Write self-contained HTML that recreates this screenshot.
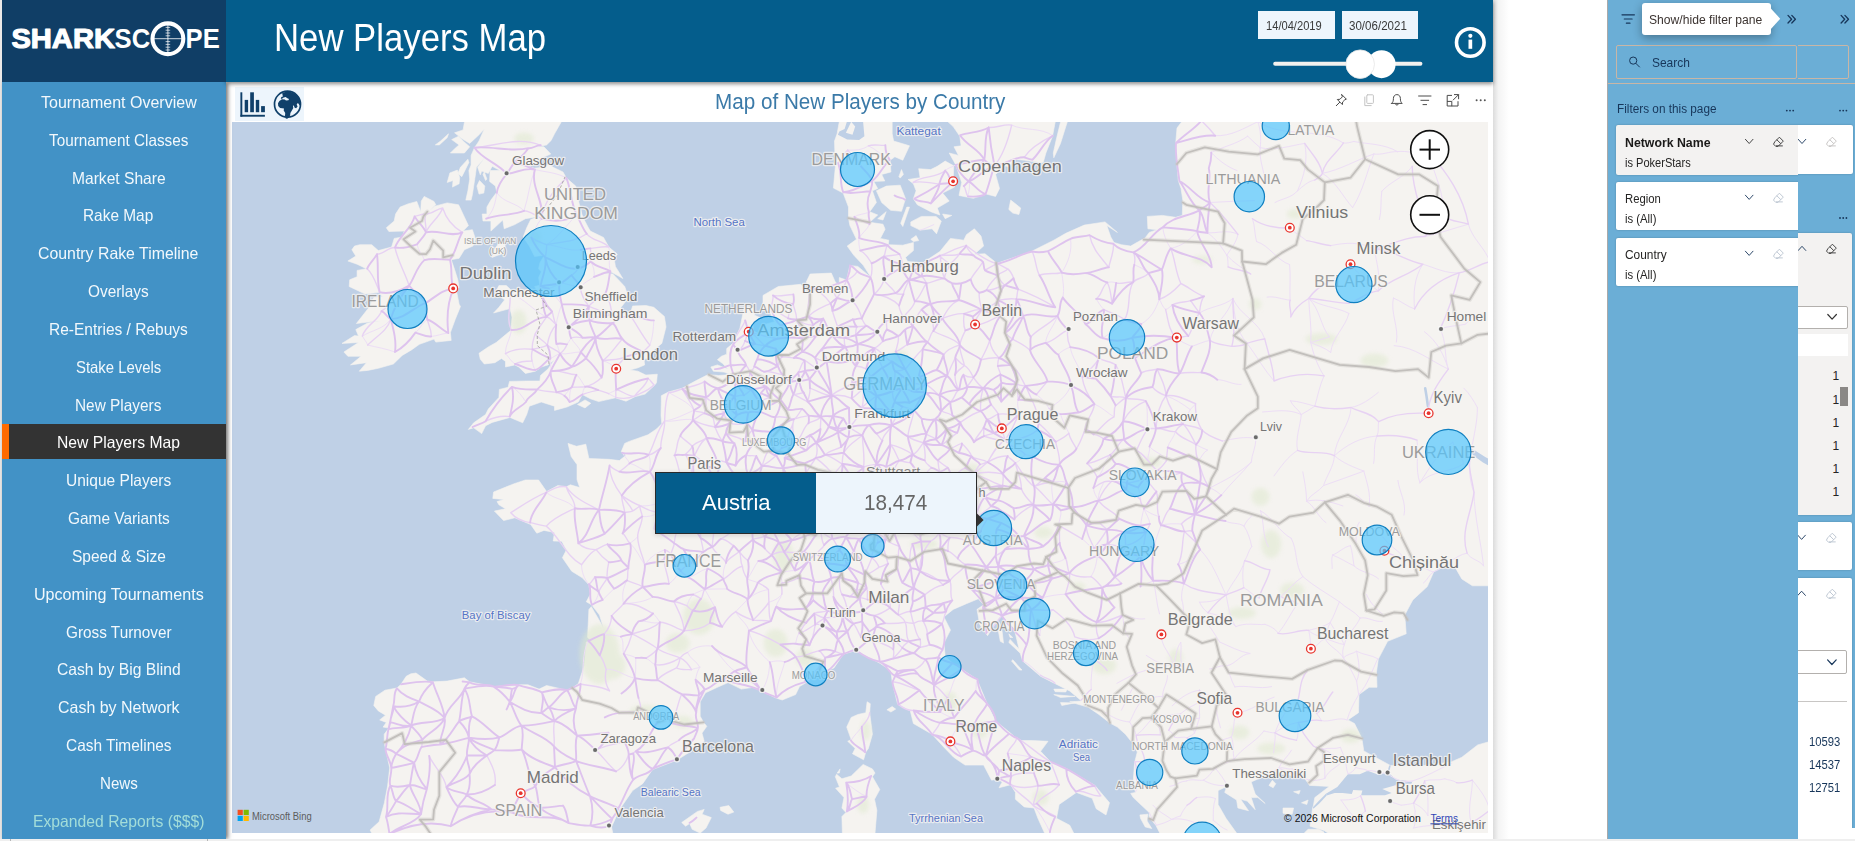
<!DOCTYPE html><html lang="en"><head><meta charset="utf-8"><title>New Players Map</title><style>
*{box-sizing:border-box;margin:0;padding:0}
html,body{width:1855px;height:841px;overflow:hidden;background:#fff}
body{font-family:"Liberation Sans",sans-serif;position:relative}
.abs,.t{position:absolute}
.t{white-space:nowrap;line-height:1;transform-origin:0 50%;display:block}
#leftstrip{left:0;top:0;width:2px;height:841px;background:#ebe9e8}
#logo{left:2px;top:0;width:224px;height:82px;background:#103e66}
#header{left:226px;top:0;width:1267px;height:82px;background:#045d8c;box-shadow:0 2px 4px rgba(0,0,0,.45)}
#sidebar{left:2px;top:82px;width:224px;height:756.5px;background:#4292c6;box-shadow:2px 0 4px rgba(0,0,0,.55)}
#sidebar a{position:absolute;left:0;width:224px;height:34.7px;display:block;text-decoration:none}
#sidebar a.sel{background:#333;border-left:7px solid #ff6a00}
#bottomstrip{left:0;top:838.5px;width:1855px;height:3px;background:#efefef}
#pageshadow{left:1493px;top:0;width:16px;height:838.5px;background:linear-gradient(90deg,#dcdcdc,#f4f4f4 35%,#fff)}
#iconbg{left:235px;top:87px;width:69px;height:34px;background:#edf5fc}
.datebox{top:11px;height:28px;background:#edf5fc}
#fp{left:1607px;top:0;width:191px;height:838.5px;background:#6baed6;border-left:1px solid #a9a9a9;overflow:hidden}
#fpb{left:1798px;top:0;width:57px;height:838.5px;background:#6baed6;overflow:hidden}
.card{background:#fff;border-radius:2px;box-shadow:0 0 2px rgba(0,0,0,.25)}
.tan{border:1px solid #c9b6a6}
</style></head><body>
<div id="leftstrip" class="abs"></div>
<div id="pageshadow" class="abs"></div>
<div id="report" class="abs" style="left:226px;top:82px;width:1267px;height:756px;background:#fff">
</div>
<div id="iconbg" class="abs"></div>
<svg class="abs" style="left:235px;top:87px" width="70" height="34" viewBox="235 87 70 34">
<g fill="#10406a">
<rect x="240.4" y="92.3" width="1.9" height="24.4"/><rect x="240.4" y="114.8" width="24.5" height="1.9"/>
<rect x="244.7" y="99.9" width="3.4" height="12.3"/>
<rect x="250.2" y="92.3" width="3.7" height="19.9"/>
<rect x="255.8" y="99.9" width="3.4" height="12.3"/>
<rect x="261.1" y="106.1" width="3.8" height="6.1"/>
</g>
<circle cx="287.5" cy="104.2" r="13" fill="#edf5fc" stroke="#10406a" stroke-width="1.7"/>
<path fill="#10406a" d="M282.2 93.2c2.4-1.2 5.6-1.7 8.6-1.2 3 .6 5.8 2.3 7.6 4.8 1.5 2 2.3 4.4 2.3 6.9l-1 1.7-1.3-1.9-1-.2-.7 1.1.9 2.2-1.5 1.6-1.4-.4-.9-2.3-.9.3.4 2.3-1.4 2.3-1.5 2.7-.3 2.4-2.3 2.9-1.9.4-.9-2.9.2-2.8-1.5-2.7.3-1.9-1.9-.3-2-.3-1.9-2-.2-2.6 1.4-2.3 2.5-1.7 2.8.2 1.3 1 2.4-.2.6-1.3-2.1-.9-1.1-1.2-2.2.5-1.2 1.2-1.6.3.5-1.8 1.6-.6-.3-1.3z"/>
</svg>
<svg class="abs" style="left:1330px;top:90px" width="160" height="22" viewBox="1330 90 160 22" fill="none" stroke="#4a4a4a" stroke-width="1" stroke-linecap="round" stroke-linejoin="round">
<path d="M1341.8 94.6l4.6 4.6-1.6.6-2.2 2.2-.2 2.6-2.5-2.5-3.8 3.8 3.8-3.8-2.6-2.6 2.6-.2 2.2-2.2z"/>
<g stroke="#c4c4c4"><rect x="1366.8" y="94.8" width="6.6" height="8.6" rx="0.8"/><path d="M1364.8 97v8.6h6.4"/></g>
<path d="M1391.6 103.4h10.6c-1.4-1.2-1.8-2.4-1.8-4.8 0-2.4-1.4-4-3.5-4s-3.5 1.6-3.5 4c0 2.4-.4 3.6-1.8 4.8zM1395.6 104.4c.2 1 2.4 1 2.6 0"/>
<path d="M1418.6 96h12.4M1420.9 100.3h7.8M1423 104.6h3.6"/>
<path d="M1451.6 95.4h-4.4v10.6h10.8v-4.4M1454.4 94.6h4.2v4.2M1458.4 94.8l-5.2 5.2M1447.4 101.4h4.4v4.4"/>
<g fill="#555" stroke="none"><circle cx="1476.6" cy="100.2" r="1"/><circle cx="1480.7" cy="100.2" r="1"/><circle cx="1484.8" cy="100.2" r="1"/></g>
</svg>
<span class="t" style="left:714.60px;top:91.33px;font-size:21.70px;color:#3b7aa8;transform:scaleX(0.9524);">Map of New Players by Country</span>
<svg id="map" width="1256" height="711" viewBox="232 122 1256 711" style="position:absolute;left:232px;top:122px;display:block" font-family="Liberation Sans, sans-serif">
<rect x="232" y="122" width="1256" height="711" fill="#bfd0e6"/>
<g id="land" fill="#f5f3f0" stroke="#f5f3f0" stroke-width="0.6" stroke-linejoin="round">
<path d="M424.2 196.4 L434.0 201.5 L435.8 204.8 L428.7 211.3 L434.8 206.2 L447.2 202.9 L458.6 204.8 L465.8 220.0 L468.4 225.6 L463.1 231.1 L472.4 229.7 L475.6 239.3 L472.9 246.1 L464.4 249.7 L459.1 258.3 L451.2 259.7 L454.6 269.6 L457.8 279.8 L459.1 287.4 L456.5 290.9 L459.1 304.2 L460.5 306.4 L455.2 319.5 L450.4 332.6 L451.2 340.4 L435.8 342.1 L434.0 339.1 L419.4 344.3 L411.5 349.9 L402.2 355.4 L393.4 364.0 L378.3 368.3 L367.7 370.4 L359.3 371.2 L366.4 362.7 L350.5 364.9 L361.1 356.3 L347.9 356.3 L343.9 352.0 L358.5 342.5 L342.0 343.4 L354.5 335.6 L358.5 336.1 L355.8 329.6 L367.7 323.0 L381.0 320.9 L370.4 321.7 L356.4 323.5 L369.1 307.3 L373.8 297.6 L382.3 296.7 L379.7 292.3 L365.1 294.0 L349.2 286.5 L349.7 279.8 L357.1 276.7 L357.1 270.4 L366.4 268.7 L357.1 264.2 L347.9 261.0 L355.8 256.1 L351.9 249.7 L354.5 246.1 L359.8 244.7 L371.7 244.7 L378.3 250.6 L391.6 247.0 L394.2 238.4 L402.2 237.0 L404.3 231.1 L388.9 231.5 L386.3 227.8 L394.2 221.0 L395.6 214.0 L400.1 207.1 L408.0 203.9 L416.8 201.5 L420.7 211.7 L421.3 201.1Z"/>
<path d="M563.8 104.6 L561.1 122.2 L554.5 133.8 L551.1 140.5 L546.6 144.9 L537.3 146.8 L543.9 146.8 L550.8 154.0 L539.9 158.7 L530.7 166.3 L520.1 164.9 L534.6 168.2 L542.6 167.3 L549.2 164.4 L553.2 167.3 L563.0 172.0 L566.4 178.1 L575.7 186.1 L578.3 200.1 L581.8 214.0 L583.6 218.7 L588.4 227.8 L590.3 231.1 L603.5 237.4 L608.8 247.0 L617.3 254.2 L614.1 258.3 L615.4 266.4 L622.8 278.5 L618.1 275.8 L610.7 271.8 L600.9 273.1 L612.8 274.0 L618.1 279.4 L624.7 286.5 L628.7 297.6 L620.7 307.7 L624.7 313.0 L630.5 313.0 L632.6 306.0 L645.9 305.5 L653.8 307.3 L664.4 316.5 L666.0 327.0 L661.8 343.4 L653.8 349.9 L649.9 357.2 L644.0 359.3 L644.6 364.9 L637.9 367.8 L630.0 370.0 L637.9 371.2 L645.9 375.1 L657.3 374.2 L656.5 382.7 L654.6 385.2 L645.1 394.1 L635.3 396.6 L626.0 401.2 L615.4 397.8 L598.7 401.6 L590.3 398.7 L582.3 394.5 L578.3 402.0 L566.9 407.0 L554.5 410.4 L554.5 406.2 L541.3 402.0 L529.3 406.2 L526.7 414.5 L522.7 422.8 L510.0 417.4 L492.2 422.4 L485.6 425.7 L481.7 433.6 L473.7 427.8 L468.4 429.4 L473.7 422.8 L485.6 414.5 L488.3 409.1 L498.9 397.4 L499.4 389.4 L508.1 387.3 L509.5 381.4 L526.7 381.0 L539.9 381.0 L540.5 375.5 L547.9 369.1 L554.5 359.7 L547.9 364.9 L541.3 367.0 L535.4 371.2 L525.4 373.4 L518.7 367.0 L514.8 364.9 L505.5 367.0 L505.5 361.4 L501.5 358.4 L494.9 362.7 L484.3 364.0 L480.3 359.3 L479.0 353.3 L488.3 346.9 L496.2 342.5 L510.8 330.4 L512.1 317.4 L510.0 308.6 L493.6 313.0 L498.9 307.3 L504.7 299.8 L501.5 297.6 L496.2 290.9 L498.9 285.6 L506.3 285.6 L512.1 290.9 L509.5 294.5 L517.9 289.6 L526.7 290.1 L532.0 288.7 L538.6 293.2 L534.6 286.5 L539.9 285.2 L538.6 277.6 L541.3 271.8 L538.6 268.7 L539.9 262.8 L544.4 255.2 L534.6 256.5 L529.3 246.1 L523.2 237.0 L526.7 227.8 L530.7 219.6 L538.6 216.4 L525.4 218.7 L514.8 224.6 L504.2 228.8 L502.8 220.0 L490.9 231.1 L490.9 221.0 L483.0 221.0 L482.2 214.0 L486.9 214.0 L486.9 207.1 L490.9 200.1 L496.8 192.2 L495.4 186.1 L489.6 181.4 L490.1 170.6 L500.2 170.6 L492.2 166.3 L488.3 173.4 L481.7 171.1 L480.3 174.8 L477.7 167.3 L485.6 156.8 L476.4 167.3 L475.6 173.4 L473.7 186.1 L472.4 194.5 L471.1 200.1 L465.8 200.1 L467.9 190.8 L469.7 179.1 L468.9 170.6 L471.1 164.9 L471.1 155.4 L474.5 147.7 L479.0 141.0 L484.3 129.0 L479.0 134.8 L469.7 143.4 L461.8 138.6 L454.6 132.8 L463.1 129.9 L464.4 122.2 L465.8 104.6Z"/>
<path d="M479.5 180.5 L484.8 186.1 L483.8 193.1 L479.0 194.1 L476.9 186.1Z"/>
<path d="M447.2 182.4 L449.9 172.9 L457.3 170.1 L459.7 177.7 L459.1 183.8 L452.5 187.1 L453.0 180.5Z"/>
<path d="M457.8 173.4 L461.8 176.7 L468.9 162.5 L467.9 159.2 L460.5 167.3Z"/>
<path d="M450.4 153.0 L464.4 153.0 L469.7 146.8 L463.1 141.0 L458.6 136.2 L451.7 139.6 L459.1 144.9 L455.2 148.2Z"/>
<path d="M435.3 144.9 L440.6 141.0 L448.5 133.8 L447.2 137.7 L439.3 144.9Z"/>
<path d="M484.3 172.0 L486.9 179.1 L485.6 180.5 L483.0 174.4Z"/>
<path d="M503.6 240.6 L505.2 246.1 L501.5 253.8 L492.2 257.4 L494.4 249.7 L498.9 242.9Z"/>
<path d="M577.5 404.5 L585.0 399.9 L590.8 403.3 L585.0 407.9Z"/>
<path d="M371.7 842.3 L371.7 833.1 L370.1 830.0 L379.1 821.8 L384.4 802.8 L387.6 786.1 L389.7 767.9 L385.5 748.8 L384.2 742.4 L384.2 734.2 L388.9 728.1 L383.1 727.1 L386.3 722.4 L379.7 719.9 L385.5 715.2 L378.3 710.9 L373.8 705.5 L375.7 696.4 L385.0 690.2 L396.9 688.0 L400.9 684.4 L406.2 676.3 L410.9 673.8 L416.0 673.0 L427.3 681.1 L433.2 681.8 L447.2 681.1 L464.4 677.8 L469.5 681.8 L493.6 686.6 L518.7 684.8 L528.0 684.8 L539.1 689.1 L546.6 685.5 L566.9 690.2 L572.2 688.0 L578.3 683.7 L584.4 665.3 L586.3 642.0 L591.6 640.9 L587.6 637.5 L588.9 609.4 L591.3 606.7 L599.5 620.7 L603.5 628.2 L599.5 615.0 L591.6 604.8 L586.3 601.8 L590.3 594.2 L588.9 584.7 L582.3 577.8 L571.7 571.2 L562.4 557.7 L566.4 550.0 L561.9 541.4 L569.1 541.4 L553.2 541.0 L554.5 532.4 L543.9 530.4 L536.8 533.2 L530.7 524.5 L514.8 517.8 L503.6 520.6 L494.4 511.1 L505.5 508.7 L498.9 504.8 L497.0 501.6 L504.2 499.6 L492.8 498.4 L493.6 492.0 L513.4 484.0 L525.4 480.0 L538.6 480.0 L546.6 491.6 L557.9 485.6 L566.4 486.8 L570.4 484.8 L579.7 487.6 L577.0 479.6 L577.0 464.6 L571.2 456.5 L568.0 443.4 L576.5 446.3 L585.8 444.2 L588.9 458.5 L608.8 459.3 L619.4 460.6 L626.0 455.3 L621.3 451.6 L624.7 443.4 L629.2 441.4 L648.0 434.8 L656.5 429.0 L661.8 423.7 L661.0 415.4 L661.3 401.6 L661.3 395.7 L668.4 392.0 L682.2 388.2 L696.2 380.6 L708.1 374.6 L718.7 375.5 L730.7 374.6 L724.0 372.1 L713.4 371.2 L710.8 367.0 L717.4 364.9 L728.0 369.1 L722.7 363.6 L717.4 359.7 L721.4 356.3 L726.7 354.2 L726.7 348.6 L732.8 343.4 L739.9 328.3 L744.4 306.4 L753.2 307.3 L754.5 315.2 L759.8 317.4 L753.2 321.7 L753.2 330.4 L759.8 334.8 L766.4 323.9 L774.4 321.7 L769.1 310.8 L762.4 309.9 L763.0 301.1 L763.0 295.4 L778.3 286.5 L800.9 284.3 L806.2 290.9 L811.5 293.2 L806.2 282.1 L810.1 274.0 L831.3 273.1 L835.3 282.1 L839.3 285.6 L839.3 277.6 L845.9 279.8 L844.6 288.7 L847.2 277.6 L849.9 265.5 L857.8 266.4 L871.1 277.6 L863.1 265.1 L853.8 255.2 L847.2 246.1 L856.5 239.3 L849.9 225.6 L848.5 218.2 L848.5 207.1 L843.2 193.1 L833.4 188.0 L835.3 167.3 L834.5 141.0 L837.1 133.8 L839.3 121.7 L839.3 109.5 L897.5 109.5 L897.5 109.5 L892.2 119.3 L892.2 133.8 L893.6 141.0 L909.5 145.8 L902.8 160.2 L894.9 156.8 L890.1 160.2 L890.9 172.0 L881.7 174.4 L884.8 181.0 L873.7 181.4 L877.7 188.5 L872.4 190.8 L876.4 202.5 L869.7 211.7 L877.7 215.0 L869.7 222.3 L883.0 224.2 L885.1 229.2 L880.3 238.4 L888.8 240.2 L888.3 244.7 L902.8 245.2 L913.4 242.5 L913.4 250.6 L905.5 257.4 L907.6 261.5 L922.7 262.8 L939.9 251.5 L950.5 238.4 L963.8 240.2 L966.4 234.7 L974.4 228.8 L981.0 236.1 L983.6 246.1 L974.4 254.2 L985.0 253.8 L996.9 263.3 L1011.5 258.3 L1031.3 251.5 L1053.8 240.2 L1065.8 233.3 L1084.3 225.1 L1105.0 221.9 L1117.4 232.4 L1106.8 225.6 L1110.8 237.0 L1114.0 242.5 L1121.4 244.7 L1130.7 246.1 L1138.6 241.5 L1145.2 237.9 L1149.2 232.4 L1157.1 229.7 L1147.9 228.8 L1147.3 216.4 L1162.4 215.4 L1175.7 217.3 L1182.3 215.4 L1182.8 200.1 L1181.0 188.5 L1178.3 180.5 L1177.0 164.9 L1175.7 143.4 L1177.0 128.0 L1183.6 119.3 L1186.3 109.5 L1498.9 109.5 L1498.9 585.8 L1488.0 585.8 L1472.4 585.8 L1461.8 578.9 L1455.2 567.4 L1440.6 567.4 L1434.0 571.2 L1427.3 586.6 L1412.8 599.9 L1404.8 615.0 L1406.2 633.8 L1387.6 641.3 L1378.3 659.1 L1376.5 671.9 L1377.0 687.3 L1369.1 687.3 L1359.0 694.6 L1358.5 712.7 L1347.9 719.9 L1354.5 723.5 L1361.9 738.5 L1363.8 750.9 L1390.3 765.4 L1419.4 766.1 L1451.2 761.9 L1461.8 757.3 L1477.7 744.9 L1488.0 742.0 L1498.9 741.3 L1498.9 842.3 L1328.0 842.3 L1328.0 833.1 L1324.0 830.4 L1310.0 826.2 L1312.6 808.0 L1313.4 805.6 L1314.8 797.6 L1329.3 786.4 L1309.5 785.4 L1304.7 778.4 L1285.6 774.2 L1265.8 775.6 L1251.2 781.9 L1255.2 794.1 L1265.2 803.5 L1257.8 797.6 L1251.2 797.6 L1255.2 809.7 L1247.2 801.1 L1240.6 799.3 L1248.5 810.7 L1237.9 808.0 L1236.6 800.0 L1224.7 792.4 L1226.8 786.4 L1218.1 790.6 L1218.1 804.5 L1226.0 818.3 L1236.6 833.1 L1236.6 842.3 L1159.8 842.3 L1159.8 833.1 L1155.8 825.2 L1149.2 817.6 L1149.2 812.5 L1133.3 797.6 L1130.7 793.4 L1135.4 792.4 L1133.3 780.2 L1134.6 762.6 L1137.3 752.0 L1132.5 743.1 L1125.4 734.2 L1117.4 727.1 L1109.5 722.8 L1098.9 714.5 L1088.3 707.3 L1069.7 701.8 L1081.7 701.1 L1069.7 691.0 L1055.2 683.7 L1040.6 676.3 L1022.6 660.9 L1019.4 650.5 L1014.1 628.2 L1002.2 615.8 L995.6 622.6 L987.6 635.7 L979.7 624.4 L977.0 609.4 L983.6 604.8 L978.3 598.8 L966.4 603.7 L953.2 609.4 L943.9 616.9 L950.5 630.1 L943.9 643.1 L945.2 656.1 L952.4 663.1 L977.0 679.3 L986.3 701.8 L995.6 721.0 L1008.8 731.7 L1019.4 740.6 L1032.6 740.6 L1048.0 741.3 L1040.6 751.3 L1051.2 762.6 L1066.3 768.6 L1094.9 785.4 L1109.5 802.8 L1106.0 814.9 L1096.2 808.7 L1092.2 798.3 L1076.4 792.4 L1059.1 804.5 L1056.5 818.3 L1069.7 825.2 L1073.7 833.1 L1073.7 842.3 L1044.6 842.3 L1044.6 833.1 L1037.9 818.3 L1034.0 808.0 L1024.2 806.9 L1015.4 799.3 L1015.4 792.4 L1010.7 784.7 L999.0 787.8 L1002.2 781.9 L996.9 779.1 L991.6 780.2 L983.6 765.1 L965.1 765.1 L953.7 757.3 L943.4 746.7 L932.0 734.2 L913.4 723.5 L910.3 710.9 L897.5 703.7 L892.2 681.8 L890.9 670.8 L880.3 663.5 L863.1 654.2 L856.0 650.5 L843.2 654.2 L834.0 667.9 L818.1 673.8 L812.0 676.3 L807.5 681.8 L799.5 686.6 L795.6 694.6 L782.3 700.0 L776.5 698.2 L761.1 691.0 L753.2 687.3 L741.3 689.1 L728.0 682.6 L717.4 687.3 L705.5 692.8 L700.2 701.8 L700.2 716.3 L703.6 722.4 L706.8 726.3 L702.0 733.1 L704.2 741.3 L693.6 749.5 L677.1 760.1 L652.5 769.6 L642.7 783.7 L632.6 790.6 L619.4 809.7 L611.5 826.9 L612.8 833.1 L612.8 842.3Z"/>
<path d="M937.3 109.5 L945.2 119.3 L953.2 126.6 L959.8 136.2 L961.1 145.8 L954.0 146.8 L958.5 155.4 L949.2 153.0 L955.8 164.9 L961.7 182.4 L959.0 195.5 L973.3 198.3 L986.3 194.1 L995.6 196.4 L999.5 188.5 L995.6 174.4 L1004.8 165.8 L1010.1 167.3 L1012.8 159.2 L1024.7 160.2 L1032.6 161.6 L1043.2 162.5 L1045.9 153.0 L1052.5 136.2 L1055.2 122.2 L1056.5 109.5Z"/>
<path d="M1053.8 157.8 L1060.5 143.4 L1065.8 126.6 L1069.7 114.4 L1069.7 109.5 L1063.1 109.5 L1060.5 122.2 L1056.5 138.6 L1053.3 153.0Z"/>
<path d="M876.4 190.8 L886.4 186.1 L900.2 185.2 L905.5 198.7 L901.5 211.3 L890.7 210.3 L881.7 202.5Z"/>
<path d="M902.8 226.5 L909.5 207.1 L906.8 207.1 L900.7 223.3Z"/>
<path d="M877.7 218.7 L886.2 211.7 L883.0 220.0Z"/>
<path d="M913.4 183.8 L908.1 179.5 L920.1 177.7 L918.7 168.7 L930.7 169.6 L937.3 166.3 L945.2 161.1 L953.7 165.8 L953.2 181.4 L954.5 187.1 L942.6 193.1 L949.2 201.1 L937.3 208.0 L939.9 215.0 L930.7 211.7 L917.4 204.8 L913.4 198.7 L916.1 190.8Z"/>
<path d="M910.8 221.9 L921.4 216.4 L936.0 216.4 L941.3 221.0 L936.5 233.8 L932.0 228.8 L920.1 230.1 L910.8 225.6Z"/>
<path d="M942.6 214.0 L951.8 215.4 L945.2 218.7Z"/>
<path d="M1008.8 209.4 L1010.7 200.1 L1020.7 208.0 L1018.9 214.5 L1012.8 213.1Z"/>
<path d="M910.8 239.3 L916.1 235.6 L918.7 240.6 L913.4 241.5Z"/>
<path d="M898.9 176.7 L901.5 169.6 L903.4 174.4 L900.2 178.1Z"/>
<path d="M924.0 133.8 L928.0 132.4 L925.4 134.8Z"/>
<path d="M867.1 701.8 L870.3 703.7 L869.7 712.7 L872.4 734.2 L868.4 748.4 L865.8 752.0 L863.6 759.8 L852.5 753.8 L855.2 748.4 L847.7 741.3 L851.2 739.6 L846.7 727.1 L851.2 717.4 L857.8 714.5 L865.8 712.7Z"/>
<path d="M863.1 764.4 L872.4 768.9 L875.0 773.1 L872.4 776.7 L879.8 789.6 L874.5 799.3 L876.9 810.4 L875.0 833.1 L875.0 842.3 L843.2 842.3 L842.4 833.1 L841.9 816.6 L845.9 812.5 L841.9 808.0 L844.0 797.6 L835.6 788.2 L839.5 787.1 L835.3 776.7 L836.6 774.2 L841.9 778.8 L851.2 776.0Z"/>
<path d="M837.1 773.1 L840.1 768.9 L839.3 773.1Z"/>
<path d="M886.9 709.8 L892.2 706.5 L895.7 709.1 L890.9 712.0Z"/>
<path d="M681.7 822.5 L697.5 811.4 L704.2 809.4 L702.0 814.2 L711.3 817.6 L706.0 828.0 L700.2 833.1 L692.2 829.3 L689.6 823.5 L685.6 826.2Z"/>
<path d="M720.1 807.3 L728.8 805.6 L733.8 812.1 L728.0 814.2 L720.6 810.4Z"/>
<path d="M1140.5 818.3 L1139.9 814.9 L1147.9 814.2 L1147.1 821.1 L1151.8 828.6 L1145.2 826.9Z"/>
<path d="M1283.0 813.2 L1283.0 808.0 L1293.6 808.0 L1292.2 814.2 L1286.9 814.2Z"/>
<path d="M1268.9 785.4 L1272.4 780.2 L1275.8 783.7 L1273.2 787.8Z"/>
<path d="M1293.6 791.7 L1300.2 790.6 L1298.9 794.1Z"/>
<path d="M1301.5 802.8 L1308.1 800.0 L1306.8 804.5Z"/>
<path d="M1304.2 833.1 L1308.1 829.3 L1318.7 829.3 L1324.0 832.1 L1324.0 842.3 L1304.2 842.3Z"/>
<path d="M1003.5 622.6 L1008.8 622.6 L1011.5 628.2 L1006.2 629.3Z"/>
<path d="M999.5 622.6 L1002.2 631.9 L1003.5 643.1 L1000.3 641.3 L998.2 630.1Z"/>
<path d="M1010.1 639.4 L1022.0 652.4 L1019.4 652.4 L1008.8 642.4Z"/>
<path d="M1012.8 659.8 L1022.0 670.1 L1019.4 670.1 L1011.5 660.9Z"/>
<path d="M1053.8 689.1 L1067.1 689.1 L1065.8 692.0 L1055.2 691.7Z"/>
<path d="M1053.8 694.6 L1075.0 696.4 L1060.5 697.5Z"/>
<path d="M1060.5 702.6 L1075.0 702.9 L1061.8 705.5Z"/>
<path d="M1008.8 633.8 L1012.8 637.5 L1010.1 637.5Z"/>
</g>
<g id="water" fill="#bfd0e6">
<path d="M837.9 134.8 L847.2 139.6 L859.1 140.1 L864.4 136.2 L863.1 121.7 L865.8 118.3 L859.1 116.8 L855.2 121.7 L847.2 120.7 L844.6 129.0 L839.3 131.4Z"/>
<path d="M1325.9 793.8 L1337.3 787.1 L1347.9 774.2 L1359.8 774.2 L1367.7 770.7 L1377.0 774.2 L1387.1 773.1 L1388.9 773.1 L1395.6 779.5 L1412.2 781.6 L1411.5 783.7 L1400.9 783.7 L1382.3 788.9 L1391.6 793.1 L1385.0 795.2 L1361.1 795.2 L1362.4 790.6 L1353.2 789.9 L1351.8 794.1 L1342.6 793.1 L1334.6 793.1 L1326.7 795.5Z"/>
<path d="M1312.9 807.3 L1318.7 801.1 L1325.9 793.8 L1326.7 795.5 L1319.3 803.5 L1313.4 808.7Z"/>
<path d="M1387.1 773.1 L1388.9 773.1 L1390.8 765.4 L1389.2 765.4Z"/>
</g>
<g fill="#f5f3f0">
<path d="M845.9 132.8 L851.2 121.7 L855.2 126.6 L852.5 134.8Z"/>
</g>
<g id="green" fill="#dfe9cf" opacity="0.55" style="filter:blur(2.2px)">
<ellipse cx="599.5" cy="654.2" rx="20" ry="30"/>
<ellipse cx="611.5" cy="665.3" rx="14" ry="14"/>
<ellipse cx="802.2" cy="504.8" rx="9" ry="22"/>
<ellipse cx="783.6" cy="555.8" rx="10" ry="16"/>
<ellipse cx="698.9" cy="616.9" rx="16" ry="18"/>
<ellipse cx="677.7" cy="643.1" rx="12" ry="10"/>
<ellipse cx="775.7" cy="643.1" rx="12" ry="14"/>
<ellipse cx="804.8" cy="657.9" rx="9" ry="9"/>
<ellipse cx="900.2" cy="356.3" rx="8" ry="6"/>
<ellipse cx="836.6" cy="492.8" rx="7" ry="16"/>
<ellipse cx="971.7" cy="472.7" rx="10" ry="9"/>
<ellipse cx="645.9" cy="710.9" rx="16" ry="6"/>
<ellipse cx="683.0" cy="721.7" rx="10" ry="6"/>
<ellipse cx="1271.1" cy="544.1" rx="10" ry="14"/>
<ellipse cx="1292.2" cy="590.4" rx="12" ry="8"/>
<ellipse cx="1241.9" cy="613.1" rx="14" ry="6"/>
<ellipse cx="1149.2" cy="462.6" rx="12" ry="5"/>
<ellipse cx="1260.5" cy="496.8" rx="9" ry="9"/>
<ellipse cx="1043.2" cy="532.4" rx="9" ry="6"/>
<ellipse cx="1006.2" cy="540.2" rx="12" ry="6"/>
<ellipse cx="924.0" cy="544.1" rx="14" ry="5"/>
<ellipse cx="1239.3" cy="732.4" rx="10" ry="7"/>
<ellipse cx="1271.1" cy="748.4" rx="14" ry="6"/>
<ellipse cx="1350.5" cy="736.0" rx="10" ry="7"/>
<ellipse cx="1175.7" cy="657.9" rx="7" ry="9"/>
<ellipse cx="1104.2" cy="665.3" rx="12" ry="9"/>
<ellipse cx="1077.7" cy="586.6" rx="8" ry="4"/>
<ellipse cx="524.0" cy="138.6" rx="10" ry="6"/>
<ellipse cx="534.6" cy="237.0" rx="6" ry="6"/>
<ellipse cx="518.7" cy="321.7" rx="8" ry="12"/>
<ellipse cx="950.5" cy="701.8" rx="7" ry="10"/>
<ellipse cx="979.7" cy="730.6" rx="8" ry="8"/>
<ellipse cx="1040.6" cy="797.6" rx="8" ry="8"/>
<ellipse cx="865.8" cy="730.6" rx="5" ry="10"/>
<ellipse cx="863.1" cy="804.5" rx="6" ry="9"/>
<ellipse cx="1321.4" cy="339.1" rx="16" ry="6"/>
<ellipse cx="1374.4" cy="360.6" rx="14" ry="7"/>
<ellipse cx="1255.2" cy="304.2" rx="6" ry="6"/>
<ellipse cx="1294.9" cy="214.0" rx="8" ry="5"/>
<ellipse cx="1202.2" cy="259.7" rx="10" ry="4"/>
</g>
<path d="M1425.2 388.2 L1426.6 396.6 L1427.9 406.2" fill="none" stroke="#bfd0e6" stroke-width="2.6" stroke-linecap="round"/>
<path d="M1467.1 447.5 L1475.0 450.4 L1485.6 457.3 L1498.9 464.6 L1498.9 470.7 L1483.0 462.6 L1473.7 455.7" fill="#bfd0e6"/>
<g id="roads" fill="none" stroke-linecap="round">
<path stroke="#eddef6" stroke-width="1" d="M1257.8 121.7C1283.5 138.9 1317.6 126.2 1343.4 143.0M1474.0 492.4C1462.3 463.8 1477.8 435.5 1477.4 407.5M1483.5 565.8C1481.0 541.5 1474.3 517.0 1474.0 492.4M1427.9 151.1C1433.2 172.6 1445.3 193.1 1443.2 216.4M1448.3 369.1C1430.6 361.0 1414.9 346.9 1394.2 345.6M1352.6 207.6C1362.9 191.2 1367.1 171.8 1373.8 154.0M1257.8 121.7C1239.3 115.4 1220.0 122.4 1201.4 120.7M1322.4 173.4C1340.5 169.9 1356.6 159.8 1373.8 154.0M1200.1 549.6C1212.7 562.2 1218.5 579.4 1226.0 595.0M1419.9 482.8C1429.3 468.2 1438.1 452.5 1452.8 442.2M1232.9 298.5C1239.3 315.0 1259.3 321.4 1264.7 338.7M1334.4 455.7C1335.3 438.2 1350.3 425.0 1351.1 407.5M1209.9 488.0C1224.1 480.4 1239.3 473.5 1251.2 462.2M1297.5 190.8C1304.3 175.8 1308.2 159.9 1304.7 143.4M1232.9 298.5C1229.5 314.6 1212.6 323.9 1209.9 340.4M1419.9 482.8C1431.5 469.9 1450.5 473.1 1463.6 463.8M1247.2 343.4C1235.6 330.8 1234.4 314.3 1232.9 298.5M1334.4 455.7C1346.4 444.9 1360.5 437.1 1377.0 436.0M1247.2 343.4C1256.4 355.6 1263.9 369.5 1274.0 381.0M1422.8 264.2C1413.9 277.8 1413.2 293.5 1414.6 309.0M1322.4 173.4C1336.1 181.4 1342.6 196.4 1352.6 207.6M1425.2 236.5C1439.7 233.3 1454.1 228.2 1468.4 224.2M1257.8 121.7C1244.3 128.0 1231.1 136.6 1215.2 135.7M1353.7 141.5C1368.2 144.3 1384.1 143.6 1397.4 151.6M1304.7 143.4C1290.1 145.7 1275.3 151.1 1260.2 147.7M1221.3 495.2C1230.4 483.6 1241.8 473.5 1251.2 462.2M1209.9 202.5C1224.5 201.7 1239.7 201.0 1254.4 200.6M1339.4 601.8C1327.4 593.5 1313.9 586.4 1302.8 576.6M1448.3 369.1C1444.0 354.5 1437.0 341.1 1424.4 331.7M1393.4 298.0C1390.1 312.9 1399.1 327.3 1396.4 342.1M1308.7 298.5C1309.2 313.0 1311.9 327.9 1310.8 342.5M580.5 684.0C585.1 670.2 580.9 654.2 588.4 640.9M1374.4 249.3C1360.5 241.3 1345.4 242.6 1330.7 245.6M1308.7 298.5C1320.1 308.7 1320.2 325.5 1329.3 336.9M1412.0 781.2C1425.9 777.1 1438.6 769.1 1451.7 763.3M1468.4 224.2C1471.9 238.7 1485.4 247.9 1489.9 261.9M546.6 316.9C533.2 311.4 524.6 297.5 510.0 294.0M1348.9 313.4C1345.5 327.5 1332.1 337.4 1330.7 352.4M1308.7 298.5C1320.6 306.9 1336.3 306.7 1348.9 313.4M1323.5 485.6C1337.0 481.3 1350.4 475.6 1363.8 471.1M1419.9 482.8C1414.9 469.0 1418.9 454.2 1417.0 440.1M534.9 169.6C529.5 182.7 528.5 197.5 524.0 210.8M1052.8 135.7C1040.6 126.9 1024.6 131.3 1011.7 125.1M576.8 215.0C566.5 224.5 558.9 237.3 546.6 244.7M1471.1 822.5C1466.8 808.4 1472.5 794.1 1472.4 780.2M1374.4 249.3C1376.5 262.9 1381.1 276.8 1378.1 290.9M1413.6 828.0C1427.1 825.0 1441.2 824.3 1454.9 826.9M1291.2 538.3C1278.9 531.6 1272.7 517.5 1260.5 510.7M1263.9 731.0C1255.9 742.1 1242.0 747.7 1234.2 759.1M1448.3 369.1C1444.0 356.2 1446.9 341.5 1440.1 329.1M1358.7 694.6C1368.1 684.4 1371.9 670.7 1377.8 658.7M1289.6 264.6C1276.4 260.2 1269.9 245.6 1256.5 241.5M1237.1 712.7C1251.1 711.6 1261.6 701.2 1274.2 697.1M1302.8 576.6C1294.5 565.3 1297.8 550.1 1291.2 538.3M1247.7 136.2C1236.9 144.2 1223.0 146.5 1211.2 152.5M1381.8 191.3C1390.3 181.2 1404.6 177.5 1412.2 166.3M1349.5 264.2C1359.0 272.9 1367.3 283.6 1378.1 290.9M1244.6 560.8C1241.5 573.7 1231.1 583.1 1226.0 595.0M1301.3 414.5C1288.8 408.6 1275.5 411.1 1262.6 412.0M1433.4 572.0C1445.7 567.9 1453.8 555.5 1467.1 553.1M748.9 630.8C751.6 643.9 760.2 653.7 769.8 662.2M1422.8 264.2C1434.7 267.7 1446.4 274.1 1459.4 272.7M1268.4 546.8C1262.1 535.7 1264.4 522.4 1260.5 510.7M1271.6 686.6C1259.5 689.6 1246.9 684.8 1234.8 686.9M1342.8 505.9C1331.2 502.0 1319.1 498.2 1306.6 501.2M776.5 697.5C775.6 684.9 782.0 673.7 784.7 662.0M1232.9 298.5C1223.3 306.6 1209.7 306.2 1199.5 313.0M1297.5 450.4C1295.0 438.2 1300.4 426.4 1301.3 414.5M1324.0 375.9C1317.4 365.8 1313.4 354.3 1310.8 342.5M1369.1 506.3C1371.1 494.1 1366.9 482.5 1363.8 471.1M1289.6 264.6C1290.9 276.4 1289.4 288.5 1290.1 300.2M1297.5 603.7C1290.6 613.2 1285.8 624.4 1278.2 633.4M1404.0 515.1C1406.9 502.8 1399.2 491.9 1397.9 480.4M1070.5 238.8C1072.4 251.2 1068.2 262.4 1061.8 272.7M1427.9 815.6C1428.0 804.0 1428.7 792.0 1424.7 780.9M1489.6 810.4C1487.4 798.4 1479.5 789.3 1472.4 780.2M1297.5 450.4C1287.5 456.7 1280.9 466.7 1274.0 475.9M546.6 244.7C558.0 245.3 568.9 251.9 580.8 249.8M734.9 671.2C725.4 664.7 720.0 654.1 712.1 646.1M1153.2 580.8C1156.3 591.6 1156.2 603.2 1159.5 613.9M1222.6 441.0C1233.5 438.9 1244.7 436.0 1256.0 438.5M1226.0 595.0C1228.5 605.7 1229.3 617.2 1235.8 626.7M1334.4 455.7C1342.8 463.2 1353.5 467.1 1363.8 471.1M390.8 319.1C384.1 329.2 371.6 330.1 362.4 336.1M496.8 192.7C503.0 202.8 516.5 202.5 524.0 210.8M574.9 508.3C567.7 499.1 554.5 499.8 546.3 492.4M534.9 169.6C545.4 172.2 556.8 172.3 566.4 178.1M1264.7 180.0C1263.9 169.3 1258.7 158.8 1260.2 147.7M1219.7 642.0C1213.7 633.1 1209.0 622.8 1199.3 616.9M1161.4 634.9C1160.6 646.7 1171.7 654.1 1173.3 665.0M1249.9 653.5C1239.2 651.6 1229.5 646.3 1219.7 642.0M947.6 697.9C952.2 688.3 953.4 676.7 961.4 668.6M1404.3 558.1C1415.0 560.3 1423.0 569.2 1433.4 572.0M1419.4 205.2C1421.6 215.5 1424.3 226.0 1425.2 236.5M1334.4 455.7C1334.0 466.7 1326.6 475.5 1323.5 485.6M1070.3 347.1C1071.5 357.8 1079.8 366.2 1082.0 376.6M1314.8 406.2C1317.6 396.1 1319.7 385.5 1324.0 375.9M1091.2 689.5C1090.4 678.9 1092.2 668.3 1093.8 657.9M1170.7 248.4C1181.8 246.3 1190.2 239.6 1197.1 231.1M1237.1 170.6C1227.0 166.9 1218.6 160.2 1211.2 152.5M1070.8 385.6C1067.0 396.4 1057.8 402.5 1049.1 408.5M1217.8 696.4C1214.0 707.2 1217.8 717.6 1220.5 727.8M1199.5 690.2C1188.4 691.7 1179.9 698.3 1172.2 705.8M694.0 410.3C684.4 414.2 675.1 419.7 664.6 421.0M1049.9 832.1C1045.4 822.7 1040.5 813.3 1033.4 805.6M1378.3 392.4C1370.1 398.8 1361.7 405.5 1351.1 407.5M1145.2 670.5C1135.2 673.2 1125.9 678.3 1116.9 683.3M1235.8 626.7C1228.7 618.0 1218.3 615.1 1208.0 612.8M668.7 392.4C677.3 398.0 687.9 401.2 694.0 410.3M1360.1 618.0C1356.3 627.6 1346.3 633.9 1344.4 644.6M1237.9 234.3C1228.1 229.2 1217.5 233.3 1207.5 232.9M1427.9 151.1C1417.9 155.4 1407.4 150.1 1397.4 151.6M1141.3 323.9C1151.1 318.6 1155.8 309.3 1159.3 299.4M1226.8 255.2C1233.4 263.0 1242.7 268.0 1250.7 274.0M1275.0 732.8C1278.3 723.1 1283.3 714.2 1290.1 706.5M606.2 669.4C617.0 668.1 625.0 676.8 635.0 678.2M1404.3 558.1C1398.5 549.8 1388.4 545.6 1382.8 537.1M652.8 596.9C644.0 602.5 633.6 602.9 623.6 603.7M761.7 691.0C767.4 682.3 769.4 672.3 769.8 662.2M1356.6 681.1C1361.1 671.3 1358.6 661.1 1356.6 651.3M1280.9 596.5C1288.7 590.6 1294.3 581.8 1302.8 576.6M1136.2 735.3C1144.7 729.9 1148.9 719.9 1156.9 714.1M1057.5 315.8C1054.9 325.3 1046.4 332.5 1045.6 342.9M1306.6 501.2C1306.5 491.4 1304.7 481.5 1302.8 471.9M1226.8 255.2C1221.4 246.9 1216.0 238.4 1207.5 232.9M1323.0 749.2C1322.5 758.9 1325.8 768.7 1324.8 778.4M1265.0 624.4C1255.3 625.2 1245.1 622.2 1235.8 626.7M1349.5 264.2C1343.5 271.9 1336.4 278.7 1327.5 283.0M1325.9 522.6C1317.9 517.0 1315.0 506.4 1306.6 501.2M1039.8 635.3C1040.2 624.8 1045.7 616.6 1053.0 609.7M1173.3 665.0C1162.9 665.9 1154.4 660.9 1146.3 655.4M1102.8 338.2C1110.6 332.7 1119.4 328.0 1124.6 319.5M693.0 419.9C683.6 417.7 674.1 422.5 664.6 421.0M1381.8 191.3C1380.4 200.6 1381.8 210.4 1379.4 219.6M1147.6 429.4C1146.6 420.1 1148.4 410.3 1145.8 401.1M395.0 352.0C386.3 348.8 376.8 347.2 367.7 345.1M486.2 218.7C493.7 211.7 495.5 202.2 496.8 192.7M1165.9 395.7C1174.7 398.9 1182.9 403.8 1190.2 409.6M1354.0 565.8C1360.7 572.8 1371.6 572.5 1378.6 578.9M1304.7 778.4C1295.7 776.1 1287.3 771.6 1278.7 768.2M1358.7 694.6C1354.2 702.6 1349.5 710.9 1347.1 719.9M1373.6 463.4C1375.5 454.5 1372.8 444.7 1377.0 436.0M1226.0 595.0C1218.3 601.2 1208.9 602.0 1199.5 602.2M1324.8 778.4C1328.3 769.1 1339.4 767.1 1344.2 759.1M1244.6 560.8C1242.2 569.6 1242.4 578.8 1243.8 587.7M1366.4 594.2C1369.7 602.9 1376.7 609.0 1383.4 615.0M1356.6 681.1C1352.7 673.2 1349.1 664.8 1343.4 657.9M1343.4 657.9C1339.1 649.9 1328.9 647.1 1325.1 638.6M1178.1 564.3C1187.6 562.9 1193.9 556.1 1200.1 549.6M1419.4 205.2C1427.6 208.1 1435.8 211.8 1443.2 216.4M1339.4 601.8C1345.6 608.0 1354.5 611.1 1360.1 618.0M1330.1 622.6C1334.3 630.2 1340.8 636.6 1344.4 644.6M1357.9 820.1C1350.6 815.0 1346.1 807.0 1341.0 800.0M1129.6 722.0C1120.6 721.3 1112.5 717.6 1105.2 712.3M1257.8 121.7C1260.8 130.1 1261.2 139.0 1260.2 147.7M644.8 565.0C640.0 557.9 636.7 549.4 630.2 543.4M1231.3 737.1C1223.1 739.5 1214.8 742.5 1207.2 746.7M1249.9 653.5C1240.4 653.9 1236.0 664.2 1227.1 665.7M1097.3 477.1C1104.6 471.5 1103.6 460.8 1110.2 454.8M1347.1 719.9C1338.5 716.4 1329.9 722.7 1321.4 720.6M1440.1 329.1C1448.0 325.7 1456.9 326.1 1465.2 324.3M1275.0 732.8C1281.8 727.2 1289.8 724.0 1298.3 722.4M687.5 652.4C694.6 646.5 703.2 645.1 712.1 646.1M1297.5 190.8C1291.8 197.9 1282.3 198.4 1275.0 202.5M889.6 159.7C881.7 156.5 876.4 148.9 868.4 145.8M1129.6 722.0C1133.7 714.8 1135.8 706.1 1142.6 700.4M1237.1 712.7C1232.2 720.0 1235.2 729.5 1231.3 737.1M664.8 549.9C656.5 552.6 649.5 557.5 644.8 565.0M653.8 320.4C653.5 328.7 652.8 337.2 649.9 345.1M1314.8 406.2C1306.8 404.0 1298.7 401.2 1290.4 400.8M1062.8 297.6C1064.7 289.3 1062.7 280.9 1061.8 272.7M846.2 782.6C852.2 788.2 859.3 792.9 866.6 796.9M1171.7 819.4C1180.2 817.8 1188.3 820.0 1196.1 823.1M511.3 330.0C510.8 338.2 504.9 345.3 505.5 353.7M610.4 271.3C607.8 263.4 610.9 254.9 608.8 247.0M1217.3 379.7C1225.5 379.5 1232.8 385.1 1241.1 384.4M1227.1 785.7C1218.8 786.0 1210.7 784.6 1203.5 780.2M1463.6 463.8C1462.4 455.5 1454.6 450.2 1452.8 442.2M1256.0 438.5C1256.1 446.7 1251.8 454.2 1251.2 462.2M1200.9 701.8C1193.6 705.1 1186.1 708.6 1180.2 714.1M1354.0 565.8C1346.8 562.5 1340.0 557.8 1332.5 555.0M1121.4 710.2C1124.6 702.9 1129.1 696.0 1132.2 688.8M1393.4 298.0C1400.8 300.9 1407.1 306.5 1414.6 309.0M1183.6 623.7C1183.0 615.8 1184.6 607.6 1181.8 599.9M1173.3 665.0C1176.7 657.8 1175.6 648.9 1180.7 642.4M1180.7 642.4C1182.2 650.1 1178.9 658.5 1182.6 666.1M1373.8 154.0C1381.8 155.4 1389.5 151.2 1397.4 151.6M1226.8 255.2C1230.9 248.5 1236.7 242.4 1237.9 234.3M623.6 603.7C621.5 595.5 623.0 587.6 627.0 580.4M1031.1 756.9C1023.4 755.4 1015.4 754.5 1007.7 753.4M1477.4 407.5C1473.6 400.7 1469.6 393.7 1463.9 388.2M1152.9 805.2C1157.9 811.5 1165.5 814.7 1171.7 819.4M1094.4 404.1C1101.8 406.8 1107.3 413.0 1114.0 416.9M1323.0 749.2C1330.3 751.8 1336.0 758.4 1344.2 759.1M1180.2 714.1C1172.5 713.9 1164.6 717.1 1156.9 714.1M735.7 611.6C738.7 618.9 747.0 622.8 748.9 630.8M1225.2 665.7C1230.0 672.0 1230.8 680.3 1234.8 686.9M1267.1 297.1C1275.0 295.8 1282.5 299.5 1290.1 300.2M1252.5 218.7C1255.0 226.0 1254.5 234.1 1256.5 241.5M747.6 599.5C753.4 594.0 760.6 590.9 768.4 589.5M1042.7 597.6C1050.1 595.8 1057.8 594.3 1065.5 594.2M1306.6 501.2C1310.5 494.2 1318.9 491.8 1323.5 485.6M1308.7 630.4C1315.9 628.2 1323.7 627.1 1330.1 622.6M1357.9 820.1C1350.3 819.0 1342.6 820.8 1335.2 821.8M1022.8 660.9C1029.9 664.1 1034.9 670.3 1040.6 675.2M1122.7 615.0C1123.6 622.6 1123.8 630.5 1128.3 637.2M1330.1 622.6C1334.1 616.1 1336.3 608.7 1339.4 601.8M1360.1 618.0C1367.8 616.4 1374.6 622.5 1382.3 621.4M1377.8 658.7C1371.3 654.8 1363.2 655.0 1356.6 651.3M727.2 588.9C719.8 589.3 712.2 588.7 704.8 589.2M1170.7 248.4C1166.5 242.0 1163.5 235.0 1162.7 227.4M1053.0 504.4C1053.7 496.9 1050.2 489.4 1052.4 482.0M1144.7 618.8C1137.0 619.9 1129.9 616.8 1122.7 615.0M1359.3 522.2C1354.8 528.9 1356.7 536.8 1355.8 544.1M1310.8 342.5C1317.4 345.7 1324.9 347.5 1330.7 352.4M1231.3 737.1C1234.5 744.0 1232.2 751.9 1234.2 759.1M1166.5 460.7C1163.1 453.4 1154.0 452.5 1149.5 446.5M1278.7 768.2C1281.4 761.2 1288.0 756.7 1291.5 750.2M649.9 471.9C642.3 471.1 636.9 464.7 629.6 463.4M1213.3 820.4C1213.2 813.1 1212.9 805.6 1215.4 798.6M1097.5 555.8C1096.3 563.0 1095.3 570.4 1090.9 576.6M1244.0 526.1C1248.1 532.2 1250.2 539.4 1251.7 546.5M1167.5 675.6C1167.8 683.0 1161.9 689.3 1162.7 696.8M541.5 218.7C536.4 224.0 534.7 231.4 531.4 237.6M659.9 622.2C652.7 625.0 645.6 619.5 638.5 621.4M1289.1 228.3C1294.9 232.2 1301.0 236.3 1306.6 240.6M639.9 505.6C647.2 506.7 654.2 504.6 661.0 502.4M688.3 577.4C695.4 576.1 700.5 569.8 707.6 568.5M561.7 304.2C559.4 310.9 557.1 317.7 556.2 324.8M1154.5 545.3C1156.1 538.5 1158.7 531.8 1161.0 525.2M868.4 145.8C862.2 150.4 854.9 150.2 847.7 150.1M1156.9 714.1C1156.9 721.2 1160.2 727.9 1160.3 734.9M1227.1 785.7C1224.4 779.2 1219.7 773.7 1215.4 768.2M747.3 578.9C751.7 573.5 754.0 566.5 758.3 561.0M588.9 584.3C583.9 578.8 581.7 572.0 581.5 564.7M560.1 283.0C567.0 283.4 573.6 286.5 580.5 287.4M1060.5 414.1C1062.4 420.8 1065.9 427.0 1068.9 433.2M560.1 353.7C567.1 354.8 573.9 352.0 580.8 351.9M1467.1 553.1C1470.5 559.9 1479.6 559.7 1483.5 565.8M704.8 589.2C708.3 595.0 711.3 601.4 715.0 607.2M525.9 402.0C522.1 396.3 518.2 390.3 511.9 386.9M1162.7 696.8C1155.5 694.9 1149.5 700.6 1142.6 700.4M1350.5 545.7C1352.4 552.2 1353.0 559.2 1354.0 565.8M1161.0 525.2C1167.7 523.5 1174.6 523.6 1181.4 524.0M561.7 304.2C557.5 298.9 553.2 293.5 548.7 288.5M1297.5 190.8C1302.8 186.5 1307.7 181.3 1314.8 180.0M1350.5 545.7C1343.5 546.7 1339.0 552.9 1332.5 555.0M950.5 741.3C952.3 734.7 956.2 729.0 960.1 723.5M635.8 657.9C635.6 664.6 636.1 671.5 635.0 678.2M1424.7 780.9C1431.2 778.6 1438.4 781.2 1444.8 778.8M1344.4 644.6C1337.7 643.9 1331.6 640.1 1325.1 638.6M1304.7 778.4C1311.3 781.6 1318.2 780.6 1324.8 778.4M1360.6 795.8C1354.7 800.1 1347.7 799.8 1341.0 800.0M1275.0 732.8C1276.0 739.4 1273.7 746.1 1273.7 752.7M1387.1 772.8C1380.4 774.5 1374.3 769.6 1367.7 770.7M1098.6 500.4C1097.6 493.4 1101.4 487.6 1104.1 481.8M1310.8 342.5C1316.9 340.6 1323.3 339.0 1329.3 336.9M1199.5 690.2C1204.9 694.2 1211.1 696.5 1217.8 696.4M687.5 652.4C689.6 658.9 697.2 661.1 699.8 667.2M1244.0 526.1C1238.5 522.2 1231.1 524.4 1225.5 521.0M1310.8 649.4C1310.4 643.1 1310.5 636.6 1308.7 630.4M1065.5 558.1C1060.6 563.0 1053.2 561.7 1047.7 565.1M1209.9 340.4C1203.6 341.4 1197.8 344.5 1191.8 346.4M1427.9 815.6C1424.8 809.6 1419.5 805.8 1413.6 803.1M1036.4 394.5C1041.3 398.5 1046.2 402.7 1049.1 408.5M1196.6 797.6C1202.9 797.0 1209.4 795.9 1215.4 798.6M1259.1 598.0C1253.1 596.1 1249.4 590.3 1243.8 587.7M1308.7 630.4C1313.0 635.3 1319.8 635.6 1325.1 638.6M1176.0 337.8C1180.6 341.7 1186.4 344.0 1191.8 346.4M1298.3 722.4C1296.9 728.2 1299.3 734.6 1296.5 740.3M1310.8 649.4C1316.9 647.7 1319.2 640.6 1325.1 638.6M659.6 512.5C654.2 515.3 648.4 517.2 642.2 516.5M1167.7 447.5C1168.9 441.6 1174.3 437.5 1175.4 431.5M630.0 315.2C624.2 317.6 618.1 316.8 612.3 315.4M427.3 319.5C421.9 322.4 420.4 329.3 415.4 332.6M850.9 740.6C853.7 735.4 858.8 731.7 861.8 726.7M1169.9 786.4C1175.8 785.8 1180.4 780.8 1186.6 780.9M1323.0 749.2C1328.6 747.1 1334.9 749.7 1340.5 747.4M1369.1 506.3C1364.3 503.0 1361.0 497.7 1355.8 494.8M431.1 336.5C436.9 336.0 442.4 333.5 448.3 333.0M1290.4 400.8C1292.5 406.5 1298.7 409.2 1301.3 414.5M417.0 244.3C417.8 250.3 422.8 254.5 424.4 260.1M1412.0 781.2C1406.2 781.7 1400.2 782.3 1395.0 785.4M668.9 583.9C674.0 580.8 676.7 575.2 680.6 571.0M620.9 636.7C624.6 641.9 621.8 648.3 623.7 653.8M1143.9 508.7C1142.5 514.3 1141.0 520.0 1140.7 525.7M580.5 287.4C583.5 282.1 589.7 280.5 594.1 276.9M869.5 224.2C867.5 229.8 861.9 232.9 859.1 237.9M648.5 454.9C651.6 460.3 649.5 466.3 649.9 471.9M604.0 634.2C609.5 635.5 615.5 634.9 620.9 636.7M1159.0 516.6C1153.7 514.7 1148.1 512.9 1143.9 508.7M747.6 599.5C743.9 603.8 739.3 607.3 735.7 611.6M1186.6 780.9C1192.1 778.3 1197.9 781.1 1203.5 780.2M1247.7 136.2C1251.5 140.4 1256.2 143.9 1260.2 147.7M1413.6 828.0C1416.4 822.6 1414.3 816.6 1415.2 811.1M580.8 351.9C579.0 346.4 573.6 343.1 571.1 338.1M1215.4 768.2C1211.1 771.8 1208.7 777.5 1203.5 780.2M1330.1 622.6C1327.5 627.6 1326.7 633.3 1325.1 638.6M1213.3 820.4C1218.0 823.4 1221.5 828.3 1227.1 830.0M1454.9 826.9C1460.9 828.0 1465.2 822.1 1471.1 822.5M1181.8 599.9C1180.9 594.3 1182.5 588.8 1183.9 583.5M1171.7 819.4C1166.9 822.1 1161.7 824.0 1156.4 825.2M1148.4 273.1C1144.5 269.1 1139.4 266.9 1134.3 264.8M1143.9 508.7C1145.6 513.8 1149.4 518.3 1149.9 523.9M1200.9 701.8C1198.2 707.0 1200.1 712.7 1199.5 718.1M726.0 562.9C723.6 568.0 722.7 573.4 723.4 579.0M1183.0 424.1C1185.4 419.3 1187.6 414.2 1190.2 409.6M1244.6 560.8C1247.9 556.6 1248.1 550.6 1251.7 546.5M1278.2 633.4C1275.2 628.4 1270.2 626.1 1265.0 624.4M1209.6 669.0C1215.0 668.9 1219.7 664.9 1225.2 665.7M602.7 599.9C606.5 596.2 610.2 592.3 614.0 588.7M675.5 495.8C671.4 499.4 665.4 499.4 661.0 502.4M1314.8 406.2C1310.4 409.2 1305.9 412.0 1301.3 414.5M1199.5 718.1C1197.5 722.9 1196.8 728.4 1194.5 733.1M590.8 261.5C593.5 266.2 594.8 271.4 594.1 276.9M1018.3 399.9C1015.8 405.1 1020.2 410.5 1018.1 415.6M1304.7 778.4C1300.5 775.4 1297.2 770.9 1292.2 768.9M616.0 368.7C612.1 365.2 608.1 361.7 602.7 360.8M590.8 261.5C585.8 259.1 582.9 254.7 580.8 249.8M1348.1 773.8C1345.5 769.3 1347.3 763.5 1344.2 759.1M868.9 212.2C864.4 214.5 858.7 213.8 854.4 216.8M781.8 594.2C778.7 598.8 773.9 600.7 768.9 602.1M954.2 717.7C949.0 717.4 944.7 714.3 940.2 712.0M1058.9 525.3C1058.5 520.2 1062.1 515.5 1060.8 510.3M1433.4 572.0C1428.8 574.5 1427.6 580.3 1423.4 583.1M968.8 181.4C970.8 186.5 968.4 191.5 968.0 196.4M1093.8 548.4C1089.1 546.4 1086.3 541.8 1082.2 539.0M784.7 662.0C779.7 660.1 774.7 660.9 769.8 662.2M585.2 386.8C581.9 383.1 580.7 377.7 576.4 374.7M571.7 387.3C569.1 391.9 569.8 397.1 569.6 402.0M920.1 230.1C924.9 228.9 929.3 226.5 933.8 224.6M1343.4 657.9C1346.8 653.9 1352.5 654.1 1356.6 651.3M1129.6 722.0C1132.3 726.2 1134.9 730.5 1136.2 735.3M1156.4 825.2C1154.2 820.9 1150.9 817.1 1149.2 812.5M1378.6 421.6C1377.7 426.3 1379.3 431.5 1377.0 436.0M1266.0 775.2C1269.7 772.0 1275.1 771.5 1278.7 768.2M592.1 604.8C595.9 601.4 597.9 596.9 598.7 592.0M1207.5 450.0C1202.7 452.1 1201.9 457.8 1198.1 460.7M1066.6 482.4C1061.9 480.6 1057.0 482.0 1052.4 482.0M1147.9 460.6C1147.0 455.8 1150.6 451.3 1149.5 446.5M1058.3 354.6C1061.5 350.8 1065.9 348.8 1070.3 347.1M515.0 364.0C510.7 361.7 509.0 356.7 505.5 353.7M1387.1 772.8C1389.9 776.9 1395.0 777.9 1399.0 780.2M1153.2 580.8C1149.1 582.9 1144.6 584.6 1140.5 586.6M776.2 606.7C776.6 601.9 781.0 598.8 781.8 594.2M1358.7 694.6C1357.8 690.2 1357.4 685.5 1356.6 681.1M1199.5 602.2C1201.5 606.3 1204.1 610.2 1208.0 612.8M1332.2 568.5C1332.5 564.1 1330.8 559.4 1332.5 555.0M1278.7 768.2C1283.3 766.4 1287.7 770.2 1292.2 768.9M1209.9 488.0C1214.3 489.3 1217.8 492.3 1221.3 495.2M1244.0 526.1C1245.8 521.9 1248.8 518.4 1252.2 515.5M1188.1 721.3C1191.6 724.5 1193.5 728.6 1194.5 733.1M1098.6 500.4C1096.1 496.6 1093.8 492.7 1093.4 488.0M1343.4 657.9C1342.1 653.4 1342.5 648.9 1344.4 644.6M1158.5 669.4C1154.0 669.1 1149.6 669.7 1145.2 670.5M1096.2 298.9C1098.4 302.7 1100.9 306.5 1103.9 309.7M695.6 679.7C696.3 675.4 697.3 671.0 699.8 667.2M1412.0 781.2C1407.7 780.8 1403.2 782.1 1399.0 780.2M1015.3 463.0C1019.6 461.5 1022.1 457.7 1025.0 454.5M622.3 452.8C624.2 456.7 628.1 459.3 629.6 463.4M693.2 594.5C689.9 597.6 688.2 601.6 687.0 605.8M635.8 657.9C632.2 655.4 627.7 655.3 623.7 653.8M859.1 237.9C858.4 242.2 859.1 246.5 860.2 250.6M693.2 594.5C696.7 592.1 701.0 591.1 704.8 589.2M560.1 283.0C556.9 286.0 552.7 287.1 548.7 288.5M1413.6 803.1C1409.5 804.3 1405.3 804.8 1401.1 805.2M1187.1 805.2C1184.6 808.6 1181.9 811.9 1180.5 815.9M1207.5 450.0C1203.6 448.5 1199.7 446.8 1196.1 444.7M795.0 570.5C790.9 570.5 786.7 571.6 782.6 572.1M1389.2 801.4C1393.2 802.4 1397.1 804.1 1401.1 805.2M550.8 371.2C552.0 367.1 549.2 362.9 550.3 358.7M1140.5 499.6C1141.5 495.2 1138.9 491.4 1138.1 487.4M1355.8 767.5C1359.5 769.4 1364.2 768.2 1367.7 770.7M1465.2 324.3C1468.9 322.2 1470.7 318.1 1473.4 315.2M1456.5 782.6C1453.1 780.0 1448.6 780.3 1444.8 778.8M1340.5 747.4C1341.3 751.3 1344.4 754.7 1344.2 759.1M1187.1 737.8C1183.1 735.9 1178.9 738.7 1174.9 737.4M955.8 164.9C952.6 167.3 948.0 167.4 945.2 170.6M1165.6 309.5C1162.1 307.1 1161.7 302.5 1159.3 299.4M1199.5 718.1C1195.4 717.7 1192.2 721.4 1188.1 721.3M977.5 679.3C975.1 682.8 977.0 687.2 975.7 691.0M1226.8 255.2C1228.3 258.9 1227.8 263.0 1228.1 266.9M1357.9 820.1C1359.3 816.2 1362.1 813.4 1365.4 811.1M799.3 633.0C796.7 636.0 796.5 640.1 795.6 643.7M1275.0 732.8C1271.2 733.2 1267.6 731.5 1263.9 731.0M747.3 578.9C750.6 580.8 754.6 581.0 757.9 582.7M655.2 664.6C651.4 663.6 649.7 659.3 646.0 658.2M571.7 387.3C568.9 389.8 566.7 392.9 564.5 395.8M659.9 622.2C657.9 619.1 655.7 616.0 653.0 613.5M560.1 353.7C556.3 354.4 553.6 357.3 550.3 358.7M782.0 582.7C781.2 579.2 781.3 575.5 782.6 572.1M362.4 336.1C363.8 339.3 366.7 341.7 367.7 345.1M1343.4 143.0C1346.9 143.6 1350.3 142.2 1353.7 141.5M560.1 353.7C558.4 350.7 558.7 346.8 556.4 344.0M1144.4 761.5C1147.0 763.8 1149.7 766.2 1151.3 769.3M659.6 512.5C660.4 509.2 659.7 505.6 661.0 502.4M637.7 536.7C635.8 539.6 632.4 540.8 630.2 543.4M1348.1 773.8C1351.7 773.0 1353.9 770.4 1355.8 767.5M535.2 370.0C533.2 367.3 533.1 364.0 532.1 361.0M1171.7 819.4C1174.5 817.9 1177.5 816.8 1180.5 815.9M1168.8 730.3C1171.5 732.0 1173.7 734.3 1174.9 737.4M1135.7 791.7C1137.5 789.0 1136.3 785.7 1137.5 783.0M1116.1 283.0C1113.2 281.5 1110.2 281.9 1107.3 282.5M1187.1 737.8C1189.3 735.8 1192.7 735.6 1194.5 733.1M1316.6 713.4C1317.9 715.9 1320.4 717.9 1321.4 720.6M699.8 667.2C697.3 668.6 694.1 668.1 691.6 669.7M616.2 389.6C614.1 391.7 610.9 391.9 608.7 393.7M582.3 394.5C583.2 391.9 583.2 389.0 585.2 386.8M1165.6 309.5C1168.5 308.9 1170.1 306.4 1172.4 304.9M1413.6 803.1C1414.3 805.7 1414.4 808.5 1415.2 811.1M1195.6 403.7C1194.5 406.3 1191.5 407.2 1190.2 409.6M615.7 397.4C613.2 396.5 611.2 394.7 608.7 393.7M1032.4 456.5C1030.0 455.7 1027.6 454.7 1025.0 454.5M571.1 338.1C570.0 340.4 568.0 342.2 566.9 344.4M1307.3 670.8C1307.3 670.2 1307.5 669.6 1307.3 669.0"/>
<path stroke="#e7d2f3" stroke-width="1.4" d="M1468.4 224.2C1463.3 195.5 1446.7 172.2 1427.9 151.1M540.7 145.3C518.5 136.1 496.3 145.9 474.5 147.7M1467.1 553.1C1460.0 532.0 1471.5 512.4 1474.0 492.4M1440.1 329.1C1448.5 311.2 1454.7 291.9 1459.4 272.7M1414.6 309.0C1423.9 290.2 1440.2 279.2 1459.4 272.7M1425.2 236.5C1407.3 236.0 1391.0 244.5 1374.4 249.3M546.3 526.1C559.7 537.2 565.8 555.7 581.5 564.7M1422.8 264.2C1409.5 275.3 1390.8 278.7 1378.1 290.9M1422.8 264.2C1406.1 261.7 1392.0 248.8 1374.4 249.3M1274.0 381.0C1290.0 374.4 1307.0 372.8 1324.0 375.9M1427.9 413.3C1411.0 412.5 1393.9 413.1 1378.6 421.6M1427.9 413.3C1428.7 396.0 1438.4 382.2 1448.3 369.1M1232.9 298.5C1232.5 314.3 1236.4 330.7 1231.8 346.4M541.5 218.7C543.9 201.7 554.7 189.3 566.4 178.1M994.5 165.8C1004.1 154.0 1008.3 139.5 1011.7 125.1M1183.9 583.5C1196.4 592.3 1211.9 591.9 1226.0 595.0M1274.0 381.0C1273.5 366.4 1267.9 352.6 1264.7 338.7M1237.9 234.3C1229.2 223.3 1220.3 211.9 1209.9 202.5M586.8 233.8C574.8 242.2 560.1 241.9 546.6 244.7M1016.8 737.8C1028.7 744.7 1038.5 755.2 1050.7 761.9M1018.1 289.2C1030.9 294.1 1043.4 300.3 1055.2 307.2M510.8 512.7C522.2 505.5 533.6 497.4 546.3 492.4M1308.7 298.5C1322.2 298.8 1335.6 303.5 1349.2 303.3M395.0 247.5C397.6 260.8 405.1 272.8 409.1 285.6M1417.0 440.1C1404.2 435.4 1390.5 434.8 1377.0 436.0M566.4 486.8C574.3 498.5 587.3 503.7 599.0 509.9M1419.4 205.2C1415.5 192.7 1412.3 179.6 1412.2 166.3M1124.6 319.5C1131.7 308.2 1126.1 293.5 1133.2 282.2M1468.7 454.9C1468.1 467.6 1472.2 480.0 1474.0 492.4M1289.1 228.3C1276.2 228.3 1263.4 226.4 1252.5 218.7M409.1 285.6C399.9 293.9 391.9 304.1 381.5 311.2M648.5 454.9C654.7 444.1 656.4 430.8 664.6 421.0M1089.6 235.2C1091.8 248.2 1101.0 257.6 1108.8 267.3M1297.5 450.4C1309.3 455.2 1322.8 449.7 1334.4 455.7M1322.4 173.4C1324.9 160.3 1337.0 153.3 1343.4 143.0M1170.7 248.4C1175.3 259.6 1175.5 272.5 1180.9 283.5M1314.8 406.2C1326.6 409.6 1339.0 409.1 1351.1 407.5M511.3 330.0C505.6 318.3 511.5 305.9 510.0 294.0M649.9 345.1C642.3 335.9 636.9 324.8 630.0 315.2M1052.8 135.7C1042.0 141.0 1031.2 147.0 1024.2 157.3M446.4 787.1C444.4 774.8 433.8 766.8 429.2 755.9M966.2 245.6C975.8 252.4 984.9 260.9 996.9 263.7M1125.9 398.3C1123.0 387.1 1122.1 374.9 1115.6 364.9M1322.4 173.4C1320.3 161.3 1311.0 153.1 1304.7 143.4M390.8 319.1C387.3 331.3 375.5 336.7 367.7 345.1M1074.8 636.8C1071.8 624.4 1062.3 617.0 1053.0 609.7M748.9 630.8C760.2 633.3 770.5 639.0 780.5 644.6M1165.9 395.7C1158.4 405.3 1156.7 416.9 1155.9 428.5M945.2 170.6C936.3 178.8 922.5 174.9 913.2 182.4M1030.8 336.9C1038.4 328.4 1049.9 324.3 1057.5 315.8M1037.4 430.3C1028.0 437.5 1016.8 440.3 1005.1 440.1M574.9 508.3C564.8 513.2 554.0 517.4 546.3 526.1M1178.1 564.3C1183.8 554.2 1181.4 542.1 1184.5 531.4M1165.9 395.7C1168.9 406.7 1175.0 416.2 1183.0 424.1M609.6 465.4C609.4 477.1 615.1 486.7 621.8 495.6M1489.9 261.9C1479.2 263.7 1470.3 271.5 1459.4 272.7M863.6 467.0C865.0 456.5 862.5 445.7 862.4 435.2M1002.8 485.6C992.3 483.8 983.9 475.2 973.0 474.5M1349.2 303.3C1359.0 299.9 1367.2 291.8 1378.1 290.9M920.1 571.2C919.0 560.0 923.4 550.2 930.1 541.5M1010.4 784.3C1016.7 792.8 1026.6 797.8 1033.4 805.6M362.4 336.1C365.3 325.2 377.8 321.4 381.5 311.2M462.3 232.4C452.8 226.8 446.0 218.6 442.7 208.0M684.0 630.8C684.1 620.0 678.1 610.9 673.9 601.5M1378.6 421.6C1371.7 412.6 1360.0 412.4 1351.1 407.5M623.6 603.7C634.9 602.3 643.7 608.9 653.0 613.5M1165.9 395.7C1176.8 394.2 1186.1 399.9 1195.6 403.7M1308.7 630.4C1298.4 629.1 1288.6 636.0 1278.2 633.4M494.9 785.0C496.9 774.1 491.7 764.7 486.9 755.5M965.2 488.9C966.8 498.9 974.7 507.1 975.1 517.5M1259.1 598.0C1261.2 588.1 1268.4 579.8 1270.0 569.7M681.7 694.2C677.2 703.2 677.4 714.4 670.5 722.4M1123.2 421.2C1128.1 411.7 1135.9 405.0 1145.8 401.1M1094.4 404.1C1088.0 396.1 1083.6 386.8 1082.0 376.6M1176.0 337.8C1168.5 329.9 1168.1 319.2 1165.6 309.5M659.9 622.2C652.3 629.7 641.7 631.0 632.1 633.8M1034.2 486.4C1025.0 481.1 1021.7 470.6 1015.3 463.0M959.8 344.8C952.7 337.0 941.6 336.3 933.3 331.0M580.5 684.0C590.1 686.1 600.7 685.7 609.6 691.0M596.1 750.2C604.8 745.1 615.4 744.9 624.4 741.0M1002.7 473.9C992.8 471.8 982.7 471.6 973.0 474.5M1209.9 488.0C1202.9 480.3 1201.7 469.8 1198.1 460.7M974.4 325.2C984.8 324.9 993.1 318.4 1002.1 314.5M426.0 232.4C429.6 223.1 439.5 217.7 442.7 208.0M1307.3 670.8C1300.1 678.7 1300.6 689.4 1298.3 698.9M657.5 648.7C649.7 642.9 640.7 638.4 632.1 633.8M622.6 339.1C615.7 345.9 610.8 355.0 602.7 360.8M637.7 536.7C637.5 546.7 642.9 555.5 644.8 565.0M749.2 331.7C758.3 335.2 768.1 336.7 777.5 338.7M1059.1 784.7C1053.8 793.3 1042.3 795.0 1036.9 803.5M596.1 750.2C603.0 756.9 608.6 765.1 616.0 771.4M668.7 392.4C664.7 401.5 665.2 411.5 664.6 421.0M810.1 287.8C809.8 297.4 806.7 307.0 808.4 316.6M1182.0 472.7C1173.1 475.6 1163.5 477.3 1154.5 480.0M892.5 681.8C902.1 682.4 910.4 688.1 919.5 690.2M987.6 462.2C992.4 454.2 996.5 445.2 1005.1 440.1M813.8 522.6C809.2 531.6 797.9 532.9 791.9 540.2M939.9 255.6C948.7 252.8 956.8 247.2 966.2 245.6M1298.3 722.4C1301.0 731.7 1307.1 739.1 1313.4 746.0M1098.6 500.4C1103.3 509.0 1114.1 511.0 1119.5 518.8M1165.9 395.7C1166.1 386.0 1160.5 377.9 1157.3 369.3M1005.1 440.1C1010.3 432.5 1014.8 424.2 1018.1 415.6M1010.4 784.3C1019.3 789.0 1028.7 788.0 1037.9 785.7M899.1 305.5C892.3 298.5 883.5 295.1 874.0 294.2M1144.4 761.5C1145.4 751.7 1136.1 744.8 1136.2 735.3M1202.2 430.3C1197.1 422.2 1194.9 413.2 1195.6 403.7M505.5 353.7C513.8 348.6 523.2 348.2 532.5 349.3M660.8 448.0C660.2 438.8 665.3 430.2 664.6 421.0M1096.5 622.2C1106.1 623.5 1114.1 617.7 1122.7 615.0M907.9 436.4C908.6 427.4 913.0 418.9 914.0 410.0M684.0 630.8C693.3 630.5 702.4 628.7 710.0 623.0M1425.2 236.5C1431.2 229.9 1438.3 223.9 1443.2 216.4M1082.2 539.0C1074.4 534.6 1066.6 529.8 1058.9 525.3M1094.4 404.1C1093.9 413.4 1085.2 420.1 1085.1 429.5M1244.6 560.8C1253.7 561.7 1260.6 569.8 1270.0 569.7M1031.3 609.7C1034.5 618.1 1034.2 627.8 1039.8 635.3M1093.6 434.4C1100.9 429.3 1105.5 420.6 1114.0 416.9M920.1 571.2C928.9 573.8 937.0 578.0 943.1 585.0M1332.8 692.0C1327.0 698.8 1324.3 708.1 1316.6 713.4M1159.3 299.4C1168.1 296.4 1174.8 290.2 1180.9 283.5M379.7 292.3C376.2 284.1 374.0 275.0 367.2 268.7M733.3 344.3C734.7 335.1 742.3 328.8 745.2 320.4M1021.3 488.8C1021.7 479.7 1017.4 471.5 1015.3 463.0M1204.0 296.3C1195.4 293.8 1188.9 287.0 1180.9 283.5M905.2 369.1C911.2 362.7 916.0 355.0 922.6 349.2M1468.4 224.2C1460.2 221.3 1450.7 221.6 1443.2 216.4M939.4 184.2C930.8 182.8 922.0 180.8 913.2 182.4M1053.0 504.4C1046.0 499.3 1041.6 491.1 1034.2 486.4M830.6 303.3C822.9 307.0 814.3 309.9 808.4 316.6M833.9 476.4C829.3 468.9 822.6 463.1 815.7 457.9M550.8 371.2C559.7 369.2 567.8 374.8 576.4 374.7M655.2 664.6C664.5 666.3 672.5 662.5 680.1 657.9M755.6 508.3C762.8 513.4 766.7 521.5 772.1 528.1M1308.7 298.5C1301.0 302.9 1294.3 308.6 1290.7 316.9M654.6 528.9C663.1 527.9 672.0 528.4 680.1 525.1M1199.5 313.0C1194.1 319.8 1192.9 328.9 1188.3 336.1M1067.9 330.0C1059.9 333.1 1054.5 341.2 1045.6 342.9M810.1 287.8C818.9 290.3 825.5 296.0 830.6 303.3M586.8 233.8C592.3 241.1 602.8 240.5 608.8 247.0M843.8 452.8C847.9 444.8 855.9 440.7 862.4 435.2M659.9 622.2C668.9 622.1 675.8 628.7 684.0 630.8M554.5 721.0C552.4 729.3 555.1 738.0 554.0 746.3M1226.0 595.0C1218.7 599.4 1213.2 606.1 1208.0 612.8M1075.8 791.7C1084.7 789.1 1092.0 797.5 1100.7 795.8M1159.0 516.6C1155.5 508.7 1159.3 499.7 1156.4 491.6M1038.7 423.2C1045.0 428.8 1051.0 434.8 1055.7 441.8M664.2 559.3C664.1 567.7 668.4 575.6 668.9 583.9M1011.4 365.3C1018.8 370.3 1021.4 378.9 1025.5 386.0M588.9 306.4C596.6 309.3 604.5 312.5 612.3 315.4M1032.1 251.5C1036.1 258.9 1035.4 268.0 1039.5 275.4M1098.6 358.0C1095.9 366.6 1087.3 370.3 1082.0 376.6M1424.7 780.9C1422.7 789.0 1417.9 796.1 1413.6 803.1M693.6 478.1C690.7 470.5 690.1 461.8 685.6 454.7M912.9 454.5C906.0 450.0 898.3 446.4 890.2 444.6M780.7 325.6C786.3 332.1 795.5 333.1 801.9 338.2M958.8 300.0C950.6 303.6 946.6 311.2 942.5 318.4M1330.7 245.6C1322.6 244.6 1314.6 241.8 1306.6 240.6M824.7 490.0C816.7 491.3 808.0 489.6 800.3 493.5M1005.1 440.1C1009.8 447.5 1019.9 447.8 1025.0 454.5M862.3 526.1C858.6 517.9 851.2 513.7 843.5 510.3M1087.2 463.4C1095.7 462.9 1102.7 457.8 1110.2 454.8M509.7 416.6C501.3 415.4 493.2 417.6 485.6 421.2M831.8 395.7C837.2 389.1 847.0 388.9 852.4 382.3M1175.4 431.5C1180.5 438.6 1189.5 440.0 1196.1 444.7M819.4 650.9C811.3 651.7 804.2 657.5 795.7 656.8M1196.1 444.7C1191.9 437.8 1189.1 429.7 1183.0 424.1M1308.7 298.5C1313.4 291.5 1319.8 286.3 1327.5 283.0M1125.6 545.8C1134.0 543.9 1140.9 539.3 1146.0 532.4M657.5 648.7C664.3 653.5 672.7 654.8 680.1 657.9M1055.2 816.6C1049.0 811.1 1039.8 810.9 1033.4 805.6M922.2 482.0C913.9 480.8 905.7 481.8 898.0 485.1M1050.7 761.9C1053.5 769.4 1056.9 777.0 1059.1 784.7M1086.4 525.3C1085.6 534.0 1091.7 540.7 1093.8 548.4M682.4 389.0C685.9 396.2 691.5 402.6 694.0 410.3M912.4 543.9C909.1 551.7 909.3 560.0 910.8 568.1M724.0 413.3C719.5 406.3 712.0 402.4 705.8 397.4M1033.4 504.8C1026.5 508.8 1019.0 512.5 1014.3 519.5M681.7 478.4C678.5 471.0 678.1 462.5 674.5 455.3M1136.2 735.3C1144.2 734.3 1152.4 734.6 1160.3 734.9M768.9 602.1C764.8 609.1 758.4 614.3 753.1 620.2M1113.4 243.8C1114.3 252.0 1110.2 259.5 1108.8 267.3M1141.0 555.8C1144.4 548.4 1144.0 540.0 1146.0 532.4M1074.8 636.8C1082.5 640.0 1090.6 640.5 1098.6 638.3M1200.1 549.6C1197.5 541.4 1189.6 537.4 1184.5 531.4M1147.6 429.4C1142.5 435.6 1140.0 443.5 1136.3 450.5M727.2 500.8C724.5 508.4 716.9 513.1 714.0 520.6M1098.6 500.4C1101.7 493.0 1106.1 486.2 1112.1 480.8M1228.1 266.9C1235.2 270.3 1243.9 269.5 1250.7 274.0M682.4 389.0C689.7 386.4 698.0 385.8 704.7 381.4M939.9 255.6C941.6 263.1 940.9 271.4 944.6 278.5M872.7 638.6C878.6 643.9 887.6 643.8 893.3 649.5M589.5 320.4C596.4 316.2 604.4 315.4 612.3 315.4M1001.9 615.8C996.4 621.2 993.2 628.9 986.3 633.0M960.3 422.4C966.7 418.1 973.0 413.1 980.7 411.2M983.4 388.2C980.7 395.6 980.2 403.4 980.7 411.2M1011.7 125.1C1003.9 123.8 996.4 128.0 988.7 127.5M574.9 508.3C575.5 499.9 567.8 494.4 566.4 486.8M1059.4 464.6C1060.5 456.7 1057.1 449.3 1055.7 441.8M811.7 676.3C816.0 670.0 822.0 664.6 825.2 657.6M1038.7 423.2C1038.4 415.4 1035.7 408.0 1032.5 401.0M1298.3 722.4C1305.9 721.7 1313.6 718.9 1321.4 720.6M831.8 395.7C823.8 395.5 817.2 390.8 810.0 388.1M693.0 419.9C699.8 423.8 707.4 425.8 715.0 427.0M795.3 442.2C792.8 434.7 791.7 426.9 793.9 419.2M1202.2 430.3C1207.7 436.1 1215.3 438.4 1222.6 441.0M1011.2 776.3C1018.2 772.0 1026.3 772.9 1034.0 773.1M795.3 442.2C802.3 437.8 802.4 428.4 808.4 423.3M602.7 360.8C610.0 358.9 618.3 360.8 625.2 356.6M1124.6 319.5C1118.5 314.8 1110.7 312.9 1103.9 309.7M742.5 566.3C734.4 567.7 730.3 575.7 723.4 579.0M1093.8 548.4C1098.3 542.3 1103.5 536.5 1106.8 529.6M1209.9 340.4C1216.4 345.1 1224.6 344.5 1231.8 346.4M849.3 427.4C854.6 421.9 859.4 415.7 861.5 408.2M1275.0 732.8C1281.4 737.4 1289.0 738.8 1296.5 740.3M880.9 583.9C884.8 577.2 892.6 574.2 897.3 568.3M654.1 384.8C648.9 390.7 641.2 392.8 634.5 396.2M605.1 294.0C610.7 300.0 610.7 308.1 612.3 315.4M899.4 460.6C894.4 466.1 893.2 474.6 886.7 479.2M793.9 419.2C793.3 426.7 787.1 432.8 787.3 440.7M1061.8 272.7C1054.5 274.6 1046.5 272.1 1039.5 275.4M949.9 580.7C953.8 574.1 962.2 571.7 965.5 564.6M657.5 680.0C662.2 673.7 669.9 671.6 676.4 667.9M648.0 378.5C646.1 386.3 638.7 390.1 634.5 396.2M547.3 345.1C548.5 337.6 550.8 330.4 556.2 324.8M755.6 508.3C762.7 504.6 770.3 504.9 777.7 507.4M964.1 313.7C956.5 313.0 949.3 315.7 942.5 318.4M1489.6 810.4C1483.7 814.7 1478.1 819.9 1471.1 822.5M814.4 509.5C817.7 502.6 823.6 497.9 830.0 494.0M899.4 546.5C896.9 553.5 899.8 561.3 897.3 568.3M609.6 691.0C605.2 684.4 604.5 676.9 606.2 669.4M1112.1 303.8C1110.9 296.6 1110.8 289.1 1107.3 282.5M1179.7 373.4C1186.8 371.8 1194.2 372.9 1201.4 372.5M1069.5 573.2C1076.1 577.1 1083.5 577.6 1090.9 576.6M891.9 361.4C884.8 358.8 881.4 351.0 874.6 348.2M1031.3 609.7C1038.5 609.4 1045.9 611.5 1053.0 609.7M510.8 512.7C515.8 518.7 522.7 521.4 530.1 522.6M632.1 633.8C630.2 640.8 627.4 647.6 623.7 653.8M902.6 406.6C898.2 412.4 895.1 419.1 891.6 425.3M856.5 590.4C850.5 586.4 845.8 580.6 839.6 576.8M815.2 624.6C814.2 631.7 813.1 639.0 809.4 645.4M922.2 482.0C925.1 488.5 928.4 495.1 931.7 501.4M970.4 544.0C964.4 539.1 957.3 537.2 949.8 537.6M926.5 283.3C922.1 289.0 920.7 296.7 914.8 301.4M1005.1 440.1C997.7 440.8 990.8 438.4 984.0 436.1M714.0 520.6C721.0 522.1 727.5 525.6 733.8 528.9M970.7 279.4C974.0 273.1 979.5 268.0 982.8 261.7M1383.9 551.5C1390.7 553.4 1396.8 558.2 1404.3 558.1M749.2 331.7C756.0 334.6 759.3 342.0 765.3 345.8M981.0 359.8C984.1 353.5 988.0 347.2 989.7 340.2M1069.5 573.2C1070.5 580.5 1067.0 587.3 1065.5 594.2M706.6 438.1C699.9 442.1 697.8 449.4 694.4 455.7M727.2 500.8C720.1 501.0 713.5 504.8 706.3 504.8M1134.6 761.9C1138.6 768.4 1134.4 776.3 1137.5 783.0M882.4 367.8C880.2 361.2 875.0 355.5 874.6 348.2M959.8 344.8C959.5 352.0 963.2 358.6 964.4 365.5M1076.4 448.7C1080.5 443.0 1082.5 436.0 1085.1 429.5M1007.7 456.1C1000.2 455.0 993.8 458.5 987.6 462.2M712.4 546.9C714.8 553.9 723.2 556.2 726.0 562.9M581.5 564.7C585.9 559.3 589.4 552.7 596.1 549.6M943.1 585.0C935.8 586.0 930.1 590.5 924.6 594.8M1215.4 768.2C1220.3 762.4 1228.3 762.7 1234.2 759.1M566.4 486.8C558.9 485.5 552.5 489.0 546.3 492.4M616.0 771.4C622.7 767.9 626.3 761.7 628.7 754.8M914.8 301.4C913.5 308.9 905.7 312.1 903.1 318.6M659.6 512.5C652.3 512.4 646.0 509.1 639.9 505.6M580.5 287.4C580.8 294.7 584.6 300.8 588.9 306.4M637.7 536.7C637.5 529.7 642.5 523.5 642.2 516.5M621.8 495.6C627.5 499.4 633.4 503.3 639.9 505.6M710.5 490.1C704.1 487.4 700.1 480.8 693.6 478.1M836.9 298.0C841.2 292.6 844.5 286.4 846.7 279.8M1030.0 350.3C1025.2 345.2 1018.7 342.3 1012.6 339.2M893.0 635.7C886.5 637.9 879.3 637.0 872.7 638.6M1123.8 439.3C1118.1 443.3 1115.9 450.8 1110.2 454.8M546.6 316.9C542.8 322.5 538.5 328.1 535.1 333.9M905.2 622.2C898.5 623.5 891.6 623.8 884.8 623.3M793.4 294.5C786.7 294.3 779.9 297.2 773.0 295.4M713.6 532.2C720.8 534.2 727.5 532.0 733.8 528.9M1215.2 135.7C1211.1 130.4 1206.3 125.3 1201.4 120.7M588.9 306.4C593.1 300.8 599.4 297.7 605.1 294.0M1037.9 785.7C1038.3 792.7 1033.5 798.7 1033.4 805.6M744.4 441.4C739.3 436.6 731.6 436.9 725.9 433.1M735.7 611.6C729.8 615.3 725.6 620.8 722.2 626.7M892.8 391.1C891.6 384.3 896.5 377.9 894.7 371.0M913.4 532.8C910.2 526.9 908.6 520.2 905.1 514.4M852.5 300.7C856.9 305.9 860.4 311.8 861.8 318.6M1202.2 430.3C1196.7 425.7 1189.1 427.0 1183.0 424.1M1099.7 522.2C1105.8 518.8 1113.1 520.7 1119.5 518.8M1125.9 398.3C1132.4 399.5 1139.5 398.3 1145.8 401.1M680.3 436.0C676.3 441.8 677.7 449.3 674.5 455.3M1033.4 504.8C1028.5 500.2 1023.7 495.2 1021.3 488.8M999.0 358.0C994.0 353.1 990.5 347.3 989.7 340.2M831.8 395.7C838.7 394.6 845.4 395.5 851.7 398.3M947.1 375.9C949.6 369.8 952.3 363.6 955.3 357.7M939.9 255.6C946.4 254.4 953.4 256.6 959.8 253.8M949.9 580.7C952.6 587.0 949.1 594.2 952.3 600.5M733.8 528.9C739.7 525.8 746.9 525.9 752.9 523.0M998.2 414.1C1004.9 413.4 1011.6 414.3 1018.1 415.6M941.5 445.1C947.2 441.6 951.6 436.3 957.2 432.8M861.5 408.2C864.7 402.0 862.1 394.8 864.1 388.5M1096.2 298.9C1102.3 295.1 1101.5 286.5 1107.3 282.5M1175.4 431.5C1168.6 432.7 1162.6 427.4 1155.9 428.5M1180.2 714.1C1175.3 718.7 1171.5 724.2 1168.8 730.3M604.0 634.2C608.6 629.0 611.4 622.9 611.6 615.9M771.3 308.0C776.8 311.6 782.6 315.0 788.1 318.3M749.7 486.1C756.7 486.1 762.5 489.5 768.0 493.3M938.9 532.8C932.5 531.7 926.0 530.1 919.8 528.1M876.6 395.7C871.7 399.9 865.8 403.2 861.5 408.2M801.9 338.2C802.7 331.3 798.8 325.5 796.5 319.5M857.3 160.6C850.5 158.5 844.1 160.2 837.9 163.0M991.1 506.3C986.2 510.7 980.9 514.6 975.1 517.5M634.5 396.2C627.6 396.5 622.5 390.9 616.2 389.6M908.9 641.3C904.8 635.5 908.0 628.2 905.2 622.2M735.7 611.6C740.8 615.7 747.0 618.1 753.1 620.2M537.3 389.4C543.4 391.9 550.1 391.1 556.4 392.4M825.2 454.9C831.5 456.6 836.8 460.7 842.3 464.0M395.0 247.5C388.2 247.2 383.7 254.0 377.0 254.2M674.2 543.3C674.9 536.9 675.9 530.4 680.1 525.1M1226.0 595.0C1231.8 592.4 1238.2 590.8 1243.8 587.7M987.6 462.2C982.5 465.9 978.1 470.9 973.0 474.5M541.5 218.7C536.1 215.4 530.7 211.4 524.0 210.8M795.3 442.2C792.7 448.0 787.2 452.1 784.6 458.0M803.0 552.3C796.7 552.2 790.2 553.2 783.9 551.8M770.9 621.1C768.4 615.0 769.3 608.4 768.9 602.1M986.6 290.1C993.2 290.6 998.7 286.4 1004.8 285.2M585.2 386.8C591.4 385.2 597.0 382.0 601.6 377.5M831.1 578.1C832.4 584.3 834.1 590.5 833.5 596.9M943.6 354.6C947.5 348.9 953.6 346.7 959.8 344.8M621.8 495.6C624.9 501.0 630.3 505.0 632.7 511.0M615.7 397.4C622.0 398.8 628.4 398.8 634.5 396.2M1190.8 300.7C1184.8 302.4 1178.1 301.9 1172.4 304.9M969.6 535.5C970.3 529.2 972.6 523.2 975.1 517.5M578.3 543.3C583.2 548.2 589.5 549.7 596.1 549.6M926.5 283.3C932.6 282.3 938.3 278.7 944.6 278.5M764.3 371.7C770.8 370.5 776.7 374.1 782.8 374.6M775.3 417.3C781.7 415.4 787.8 417.8 793.9 419.2M613.0 323.0C617.4 317.7 624.1 317.0 630.0 315.2M871.8 557.7C869.8 563.6 867.0 569.3 864.5 574.9M694.0 498.1C688.1 495.8 681.6 496.9 675.5 495.8M1169.9 508.7C1164.8 513.0 1164.4 520.0 1161.0 525.2M1034.2 486.4C1040.1 484.5 1046.1 482.2 1052.4 482.0M997.9 300.4C994.0 305.9 987.4 307.2 981.9 309.9M608.8 247.0C602.6 245.9 596.4 248.0 590.3 248.4M1107.1 544.5C1113.2 544.3 1119.3 547.7 1125.6 545.8M950.5 741.3C954.7 745.9 958.7 750.8 961.1 756.6M947.6 697.9C943.0 693.8 939.7 688.1 934.1 685.1M898.8 497.0C900.8 502.7 901.0 509.4 905.1 514.4M997.9 300.4C1003.9 299.2 1010.2 298.1 1016.4 299.1M921.6 309.7C916.8 314.1 916.0 320.8 912.8 326.0M425.5 214.0C423.9 220.2 426.6 226.3 426.0 232.4M899.4 460.6C895.9 455.6 895.1 448.8 890.2 444.6M1141.0 555.8C1137.1 550.7 1129.8 550.5 1125.6 545.8M842.4 616.2C836.5 617.0 830.3 617.6 824.2 617.9M1098.6 358.0C1103.6 361.7 1110.7 360.8 1115.6 364.9M425.5 214.0C432.1 214.6 436.6 208.7 442.7 208.0M1107.1 670.5C1103.9 665.1 1097.4 662.9 1093.8 657.9M1126.7 483.2C1132.7 482.3 1138.7 481.1 1144.3 478.6M1297.5 603.7C1292.7 599.7 1285.7 600.3 1280.9 596.5M981.9 309.9C975.4 308.4 969.9 312.1 964.1 313.7M1247.2 343.4C1252.8 341.2 1258.9 340.1 1264.7 338.7M999.0 358.0C992.9 357.1 986.9 358.4 981.0 359.8M1007.7 753.4C1008.9 747.2 1015.7 744.1 1016.8 737.8M986.6 290.1C988.8 284.3 993.5 280.2 997.5 275.8M815.2 624.6C809.7 627.0 805.5 632.1 799.3 633.0M806.4 473.3C808.4 467.5 812.9 463.1 815.7 457.9M761.9 466.2C767.1 463.3 771.9 459.5 776.3 455.5M596.1 549.6C599.7 554.3 603.9 558.7 608.8 562.1M842.1 594.5C838.5 589.0 839.5 582.8 839.6 576.8M770.9 621.1C765.1 620.6 759.0 620.1 753.1 620.2M890.1 607.9C885.3 611.3 880.0 614.4 874.1 615.6M1156.4 491.6C1152.0 487.7 1149.4 481.9 1144.3 478.6M882.4 440.6C883.0 434.1 889.9 431.2 891.6 425.3M813.3 325.2C807.2 325.1 801.6 322.8 796.5 319.5M1148.4 273.1C1144.8 278.5 1137.1 277.4 1133.2 282.2M892.8 391.1C898.1 387.5 900.3 381.8 901.6 375.8M764.5 536.3C760.2 532.3 757.4 526.8 752.9 523.0M847.7 611.3C846.4 605.6 845.4 599.5 842.1 594.5M773.6 445.1C767.9 443.8 762.1 442.3 756.4 441.0M1059.7 542.9C1059.0 537.1 1060.1 531.1 1058.9 525.3M923.6 442.8C924.5 448.6 926.1 454.5 924.7 460.4M884.0 279.8C882.2 285.6 878.8 290.6 874.0 294.2M939.4 395.3C934.5 392.2 931.2 386.9 925.8 384.3M825.2 454.9C829.3 450.0 835.9 450.0 840.9 447.1M1140.5 499.6C1137.1 494.4 1129.8 494.5 1126.2 489.6M739.2 551.5C735.0 555.5 728.9 557.5 726.0 562.9M920.1 639.4C915.8 634.9 915.5 628.7 913.6 623.3M884.0 279.8C886.5 285.3 893.0 287.5 895.2 293.2M431.1 336.5C431.9 330.4 428.6 325.1 427.3 319.5M624.7 512.7C624.4 506.9 621.3 501.5 621.8 495.6M981.9 309.9C980.8 304.3 978.2 298.7 979.4 292.8M515.0 364.0C520.3 361.1 526.3 361.0 532.1 361.0M1204.0 296.3C1200.3 301.2 1200.1 307.2 1199.5 313.0M892.8 523.4C892.3 529.4 888.4 534.1 885.8 539.1M1076.4 448.7C1074.1 443.5 1069.6 439.2 1068.9 433.2M1067.9 330.0C1066.8 335.9 1067.8 341.7 1070.3 347.1M973.8 442.2C976.4 437.0 980.4 432.7 983.5 427.9M623.6 603.7C620.3 608.3 615.1 611.5 611.6 615.9M642.8 587.0C638.2 583.5 631.9 583.2 627.0 580.4M1047.5 381.4C1043.7 385.6 1040.0 390.2 1036.4 394.5M783.1 485.2C777.0 485.7 772.9 490.4 768.0 493.3M1116.1 283.0C1121.8 284.6 1127.5 281.2 1133.2 282.2M1087.2 463.4C1091.7 467.1 1094.4 472.3 1097.3 477.1M974.4 325.2C974.5 319.0 979.5 315.0 981.9 309.9M880.9 583.9C882.6 589.4 887.4 593.2 889.8 598.4M860.2 250.6C865.9 253.0 868.5 258.5 871.6 263.3M694.4 455.7C699.4 458.4 703.1 463.0 707.4 466.6M691.7 512.7C689.6 518.4 682.3 519.5 680.1 525.1M907.9 436.4C912.4 440.2 918.1 441.5 923.6 442.8M868.4 145.8C873.9 143.8 879.8 145.7 885.4 145.3M938.9 532.8C944.2 530.7 949.9 530.1 955.5 529.5M922.2 482.0C923.9 476.5 926.7 471.4 931.3 467.7M832.4 310.8C833.8 316.2 835.8 321.6 837.6 326.8M971.7 456.5C976.4 460.0 982.9 458.8 987.6 462.2M761.9 466.2C764.1 461.2 764.6 455.1 768.5 450.8M869.5 224.2C864.5 221.6 859.0 220.0 854.4 216.8M886.4 320.9C891.7 318.9 897.8 321.1 903.1 318.6M965.4 330.4C962.6 325.1 963.6 319.3 964.1 313.7M750.1 372.9C748.4 378.6 748.9 384.2 751.3 389.6M546.6 244.7C541.5 242.6 536.0 241.0 531.4 237.6M1290.7 316.9C1291.9 311.4 1288.2 305.8 1290.1 300.2M730.3 423.2C735.8 425.3 741.4 424.4 746.9 423.1M547.3 345.1C544.0 340.7 538.3 338.5 535.1 333.9M1194.8 514.3C1190.4 517.6 1184.9 519.6 1181.4 524.0M913.7 710.5C907.7 710.8 902.8 708.0 898.3 704.4M530.1 522.6C535.5 523.6 540.8 525.6 546.3 526.1M782.0 582.7C787.9 583.3 792.8 580.2 798.0 578.3M680.1 657.9C685.5 660.2 688.8 664.8 691.6 669.7M1025.5 386.0C1028.1 390.9 1030.0 396.1 1032.5 401.0M582.3 394.5C587.5 392.7 592.8 391.0 598.2 390.1M1141.3 372.9C1146.1 369.9 1152.0 370.3 1157.3 369.3M1031.1 756.9C1030.7 762.5 1033.9 767.6 1034.0 773.1M883.9 547.9C884.6 553.3 886.7 558.6 888.1 563.8M1130.7 469.5C1136.4 470.6 1140.9 473.9 1144.3 478.6M1054.9 683.3C1051.3 678.7 1044.9 678.6 1040.6 675.2M971.7 456.5C969.9 451.1 965.5 447.4 961.9 443.4M706.6 438.1C702.1 441.3 696.0 441.8 692.3 446.2M931.7 501.4C932.9 496.0 931.2 490.3 932.5 485.0M885.8 539.1C884.2 533.9 882.5 528.5 883.4 523.0M965.2 488.9C968.7 484.6 971.8 480.0 973.0 474.5M864.5 574.9C870.2 574.2 874.3 570.1 878.9 567.3M607.2 578.1C604.6 582.9 600.5 586.8 598.7 592.0M1096.5 622.2C1095.8 627.7 1096.4 633.2 1098.6 638.3M720.9 538.8C725.8 536.4 730.7 533.7 733.8 528.9M1196.1 444.7C1195.2 450.1 1196.2 455.6 1198.1 460.7M837.9 163.0C842.2 159.5 843.7 153.8 847.7 150.1M869.7 712.7C869.3 718.5 865.4 722.6 861.8 726.7M952.4 477.6C956.9 474.8 959.9 469.5 965.3 468.0M1165.9 395.7C1160.7 393.9 1155.9 391.4 1152.4 387.0M1016.5 383.9C1018.1 389.1 1017.6 394.7 1018.3 399.9M889.1 513.5C894.5 511.3 899.7 515.5 905.1 514.4M1456.5 782.6C1462.0 783.7 1467.2 781.7 1472.4 780.2M607.2 578.1C606.6 572.8 607.6 567.4 608.8 562.1M871.8 557.7C871.5 552.0 875.1 547.5 877.5 542.8M1360.6 795.8C1362.6 800.8 1364.4 805.9 1365.4 811.1M883.8 256.5C888.9 255.1 894.4 255.8 899.5 254.2M705.8 397.4C706.5 402.7 705.7 408.1 704.6 413.3M1102.3 587.7C1098.9 583.7 1095.7 579.2 1090.9 576.6M843.7 489.6C845.8 494.4 846.3 500.0 849.8 504.2M715.0 427.0C717.0 431.9 718.8 437.1 722.5 441.1M807.5 401.6C802.7 399.6 798.2 396.5 793.4 394.3M912.9 454.5C918.2 452.2 919.8 446.4 923.6 442.8M1055.7 441.8C1060.4 439.5 1065.1 436.9 1068.9 433.2M851.7 398.3C856.5 395.9 859.3 390.8 864.1 388.5M913.4 669.7C918.9 668.1 922.7 664.3 925.4 659.4M898.1 336.1C899.6 341.5 896.6 346.5 895.7 351.6M931.7 501.4C935.9 497.5 941.8 498.3 946.6 496.4M1247.2 343.4C1242.5 346.3 1237.0 346.0 1231.8 346.4M680.3 436.0C684.0 439.7 688.6 442.5 692.3 446.2M793.2 304.2C794.1 309.3 797.1 314.1 796.5 319.5M975.2 490.0C973.9 485.0 973.1 479.7 973.0 474.5M532.5 349.3C531.4 343.9 533.8 338.9 535.1 333.9M1069.5 573.2C1066.7 568.6 1068.2 562.7 1065.5 558.1M820.5 530.0C821.9 535.0 821.1 540.6 824.2 545.1M908.8 279.7C907.4 284.7 904.0 289.0 903.4 294.3M606.2 669.4C604.5 664.5 603.3 659.3 599.7 655.3M899.4 546.5C894.7 544.4 889.4 543.2 885.8 539.1M958.6 389.9C956.4 385.2 954.9 380.2 955.0 374.9M965.4 330.4C963.2 335.1 960.7 339.7 959.8 344.8M547.3 345.1C542.7 347.4 537.5 348.4 532.5 349.3M1125.9 398.3C1121.2 395.3 1115.5 398.4 1110.6 396.1M793.9 419.2C798.7 417.4 803.8 416.3 808.9 415.6M676.4 667.9C681.1 670.5 686.6 669.2 691.6 669.7M560.1 353.7C556.8 349.5 551.0 348.8 547.3 345.1M809.7 435.3C809.1 440.3 808.3 445.5 806.4 450.3M1147.9 460.6C1144.5 456.7 1141.4 452.4 1136.3 450.5M893.0 635.7C894.6 640.8 898.5 644.3 902.3 647.8M860.9 637.2C858.5 632.7 856.6 627.9 853.7 623.7M817.3 368.7C812.7 366.4 809.0 362.7 804.5 360.4M616.0 368.7C617.2 363.3 623.4 361.5 625.2 356.6M681.7 478.4C682.5 483.8 687.8 486.5 689.9 491.2M706.3 504.8C709.6 500.5 710.2 495.3 710.5 490.1M849.3 427.4C853.6 430.0 857.9 433.0 862.4 435.2M739.2 551.5C741.8 556.1 739.6 561.8 742.5 566.3M873.5 498.1C877.8 495.4 881.8 492.2 884.8 488.1M1190.8 300.7C1193.3 305.0 1196.8 308.8 1199.5 313.0M939.9 471.9C939.3 477.2 935.5 481.0 932.5 485.0M793.2 304.2C790.2 308.4 788.8 313.3 788.1 318.3M638.5 697.9C640.0 702.6 641.7 707.5 640.6 712.7M833.9 476.4C834.8 471.0 839.7 468.2 842.3 464.0M657.5 648.7C654.8 653.2 650.2 655.5 646.0 658.2M944.6 278.5C943.9 273.1 949.4 269.6 949.2 264.3M949.2 264.3C953.4 261.6 956.7 257.7 959.8 253.8M964.4 365.5C969.1 368.0 971.1 372.9 973.4 377.4M816.1 443.0C817.5 448.0 817.6 453.0 815.7 457.9M1126.7 483.2C1122.2 480.6 1116.7 483.0 1112.1 480.8M712.4 546.9C712.1 541.9 713.6 537.0 713.6 532.2M983.4 388.2C979.0 385.6 976.2 381.3 973.4 377.4M820.5 530.0C823.5 534.0 827.8 536.6 832.3 538.6M1091.2 689.5C1086.8 692.0 1085.1 697.1 1081.1 700.0M714.0 520.6C709.7 523.2 705.0 524.8 700.0 524.8M720.9 538.8C726.1 539.4 729.7 543.0 733.6 545.8M950.5 402.0C954.6 399.0 954.7 393.1 958.6 389.9M747.4 511.7C747.1 506.9 749.1 502.1 747.9 497.2M830.0 494.0C834.2 491.5 838.6 489.3 843.7 489.6M871.6 263.3C872.2 268.1 872.5 273.0 870.5 277.6M932.0 734.6C934.8 730.8 938.3 727.3 939.9 722.8M911.7 383.3C916.4 383.2 921.1 384.9 925.8 384.3M668.7 392.4C673.6 392.8 677.9 390.0 682.4 389.0M857.3 160.6C854.7 156.7 850.1 154.3 847.7 150.1M648.5 454.9C653.7 454.5 656.7 450.1 660.8 448.0M739.0 520.4C743.7 520.7 748.1 523.3 752.9 523.0M827.9 610.5C823.7 613.1 818.4 611.0 814.2 613.6M703.1 552.3C703.6 547.6 701.2 543.1 701.0 538.5M899.2 600.9C900.1 605.6 898.0 610.2 898.3 614.8M905.1 514.4C909.4 516.2 913.9 517.9 918.7 517.3M941.3 491.2C939.3 495.7 936.0 499.1 931.7 501.4M552.0 311.5C553.8 315.8 553.3 320.9 556.2 324.8M744.4 441.4C746.0 436.9 749.4 433.5 752.4 430.0M849.9 477.1C846.1 480.4 845.0 485.1 843.7 489.6M790.3 505.9C787.0 509.2 784.3 513.3 779.7 514.9M820.7 417.0C817.4 420.7 812.4 421.1 808.4 423.3M902.3 647.8C900.3 652.1 896.0 654.6 893.5 658.5M847.7 611.3C848.2 616.1 850.7 620.1 853.7 623.7M807.5 401.6C808.9 397.3 810.4 392.8 810.0 388.1M673.9 601.5C678.4 602.1 682.7 604.0 687.0 605.8M701.0 538.5C699.6 534.1 701.3 529.3 700.0 524.8M846.7 279.8C851.4 278.5 854.7 275.1 857.4 271.3M927.2 634.2C927.8 629.3 925.1 625.2 923.2 621.0M496.8 290.5C501.1 291.8 505.7 292.8 510.0 294.0M899.1 305.5C898.8 310.3 902.8 314.0 903.1 318.6M949.8 537.6C947.6 541.9 947.7 546.6 948.1 551.2M939.9 471.9C943.8 474.2 949.0 474.1 952.4 477.6M981.1 531.0C981.6 526.1 985.6 523.0 987.3 518.8M1187.1 737.8C1191.6 739.7 1194.3 743.5 1196.4 747.7M859.3 510.1C863.2 507.3 868.0 507.4 872.3 506.0M1123.8 532.4C1126.3 536.6 1125.2 541.4 1125.6 545.8M734.9 474.3C732.3 478.0 728.0 480.4 726.4 484.8M747.3 578.9C744.8 575.1 742.7 571.0 742.5 566.3M996.9 263.7C992.9 265.8 988.9 267.9 985.1 270.4M895.7 351.6C900.2 350.5 903.3 346.7 907.3 344.7M755.6 508.3C754.2 503.9 750.7 500.7 747.9 497.2M839.5 550.0C836.3 546.7 836.2 541.4 832.3 538.6M571.7 387.3C576.1 387.0 580.7 387.3 585.2 386.8M1147.9 460.6C1150.9 463.8 1153.2 467.9 1157.1 470.3M773.6 445.1C771.6 441.0 771.5 436.3 770.9 431.9M1157.1 470.3C1161.5 468.3 1163.8 464.2 1166.5 460.7M780.7 325.6C780.7 330.2 778.4 334.3 777.5 338.7M863.6 467.0C867.8 465.5 872.3 464.9 876.7 464.2M830.0 494.0C828.9 489.7 828.2 485.1 825.4 481.4M693.0 419.9C697.3 418.5 700.1 414.3 704.6 413.3M814.4 509.5C818.8 509.8 822.7 513.1 827.3 512.7M964.4 365.5C961.3 368.6 957.1 370.8 955.0 374.9M1125.6 545.8C1120.9 545.8 1117.5 549.5 1113.1 550.4M836.9 298.0C833.9 294.6 833.5 289.8 831.1 286.1M1167.7 447.5C1167.4 451.9 1166.5 456.3 1166.5 460.7M667.9 747.4C670.5 743.5 675.5 742.8 679.0 740.3M798.5 372.1C800.8 368.4 801.2 363.5 804.5 360.4M846.9 565.8C842.8 568.3 840.8 572.4 839.6 576.8M964.8 520.2C963.2 524.7 958.0 525.8 955.5 529.5M793.9 419.2C798.1 417.0 799.1 412.1 802.2 409.0M590.8 261.5C590.0 257.2 591.4 252.6 590.3 248.4M1044.6 478.4C1040.7 480.4 1038.4 484.7 1034.2 486.4M619.4 471.7C623.1 469.4 626.3 466.3 629.6 463.4M945.9 504.9C948.7 501.6 951.8 498.4 955.3 495.9M961.9 443.4C957.6 444.2 954.3 447.8 950.0 448.6M710.5 490.1C712.3 486.2 712.6 481.6 714.9 477.9M783.9 551.8C779.6 552.0 775.3 552.8 771.6 555.3M773.0 295.4C773.7 299.7 771.3 303.8 771.3 308.0M545.2 257.4C546.2 253.3 546.8 249.0 546.6 244.7M939.9 255.6C941.7 259.9 947.1 260.4 949.2 264.3M946.0 611.6C944.1 615.4 944.3 620.0 942.0 623.7M908.1 498.0C912.3 499.2 915.5 502.2 919.1 504.5M596.1 549.6C599.9 547.9 603.4 545.2 607.6 544.3M910.5 611.6C906.0 610.7 902.5 614.5 898.3 614.8M1060.5 414.1C1056.5 412.7 1052.8 410.4 1049.1 408.5M622.6 533.4C626.4 535.7 626.6 541.0 630.2 543.4M768.9 602.1C768.7 598.0 768.7 593.7 768.4 589.5M966.2 245.6C967.5 249.9 970.9 252.7 973.8 255.6M862.3 526.1C866.0 524.2 870.5 523.8 874.0 521.4M747.4 511.7C747.9 516.1 750.7 519.4 752.9 523.0M927.5 342.1C930.2 338.9 930.1 334.0 933.3 331.0M987.0 419.5C991.4 419.2 994.2 415.2 998.2 414.1M734.9 474.3C736.2 478.4 740.5 480.8 741.4 485.0M1125.9 398.3C1121.5 399.1 1119.3 403.5 1115.6 405.4M757.9 582.7C761.7 584.6 765.6 586.4 768.4 589.5M1001.4 428.2C1003.0 432.0 1003.8 436.2 1005.1 440.1M747.9 560.4C744.1 558.4 741.8 554.7 739.2 551.5M546.6 316.9C551.0 318.0 552.9 322.3 556.2 324.8M1176.0 337.8C1180.1 338.1 1184.1 335.8 1188.3 336.1M969.6 535.5C973.3 533.7 977.8 533.5 981.1 531.0M1133.3 252.4C1135.5 256.4 1135.1 260.6 1134.3 264.8M997.5 275.8C999.8 271.9 1005.3 272.5 1007.8 268.9M1093.4 488.0C1096.7 485.6 1100.2 483.2 1104.1 481.8M738.1 351.2C741.4 348.5 743.8 345.0 745.0 340.9M938.9 532.8C937.0 536.7 934.0 539.7 930.1 541.5M980.0 464.4C976.9 467.2 976.0 471.7 973.0 474.5M690.4 563.6C686.3 564.8 683.4 568.1 680.6 571.0M748.1 474.7C745.0 477.5 742.5 480.9 741.4 485.0M628.4 568.2C627.0 572.1 628.5 576.4 627.0 580.4M1196.6 797.6C1192.8 799.3 1191.1 803.8 1187.1 805.2M806.2 622.9C802.9 625.6 801.7 629.8 799.3 633.0M938.0 460.5C941.1 463.1 944.5 465.4 947.8 467.7M826.6 361.4C822.2 361.8 818.7 359.2 815.0 357.7M957.7 558.5C954.7 555.8 952.0 552.6 948.1 551.2M996.9 263.7C1001.0 264.4 1003.9 267.9 1007.8 268.9M941.0 411.2C944.8 412.4 949.0 413.0 952.4 415.4M820.7 417.0C821.1 421.0 820.2 425.1 820.5 429.1M901.5 387.8C902.6 383.9 900.4 379.7 901.6 375.8M910.5 611.6C911.7 615.4 912.0 619.6 913.6 623.3M975.2 490.0C977.5 493.5 982.2 494.0 984.7 497.2M752.9 539.4C756.5 537.4 761.0 538.5 764.5 536.3M887.7 245.2C884.7 248.3 886.0 253.1 883.8 256.5M964.4 365.5C960.4 364.1 958.4 360.2 955.3 357.7M782.0 356.7C786.0 357.2 790.0 357.2 793.9 358.0M991.1 404.5C993.6 407.5 996.4 410.5 998.2 414.1M674.2 543.3C674.2 547.4 670.8 550.7 671.3 554.9M1004.8 285.2C1001.7 282.7 999.5 279.2 997.5 275.8M938.9 532.8C942.8 533.7 945.7 537.2 949.8 537.6M902.6 406.6C906.4 407.4 910.0 409.7 914.0 410.0M871.8 557.7C874.9 560.3 877.8 563.2 878.9 567.3M902.6 265.5C902.0 261.7 901.6 257.7 899.5 254.2M724.0 413.3C724.6 417.5 727.4 420.4 730.3 423.2M1002.7 473.9C1004.0 477.8 1002.5 481.8 1002.8 485.6M532.5 349.3C531.5 353.1 531.1 357.1 532.1 361.0M1199.5 690.2C1199.5 694.1 1201.4 697.9 1200.9 701.8M609.6 465.4C612.3 468.3 616.0 470.0 619.4 471.7M1115.6 405.4C1113.4 408.9 1114.9 413.1 1114.0 416.9M939.9 471.9C938.1 468.3 938.5 464.3 938.0 460.5M560.1 353.7C563.1 351.2 565.8 348.4 566.9 344.4M913.4 532.8C915.0 536.5 919.2 538.0 921.1 541.4M816.8 553.8C818.5 550.4 822.5 548.6 824.2 545.1M1094.6 786.1C1096.4 789.4 1098.3 792.9 1100.7 795.8M866.6 588.1C868.5 591.8 866.6 595.8 867.6 599.6M571.1 338.1C574.8 336.3 578.7 337.0 582.5 337.8M781.8 594.2C782.6 590.4 780.8 586.5 782.0 582.7M1005.0 549.3C1002.4 552.2 999.3 554.4 995.6 555.6M843.8 452.8C842.3 456.4 842.4 460.3 842.3 464.0M815.2 624.6C817.7 621.7 821.9 620.9 824.2 617.9M749.7 486.1C747.7 489.6 749.8 493.8 747.9 497.2M973.4 377.4C972.3 381.1 968.7 383.3 967.3 386.8M892.8 391.1C891.8 395.1 893.2 398.7 894.7 402.2M770.1 396.6C767.0 398.7 763.4 400.0 759.8 401.0M859.3 510.1C856.7 507.4 853.3 505.6 849.8 504.2M963.8 186.1C966.3 189.0 965.5 193.5 968.0 196.4M642.2 516.5C642.2 512.7 639.5 509.4 639.9 505.6M425.5 214.0C421.7 213.7 418.3 216.1 414.6 216.4M899.4 460.6C903.0 461.1 906.5 463.1 910.3 462.5M1007.8 268.9C1010.7 271.4 1012.4 274.8 1013.6 278.3M598.2 390.1C601.6 391.4 605.5 391.8 608.7 393.7M926.2 434.0C929.0 436.4 933.3 436.4 935.9 439.2M1103.6 438.9C1100.8 436.4 1097.2 435.2 1093.6 434.4M694.0 410.3C697.1 412.8 701.5 411.0 704.6 413.3M669.7 516.6C666.4 515.3 662.9 513.9 659.6 512.5M862.3 526.1C864.6 528.9 866.4 532.2 867.9 535.5M919.8 528.1C917.8 524.7 919.0 520.8 918.7 517.3M814.2 613.6C817.5 615.1 820.5 617.5 824.2 617.9M883.0 341.3C880.2 343.5 878.0 346.7 874.6 348.2M790.2 489.7C793.9 490.0 797.3 491.3 800.3 493.5M700.0 524.8C697.1 522.3 693.4 521.7 689.8 521.2M692.3 446.2C691.3 450.0 687.3 451.5 685.6 454.7M773.6 445.1C775.8 448.2 775.0 452.2 776.3 455.5M941.3 491.2C938.6 488.9 935.8 486.4 932.5 485.0M676.4 667.9C679.0 665.1 679.4 661.4 680.1 657.9M905.2 369.1C901.9 370.3 898.3 371.3 894.7 371.0M884.0 496.8C880.3 495.5 877.0 498.1 873.5 498.1M1175.4 431.5C1177.3 428.4 1179.8 425.8 1183.0 424.1M911.6 391.1C908.4 389.5 904.8 389.0 901.5 387.8M856.0 366.0C859.5 366.5 863.0 367.4 866.2 368.8M877.7 532.4C879.6 535.6 883.5 536.4 885.8 539.1M755.0 343.8C758.3 345.3 762.0 344.9 765.3 345.8M803.8 392.8C800.3 392.8 797.0 394.9 793.4 394.3M757.1 478.0C760.7 478.3 764.0 477.1 767.2 475.5M856.5 590.4C859.7 589.2 863.5 589.9 866.6 588.1M877.7 532.4C877.1 535.8 878.6 539.4 877.5 542.8M1099.7 522.2C1101.1 525.6 1104.9 526.7 1106.8 529.6M1144.3 478.6C1147.7 478.8 1151.2 479.2 1154.5 480.0M701.0 598.8C703.6 596.1 702.4 591.9 704.8 589.2M973.4 377.4C969.9 377.3 966.4 376.7 963.4 374.8M782.0 356.7C779.1 359.1 779.9 363.3 777.7 366.1M712.6 417.0C714.3 420.1 714.1 423.8 715.0 427.0M993.8 433.1C990.7 434.6 987.1 434.7 984.0 436.1M1007.7 456.1C1010.0 458.6 1013.0 460.4 1015.3 463.0M1004.8 332.6C1007.2 335.0 1009.6 337.5 1012.6 339.2M756.3 456.1C753.1 455.0 749.5 456.4 746.2 455.1M919.8 647.2C923.1 646.7 926.7 646.6 929.7 644.7M905.2 622.2C904.0 618.8 900.8 617.0 898.3 614.8M1322.4 173.4C1320.8 176.6 1317.7 178.3 1314.8 180.0M726.2 462.2C722.9 461.3 719.6 460.6 716.4 459.4M832.6 335.6C834.3 332.8 835.3 329.4 837.6 326.8M749.2 331.7C746.4 334.1 746.6 338.0 745.0 340.9M783.1 485.2C785.9 483.3 789.5 482.9 792.3 481.0M975.2 490.0C971.9 489.3 968.6 488.1 965.2 488.9M1157.1 470.3C1156.6 473.6 1155.3 476.8 1154.5 480.0M1323.0 749.2C1319.4 749.4 1316.3 747.9 1313.4 746.0M1018.1 289.2C1017.0 292.4 1017.3 295.9 1016.4 299.1M733.8 528.9C734.7 525.5 738.1 523.7 739.0 520.4M957.7 558.5C960.0 560.9 962.3 563.4 965.5 564.6M688.3 577.4C685.8 575.2 682.7 573.6 680.6 571.0M923.2 621.0C919.7 620.4 916.6 621.8 913.6 623.3M700.5 405.8C703.0 403.5 704.0 400.2 705.8 397.4M860.9 637.2C863.4 635.1 866.5 633.7 869.1 631.8M649.9 345.1C647.7 347.6 644.9 349.6 643.2 352.4M924.7 460.4C925.8 463.7 929.0 465.3 931.3 467.7M888.1 563.8C884.9 564.6 882.2 566.9 878.9 567.3M1144.4 761.5C1141.2 762.1 1137.8 761.2 1134.6 761.9M1140.5 499.6C1140.2 503.1 1142.7 505.7 1143.9 508.7M858.3 583.1C861.5 584.1 864.2 586.0 866.6 588.1M764.8 548.4C766.5 551.2 769.4 553.0 771.6 555.3M578.3 268.7C576.5 271.2 574.5 273.8 571.5 275.3M874.0 521.4C877.3 520.5 880.2 522.8 883.4 523.0M890.1 607.9C890.7 604.7 889.0 601.5 889.8 598.4M908.1 498.0C905.1 497.4 901.8 497.8 898.8 497.0M844.0 653.9C840.8 653.8 837.8 652.7 835.0 651.3M588.9 584.3C591.7 582.5 592.8 579.3 595.0 577.1M781.8 447.9C779.4 450.0 778.2 453.1 776.3 455.5M866.1 325.7C863.2 326.9 859.9 326.2 856.8 326.8M734.6 396.6C737.7 395.9 740.8 395.1 743.9 395.3M908.9 641.3C906.6 643.3 903.6 644.8 902.3 647.8M1146.0 532.4C1147.4 529.7 1149.0 526.9 1149.9 523.9M1173.3 665.0C1176.3 666.2 1179.6 665.3 1182.6 666.1M743.9 395.3C746.7 393.9 749.0 391.8 751.3 389.6M871.1 376.8C868.7 374.6 868.7 370.9 866.2 368.8M1016.5 383.9C1019.2 385.7 1022.5 385.7 1025.5 386.0M882.4 440.6C879.9 438.7 878.6 435.7 876.4 433.5M1114.8 577.0C1117.2 578.9 1119.4 581.2 1121.4 583.5M845.4 346.9C843.8 344.0 844.7 340.7 844.1 337.7M933.6 321.7C932.0 324.7 934.3 328.0 933.3 331.0M687.5 652.4C684.5 653.5 682.0 655.4 680.1 657.9M856.5 590.4C854.1 592.2 852.4 594.9 849.9 596.6M893.3 649.5C894.7 652.5 893.0 655.6 893.5 658.5M639.9 505.6C638.0 508.0 635.1 509.2 632.7 511.0M790.2 489.7C791.6 487.0 792.7 484.2 792.3 481.0M997.8 366.0C998.1 369.0 1000.3 371.5 1000.4 374.5M718.7 468.1C719.1 464.9 716.6 462.4 716.4 459.4M701.0 598.8C698.5 597.3 696.0 595.5 693.2 594.5M819.4 650.9C822.0 652.5 822.9 655.7 825.2 657.6M564.5 395.8C562.2 393.9 559.2 393.1 556.4 392.4M654.1 384.8C651.6 383.2 650.7 379.9 648.0 378.5M886.4 320.9C886.3 323.7 886.8 326.7 886.8 329.5M955.3 495.9C952.5 496.8 949.5 496.4 946.6 496.4M691.7 512.7C691.3 515.5 690.9 518.5 689.8 521.2M746.0 365.3C748.2 367.3 749.2 370.2 750.1 372.9M675.5 495.8C677.1 493.2 680.1 492.3 682.2 490.3M824.7 490.0C825.0 487.2 825.4 484.3 825.4 481.4M921.7 276.3C924.2 277.9 925.2 280.7 926.5 283.3M956.4 487.5C957.2 490.4 955.6 493.1 955.3 495.9M855.7 335.2C855.8 332.4 855.7 329.5 856.8 326.8M905.2 622.2C907.9 623.1 910.7 623.4 913.6 623.3M783.1 485.2C785.4 486.7 788.4 487.4 790.2 489.7M749.7 486.1C747.0 485.7 744.3 484.6 741.4 485.0M861.8 318.6C863.1 321.0 864.1 323.7 866.1 325.7M895.2 293.2C897.7 294.8 900.7 294.2 903.4 294.3M1120.9 553.5C1118.4 552.1 1115.4 552.2 1113.1 550.4M1147.6 429.4C1150.2 427.8 1153.1 428.9 1155.9 428.5M983.5 427.9C984.3 430.6 983.2 433.5 984.0 436.1M664.8 549.9C667.6 550.7 669.8 552.4 671.3 554.9M624.7 512.7C627.2 511.5 630.3 512.6 632.7 511.0M813.3 600.3C813.0 597.6 813.1 594.8 813.2 592.1M1184.5 531.4C1183.2 529.1 1183.3 526.0 1181.4 524.0M1112.1 480.8C1109.5 481.7 1106.7 480.8 1104.1 481.8M999.0 358.0C998.0 360.5 997.6 363.3 997.8 366.0M823.1 625.6C820.6 624.4 817.9 624.2 815.2 624.6M859.9 597.6C862.6 597.9 865.2 598.6 867.6 599.6M987.6 462.2C984.9 462.3 982.7 464.4 980.0 464.4M658.9 494.8C659.5 497.3 660.4 499.9 661.0 502.4M615.7 397.4C616.3 394.9 615.2 392.1 616.2 389.6M919.8 647.2C921.0 644.7 920.7 642.0 920.1 639.4M1192.4 531.2C1189.8 530.1 1187.1 531.3 1184.5 531.4M760.9 393.2C760.3 395.7 760.0 398.4 759.8 401.0M777.7 507.4C778.4 509.9 778.7 512.5 779.7 514.9M773.6 445.1C772.6 447.6 769.7 448.5 768.5 450.8M694.0 498.1C695.0 500.5 696.9 502.3 698.6 504.2M692.8 610.5C690.7 609.2 688.5 607.8 687.0 605.8M926.2 507.1C924.2 505.2 921.2 505.9 919.1 504.5M754.2 366.6C753.7 369.2 751.3 370.7 750.1 372.9M422.3 739.9C422.0 742.3 422.4 744.7 421.5 747.0M1036.9 803.5C1035.5 803.8 1034.3 804.4 1033.4 805.6M635.8 751.3C634.8 751.7 634.0 752.7 633.2 753.4"/>
<path stroke="#dec3ee" stroke-width="1.9" d="M512.9 812.8C490.5 808.5 469.5 814.1 450.7 826.2M450.7 826.2C429.3 820.0 408.8 824.8 389.5 834.1M512.9 812.8C530.3 821.7 551.7 812.5 568.8 823.1M528.5 148.2C510.7 152.6 492.4 145.7 474.5 147.7M534.9 169.6C530.2 186.7 544.8 201.7 541.5 218.7M1176.0 337.8C1159.9 339.4 1148.0 350.5 1134.9 358.0M609.6 465.4C607.3 480.4 602.0 495.1 599.0 509.9M590.0 796.2C576.5 789.0 564.1 779.7 555.0 767.2M1211.7 267.3C1200.9 255.2 1183.1 256.9 1170.7 248.4M453.6 288.7C447.2 302.8 446.6 318.0 448.3 333.0M450.7 826.2C463.1 818.1 476.9 812.2 491.5 809.4M1176.0 337.8C1161.5 335.1 1146.7 334.9 1132.2 337.8M511.9 386.9C501.6 397.0 492.6 408.6 485.6 421.2M1096.5 622.2C1082.4 617.2 1074.0 605.3 1065.5 594.2M506.8 173.9C497.9 163.1 482.6 159.5 474.5 147.7M616.0 771.4C603.1 766.8 588.6 766.2 576.0 760.8M761.7 691.0C749.4 684.6 735.1 683.9 722.2 679.6M746.8 667.2C736.8 657.9 720.9 657.4 712.1 646.1M1162.7 227.4C1172.4 216.6 1187.6 216.8 1199.3 210.3M1176.0 143.0C1188.7 139.6 1201.6 134.5 1215.2 135.7M635.8 751.3C648.3 744.3 650.6 729.1 659.7 719.5M1016.4 299.1C1029.7 299.3 1042.0 306.5 1055.2 307.2M578.3 543.3C589.8 535.2 590.0 519.6 599.0 509.9M535.4 786.1C527.5 775.3 528.1 760.9 521.7 749.5M1211.7 267.3C1211.3 253.6 1199.3 244.1 1197.1 231.1M390.8 319.1C404.8 319.0 413.7 306.8 426.0 302.9M994.5 165.8C991.8 153.3 989.9 140.3 988.7 127.5M486.2 218.7C498.3 214.3 512.0 215.4 524.0 210.8M1133.3 252.4C1146.0 247.7 1151.2 233.6 1162.7 227.4M521.4 725.6C531.6 733.3 545.4 736.1 554.0 746.3M576.8 215.0C570.7 203.6 571.4 189.8 566.4 178.1M1001.9 615.8C1008.2 627.0 1019.8 634.2 1026.6 645.0M1179.4 181.0C1177.9 168.5 1175.0 155.7 1176.0 143.0M390.8 319.1C394.1 306.6 401.2 295.7 409.1 285.6M379.7 292.3C376.5 279.9 378.8 266.7 377.0 254.2M590.0 796.2C585.0 784.7 580.7 772.5 576.0 760.8M467.1 755.5C462.4 767.4 455.8 778.4 446.4 787.1M521.7 749.5C530.8 758.9 543.2 762.9 555.0 767.2M444.6 718.1C443.5 705.3 436.3 694.2 432.9 682.2M1200.1 549.6C1190.8 558.9 1189.1 572.2 1183.9 583.5M511.3 330.0C525.0 331.2 533.3 316.8 546.6 316.9M1102.3 587.7C1090.0 588.9 1077.4 590.8 1065.5 594.2M421.0 814.2C413.3 825.1 398.5 825.4 389.5 834.1M1179.4 181.0C1190.6 186.4 1197.2 199.0 1209.9 202.5M1032.1 251.5C1020.0 254.0 1009.3 261.9 996.9 263.7M395.0 247.5C399.3 235.8 411.5 228.7 414.6 216.4M621.8 495.6C628.7 485.0 639.0 477.8 649.9 471.9M932.0 734.6C944.9 737.4 948.7 753.0 961.1 756.6M748.9 630.8C748.2 642.8 745.0 655.0 746.8 667.2M462.3 232.4C450.3 237.9 438.0 228.9 426.0 232.4M604.8 717.4C616.1 711.4 628.5 712.2 640.6 712.7M995.8 721.3C991.7 732.5 989.0 744.5 985.8 755.9M776.5 697.5C773.0 686.1 773.9 673.5 769.8 662.2M1176.0 337.8C1178.4 349.4 1175.2 362.0 1179.7 373.4M1030.0 350.3C1033.1 362.1 1044.8 369.4 1047.5 381.4M998.5 566.6C1010.6 562.5 1022.2 569.6 1034.0 569.3M1153.2 580.8C1151.1 569.0 1152.4 557.0 1154.5 545.3M1031.3 609.7C1028.5 621.2 1031.0 633.7 1026.6 645.0M1179.4 181.0C1186.4 190.3 1190.0 202.5 1199.3 210.3M1055.2 307.2C1048.7 297.4 1046.3 285.1 1039.5 275.4M576.8 215.0C565.7 221.8 553.6 222.0 541.5 218.7M464.4 688.8C460.0 699.9 447.4 705.9 444.6 718.1M574.9 508.3C573.3 520.1 577.5 531.8 578.3 543.3M1062.8 297.6C1069.4 307.3 1080.5 313.5 1085.6 324.3M386.0 817.0C397.2 810.8 409.4 814.3 421.0 814.2M578.3 268.7C565.7 269.9 556.0 261.5 545.2 257.4M1102.3 587.7C1101.8 599.3 1101.9 611.4 1096.5 622.2M1188.3 336.1C1180.3 327.2 1173.8 317.2 1172.4 304.9M471.9 716.3C482.5 721.2 489.8 731.2 499.4 737.4M831.8 395.7C830.2 384.4 828.4 372.7 826.6 361.4M1162.7 227.4C1174.1 228.4 1185.9 228.9 1197.1 231.1M1023.1 316.0C1034.4 310.6 1046.2 319.3 1057.5 315.8M960.1 135.3C966.1 145.2 979.0 148.9 984.2 159.7M954.2 717.7C960.9 708.5 969.3 700.4 975.7 691.0M1209.9 202.5C1205.6 191.3 1211.6 179.4 1208.8 168.2M530.1 522.6C531.1 510.3 541.8 502.8 546.3 492.4M411.2 725.6C421.7 721.0 434.4 724.2 444.6 718.1M776.2 606.7C784.0 615.9 795.0 619.9 806.2 622.9M1176.0 143.0C1183.8 135.0 1194.1 129.4 1201.4 120.7M1141.0 555.8C1133.3 563.9 1124.1 570.9 1114.8 577.0M648.0 378.5C636.8 380.1 626.4 385.1 616.2 389.6M1122.7 615.0C1116.1 624.1 1109.0 633.1 1098.6 638.3M458.1 806.9C469.4 803.9 480.4 809.8 491.5 809.4M541.3 713.0C529.4 713.5 519.4 707.6 509.7 701.8M1070.8 385.6C1070.4 373.9 1061.3 365.3 1058.3 354.6M554.5 721.0C543.7 723.3 532.6 726.0 521.4 725.6M426.8 789.2C429.1 778.3 431.0 767.1 429.2 755.9M1161.9 269.6C1152.2 264.3 1143.2 257.4 1133.3 252.4M761.7 691.0C755.1 681.3 744.1 677.2 734.9 671.2M1209.9 340.4C1211.3 352.1 1204.9 362.1 1201.4 372.5M395.0 352.0C396.6 340.8 393.6 329.8 390.8 319.1M1066.3 768.9C1076.1 773.8 1085.2 780.5 1094.6 786.1M1167.7 447.5C1178.0 451.3 1188.2 456.1 1198.1 460.7M1069.5 573.2C1076.3 563.6 1087.2 559.8 1097.5 555.8M464.4 688.8C460.9 699.2 461.6 710.7 459.1 721.3M776.5 697.5C784.2 689.0 794.6 684.7 805.4 681.8M940.1 549.3C948.3 558.1 942.7 571.6 949.9 580.7M539.9 807.6C547.8 815.9 559.8 817.1 568.8 823.1M974.4 725.3C980.8 734.4 978.8 747.0 985.8 755.9M1182.6 484.0C1188.0 493.4 1192.8 503.5 1194.8 514.3M1194.8 514.3C1204.4 509.2 1213.6 503.0 1221.3 495.2M1033.4 504.8C1034.8 516.4 1028.0 525.9 1023.9 535.9M988.7 127.5C983.7 137.6 986.6 149.2 984.2 159.7M876.7 464.2C871.5 454.8 866.0 445.3 862.4 435.2M635.8 751.3C647.0 754.5 657.4 749.5 667.9 747.4M618.3 808.3C623.8 799.2 626.7 788.4 633.2 779.8M985.8 755.9C992.3 747.4 1001.3 741.1 1009.1 733.8M684.0 630.8C677.6 640.1 665.0 640.8 657.5 648.7M1194.8 514.3C1197.1 504.0 1198.3 493.2 1200.1 482.8M396.1 753.8C403.7 745.9 408.7 736.2 411.2 725.6M590.0 796.2C597.1 804.0 604.4 811.9 612.2 819.0M934.1 685.1C943.2 679.9 953.7 676.3 961.4 668.6M432.9 682.2C422.2 680.4 411.5 682.7 401.1 684.4M1115.6 364.9C1114.5 375.3 1114.1 386.1 1110.6 396.1M608.5 732.8C598.2 734.0 587.5 735.2 577.0 735.6M959.8 344.8C958.2 333.4 946.9 328.0 942.5 318.4M390.3 785.7C384.9 795.5 389.3 806.9 386.0 817.0M1194.8 514.3C1204.8 516.7 1215.1 520.1 1225.5 521.0M1032.4 159.7C1040.2 152.7 1043.8 141.8 1052.8 135.7M540.5 286.1C545.2 295.7 540.8 307.5 546.6 316.9M920.1 571.2C928.7 578.1 938.9 581.4 949.9 580.7M409.9 785.0C411.9 795.3 421.0 803.2 421.0 814.2M444.6 718.1C440.3 728.5 428.6 731.7 422.3 739.9M843.2 192.2C854.0 191.6 863.0 185.6 872.1 181.0M453.6 288.7C442.3 289.1 434.8 297.5 426.0 302.9M994.5 165.8C1004.8 164.8 1013.5 157.0 1024.2 157.3M1153.2 580.8C1163.4 580.7 1174.0 579.6 1183.9 583.5M618.3 808.3C609.4 803.4 599.1 800.8 590.0 796.2M1141.0 555.8C1140.5 565.9 1142.8 576.4 1140.5 586.6M817.3 368.7C821.9 377.7 828.7 385.9 831.8 395.7M1209.9 202.5C1208.4 212.4 1207.3 222.8 1207.5 232.9M499.4 737.4C489.4 740.3 479.0 739.2 468.9 737.8M970.1 588.1C980.2 586.8 989.7 582.1 999.8 581.2M649.9 471.9C639.8 468.7 629.5 475.0 619.4 471.7M1098.6 358.0C1090.6 350.9 1080.5 348.3 1070.3 347.1M419.1 701.5C427.8 706.5 438.2 709.5 444.6 718.1M1023.9 535.9C1033.5 532.4 1039.4 522.3 1049.9 520.2M820.5 530.0C811.0 533.2 801.9 538.5 791.9 540.2M1194.8 514.3C1198.5 504.9 1206.7 497.7 1209.9 488.0M913.7 710.5C916.3 721.1 927.1 725.7 932.0 734.6M379.7 292.3C390.4 294.5 400.1 291.0 409.1 285.6M1112.1 303.8C1117.6 295.3 1123.7 286.8 1133.2 282.2M994.5 165.8C984.5 168.5 978.2 177.9 968.8 181.4M973.0 750.6C967.8 742.1 966.4 731.4 960.1 723.5M952.4 182.4C944.9 188.9 937.8 196.2 930.9 203.4M1001.9 615.8C1011.0 611.0 1021.6 611.6 1031.3 609.7M919.5 690.2C925.0 698.7 933.8 704.3 940.2 712.0M1032.4 456.5C1030.8 466.5 1030.2 476.7 1034.2 486.4M1070.8 385.6C1080.3 389.5 1089.0 395.0 1094.4 404.1M462.3 232.4C457.0 240.8 456.5 251.8 449.9 259.7M1161.9 269.6C1164.4 279.7 1160.2 289.5 1159.3 299.4M440.3 744.5C448.8 738.7 452.9 728.9 459.1 721.3M921.1 541.4C922.2 551.3 923.9 561.5 920.1 571.2M509.7 416.6C512.1 406.9 514.6 397.0 511.9 386.9M409.1 285.6C414.7 277.5 416.5 266.8 424.4 260.1M843.2 192.2C839.4 182.9 842.3 172.2 837.9 163.0M396.1 753.8C402.7 745.4 412.6 742.4 422.3 739.9M960.1 135.3C969.3 132.1 979.9 132.6 988.7 127.5M994.5 165.8C991.0 175.0 989.1 185.0 985.5 194.1M494.9 785.0C486.5 790.8 477.3 794.9 466.8 794.5M1125.9 398.3C1127.1 387.6 1138.2 382.5 1141.3 372.9M1098.6 500.4C1109.0 500.1 1116.1 490.7 1126.2 489.6M1179.7 373.4C1184.9 365.0 1186.5 354.7 1191.8 346.4M560.1 283.0C552.0 276.4 547.1 267.6 545.2 257.4M426.8 789.2C420.4 781.5 415.5 772.7 414.1 762.6M887.7 245.2C878.9 240.4 868.1 242.0 859.1 237.9M998.5 566.6C1007.5 570.4 1013.8 579.5 1023.9 581.6M1103.6 438.9C1101.9 449.5 1093.5 455.9 1087.2 463.4M1102.8 338.2C1112.6 341.7 1122.6 341.4 1132.2 337.8M440.3 744.5C449.9 743.0 459.5 740.1 468.9 737.8M590.0 796.2C593.0 805.9 593.4 815.8 590.3 825.6M453.6 288.7C449.7 279.5 452.9 269.0 449.9 259.7M1209.9 340.4C1207.2 331.1 1206.3 320.8 1199.5 313.0M975.1 517.5C970.4 508.7 960.7 504.2 955.3 495.9M852.5 300.7C860.2 294.4 865.9 286.2 870.5 277.6M464.4 688.8C474.0 687.0 483.7 684.2 493.6 686.6M1155.9 428.5C1154.1 418.9 1150.6 409.6 1145.8 401.1M540.5 286.1C542.2 276.6 547.4 267.5 545.2 257.4M913.7 710.5C922.2 715.0 930.1 721.2 939.9 722.8M776.2 606.7C785.4 611.8 795.5 608.5 805.0 608.8M846.2 782.6C847.9 792.1 848.5 801.9 846.9 811.4M813.8 522.6C807.0 515.7 797.0 512.9 790.3 505.9M955.8 164.9C965.1 162.6 974.7 160.7 984.2 159.7M604.8 533.6C611.9 527.2 618.3 519.7 624.7 512.7M914.5 198.7C922.9 194.3 931.4 189.4 939.4 184.2M491.5 809.4C484.5 802.5 473.4 802.0 466.8 794.5M1125.9 398.3C1132.9 390.6 1142.7 388.5 1152.4 387.0M894.9 675.6C903.6 679.4 911.5 685.3 919.5 690.2M952.4 663.1C946.4 670.4 938.4 676.4 934.1 685.1M569.1 327.0C576.2 320.7 583.7 314.5 588.9 306.4M1002.1 314.5C993.9 321.0 994.1 331.9 989.7 340.2M1102.8 338.2C1099.4 328.7 1104.6 319.2 1103.9 309.7M1052.2 578.5C1043.3 583.1 1033.6 584.0 1023.9 581.6M464.4 688.8C470.5 696.9 469.1 707.3 471.9 716.3M930.7 304.2C939.5 299.6 949.7 302.7 958.8 300.0M534.9 169.6C525.0 167.1 516.2 173.0 506.8 173.9M920.1 571.2C914.2 563.1 916.0 552.6 912.4 543.9M1159.3 299.4C1159.2 289.2 1153.3 281.3 1148.4 273.1M494.4 750.2C486.0 746.0 476.2 744.2 468.9 737.8M820.5 530.0C813.0 536.1 810.2 546.1 803.0 552.3M1199.5 313.0C1190.6 310.4 1180.9 309.3 1172.4 304.9M578.3 543.3C587.0 539.9 596.7 538.4 604.8 533.6M934.1 685.1C932.4 675.4 937.9 666.6 938.3 657.2M1059.4 464.6C1049.5 465.2 1040.7 461.1 1032.4 456.5M395.0 352.0C403.5 347.4 410.0 340.4 415.4 332.6M396.1 801.1C405.4 803.3 412.7 809.9 421.0 814.2M887.7 245.2C878.4 245.8 869.2 248.4 860.2 250.6M746.8 667.2C751.3 675.2 756.1 683.5 761.7 691.0M657.5 680.0C665.8 684.2 673.2 690.4 681.7 694.2M986.3 567.0C980.6 559.7 976.5 551.0 970.4 544.0M975.2 490.0C984.3 488.7 993.5 486.1 1002.8 485.6M540.5 286.1C541.0 296.0 545.0 304.5 552.0 311.5M1070.8 385.6C1075.1 394.0 1072.9 404.5 1078.5 412.5M697.8 728.1C689.1 724.8 679.0 726.8 670.5 722.4M1153.2 580.8C1147.2 573.5 1142.1 565.4 1141.0 555.8M970.1 588.1C978.0 593.1 988.6 592.2 995.8 598.8M1182.6 484.0C1174.9 490.3 1174.3 500.7 1169.9 508.7M1098.6 500.4C1094.4 508.5 1088.9 516.3 1086.4 525.3M831.8 395.7C825.7 388.7 815.5 386.7 809.6 379.3M922.6 349.2C922.8 358.4 921.0 367.7 918.8 376.6M889.6 159.7C882.9 166.0 879.8 175.5 872.1 181.0M1155.9 428.5C1165.0 428.0 1174.0 424.9 1183.0 424.1M975.2 490.0C977.2 499.1 976.5 508.4 975.1 517.5M934.1 685.1C932.2 694.9 939.2 702.9 940.2 712.0M588.9 306.4C580.1 303.2 570.7 304.9 561.7 304.2M1097.5 555.8C1105.9 560.6 1109.5 569.7 1114.8 577.0M576.0 708.4C566.8 711.0 557.6 710.6 548.7 707.3M576.0 708.4C572.5 717.5 573.1 726.8 577.0 735.6M494.4 750.2C503.4 750.4 512.7 751.4 521.7 749.5M535.4 786.1C539.1 777.0 547.5 772.4 555.0 767.2M632.1 633.8C624.7 628.6 616.1 624.5 611.6 615.9M874.0 294.2C870.4 302.5 865.1 310.2 861.8 318.6M914.0 410.0C908.8 418.2 900.0 421.8 891.6 425.3M934.1 685.1C931.0 676.7 931.6 666.8 925.4 659.4M676.9 759.4C681.8 751.9 687.9 744.9 694.1 738.5M622.6 339.1C613.8 336.3 604.3 341.3 595.6 337.4M843.2 192.2C852.2 194.4 861.3 191.7 870.3 191.3M635.0 678.2C633.6 669.0 628.2 661.5 623.7 653.8M554.5 721.0C563.9 722.7 570.1 730.0 577.0 735.6M757.9 582.7C764.5 575.6 774.2 575.0 782.6 572.1M805.4 681.8C804.1 672.9 800.6 664.4 795.7 656.8M444.6 718.1C446.8 727.4 439.3 735.4 440.3 744.5M1072.6 506.7C1082.2 508.6 1090.0 502.2 1098.6 500.4M758.3 561.0C768.0 561.0 774.3 569.0 782.6 572.1M984.2 159.7C980.1 167.5 972.5 173.3 968.8 181.4M659.9 622.2C658.7 630.9 659.6 640.1 657.5 648.7M986.3 567.0C982.4 575.1 975.7 581.3 970.1 588.1M913.7 710.5C922.4 711.9 931.4 712.2 940.2 712.0M411.2 725.6C404.0 720.3 397.7 713.9 393.2 706.2M521.4 725.6C515.8 718.6 514.2 709.4 509.7 701.8M652.5 768.9C659.3 763.0 661.1 753.3 667.9 747.4M1123.2 421.2C1118.9 429.4 1111.6 434.7 1103.6 438.9M469.5 774.2C463.5 781.5 453.5 782.0 446.4 787.1M633.2 779.8C629.0 771.1 636.5 762.1 633.2 753.4M827.3 512.7C825.5 521.9 831.8 529.8 832.3 538.6M419.1 701.5C411.2 706.5 402.3 707.5 393.2 706.2M554.0 746.3C559.9 753.1 568.2 756.8 576.0 760.8M1058.9 525.3C1056.1 534.1 1050.6 541.1 1043.1 546.4M649.9 471.9C655.5 464.9 654.8 454.8 660.8 448.0M648.5 454.9C640.2 450.6 630.8 455.4 622.3 452.8M770.9 431.9C778.6 427.8 784.9 420.8 793.9 419.2M668.9 583.9C660.0 582.1 651.5 586.3 642.8 587.0M1165.9 395.7C1168.1 386.9 1173.9 380.0 1179.7 373.4M1001.9 615.8C1009.0 610.7 1013.0 601.8 1021.3 598.0M856.0 650.2C863.0 655.4 870.7 660.1 879.5 661.6M977.5 679.3C978.3 688.3 981.7 696.5 987.1 703.7M676.9 759.4C668.5 761.8 660.3 765.1 652.5 768.9M942.6 649.8C945.5 641.1 945.3 632.2 942.0 623.7M871.1 376.8C878.3 381.4 886.6 384.9 892.8 391.1M996.6 529.6C994.5 538.1 997.6 547.1 995.6 555.6M959.8 344.8C964.7 352.8 974.8 353.8 981.0 359.8M844.0 653.9C837.1 659.0 834.0 668.4 825.5 671.9M861.8 726.7C861.9 735.3 864.8 743.8 865.2 752.3M642.2 516.5C635.1 521.3 628.6 527.2 622.6 533.4M624.7 512.7C616.5 509.2 607.6 509.7 599.0 509.9M396.9 688.4C402.6 695.5 411.0 698.5 419.1 701.5M1147.6 429.4C1138.3 429.2 1132.2 437.4 1123.8 439.3M1053.0 504.4C1058.3 497.6 1063.5 490.5 1066.6 482.4M846.2 782.6C854.9 782.3 863.6 781.1 871.1 776.0M853.9 551.4C860.4 557.8 863.0 566.3 864.5 574.9M983.1 607.5C983.6 616.0 986.4 624.5 986.3 633.0M1147.6 429.4C1140.1 425.3 1132.0 421.9 1123.2 421.2M856.0 366.0C860.3 358.1 866.5 352.0 874.6 348.2M1048.0 251.1C1055.9 247.9 1062.7 242.1 1070.5 238.8M426.8 789.2C424.1 797.3 422.2 805.8 421.0 814.2M1048.0 251.1C1051.2 259.1 1058.0 265.0 1061.8 272.7M1133.3 252.4C1141.5 256.9 1141.3 267.8 1148.4 273.1M469.5 774.2C472.8 765.8 480.1 760.7 486.9 755.5M537.3 389.4C528.8 389.8 520.1 389.7 511.9 386.9M1169.9 508.7C1178.2 510.1 1186.1 514.5 1194.8 514.3M1023.1 316.0C1020.3 324.0 1014.7 331.0 1012.6 339.2M919.5 690.2C912.7 695.2 906.2 701.1 898.3 704.4M882.4 367.8C887.1 375.0 891.2 382.6 892.8 391.1M623.6 603.7C628.6 596.6 635.5 591.3 642.8 587.0M1021.3 598.0C1012.8 596.7 1004.1 595.9 995.8 598.8M449.9 259.7C441.5 259.7 432.8 257.8 424.4 260.1M411.2 725.6C413.3 717.5 413.4 708.4 419.1 701.5M633.2 779.8C628.6 772.1 629.8 763.1 628.7 754.8M1113.4 243.8C1104.8 243.1 1096.9 239.6 1089.6 235.2M997.4 778.4C997.0 769.2 992.3 761.9 985.8 755.9M974.4 725.3C969.9 733.4 971.4 742.1 973.0 750.6M468.9 737.8C472.5 746.0 479.5 751.2 486.9 755.5M541.8 692.4C550.0 690.2 558.4 688.0 566.9 690.2M576.0 760.8C576.9 752.5 574.2 743.8 577.0 735.6M518.7 685.1C510.3 683.6 501.9 686.7 493.6 686.6M857.3 160.6C860.5 168.5 869.4 172.6 872.1 181.0M1059.7 542.9C1053.0 548.8 1049.0 556.3 1047.7 565.1M1072.6 506.7C1073.1 498.1 1070.4 490.0 1066.6 482.4M981.9 309.9C974.5 306.1 966.9 302.0 958.8 300.0M974.4 725.3C975.8 716.5 984.1 711.5 987.1 703.7M831.8 395.7C823.4 396.1 815.6 399.9 807.5 401.6M1182.0 472.7C1173.9 470.8 1165.3 471.5 1157.1 470.3M566.9 690.2C559.3 694.1 555.5 702.5 548.7 707.3M1084.6 273.1C1093.0 273.0 1100.6 268.3 1108.8 267.3M838.5 431.9C831.7 436.9 823.3 439.0 816.1 443.0M521.4 725.6C512.8 726.9 507.4 734.8 499.4 737.4M427.3 319.5C435.4 322.2 440.9 329.3 448.3 333.0M576.0 708.4C568.4 711.6 560.2 714.5 554.5 721.0M628.4 568.2C627.9 559.9 632.7 551.8 630.2 543.4M682.4 389.0C688.8 395.5 697.9 395.2 705.8 397.4M824.7 490.0C819.3 483.8 812.0 479.3 806.4 473.3M580.5 684.0C581.1 692.4 576.2 700.1 576.0 708.4M1042.7 597.6C1035.0 594.1 1030.2 586.8 1023.9 581.6M851.2 359.7C843.3 364.0 834.9 363.3 826.6 361.4M696.2 712.7C696.2 704.0 701.0 696.8 704.7 689.5M1066.3 768.9C1066.2 777.8 1069.8 785.4 1075.8 791.7M1004.8 332.6C1012.9 329.4 1015.0 319.2 1023.1 316.0M700.5 405.8C692.0 403.0 688.2 394.8 682.4 389.0M658.9 494.8C657.4 486.7 655.0 478.6 649.9 471.9M622.6 339.1C627.5 346.4 636.7 347.7 643.2 352.4M586.0 358.4C592.3 363.8 597.4 370.4 601.6 377.5M1084.6 273.1C1093.5 272.8 1099.3 280.6 1107.3 282.5M595.6 337.4C595.3 345.9 598.8 353.6 602.7 360.8M469.5 682.2C476.8 687.1 486.0 682.8 493.6 686.6M843.8 452.8C849.3 458.9 855.4 464.7 863.6 467.0M899.4 546.5C901.1 554.7 909.6 559.6 910.8 568.1M653.8 320.4C645.5 320.7 638.3 314.9 630.0 315.2M866.6 796.9C862.3 804.7 853.9 807.3 846.9 811.4M964.8 520.2C958.4 515.4 952.3 509.7 945.9 504.9M801.9 338.2C793.9 337.3 785.6 337.3 777.5 338.7M674.2 543.3C668.1 538.1 660.8 534.0 654.6 528.9M790.3 505.9C797.7 510.7 806.4 508.3 814.4 509.5M604.8 533.6C599.8 526.5 600.3 517.9 599.0 509.9M1184.5 531.4C1176.1 531.8 1169.1 526.1 1161.0 525.2M950.5 741.3C957.7 745.1 966.7 744.9 973.0 750.6M882.4 440.6C878.6 447.9 875.8 455.7 876.7 464.2M1120.9 553.5C1117.0 560.8 1116.1 569.0 1114.8 577.0M635.8 751.3C641.1 757.4 644.8 765.2 652.5 768.9M862.6 481.6C870.4 479.2 878.5 477.9 886.7 479.2M409.1 285.6C414.2 291.8 420.8 296.8 426.0 302.9M940.7 518.2C948.4 522.0 956.8 520.7 964.8 520.2M541.8 692.4C534.7 688.2 526.2 688.0 518.7 685.1M574.9 508.3C582.8 510.1 591.2 506.9 599.0 509.9M545.2 257.4C539.4 251.8 534.7 245.1 531.4 237.6M1023.9 581.6C1016.0 578.7 1007.8 580.5 999.8 581.2M823.1 625.6C817.0 631.0 811.8 637.3 809.4 645.4M879.5 661.6C880.3 653.1 873.3 646.7 872.7 638.6M770.9 621.1C763.3 623.5 756.1 627.4 748.9 630.8M892.8 523.4C893.3 531.4 896.0 539.2 899.4 546.5M820.7 417.0C821.8 408.6 825.9 401.6 831.8 395.7M596.1 750.2C589.6 745.6 585.1 738.1 577.0 735.6M1199.3 210.3C1204.8 216.7 1203.6 225.9 1207.5 232.9M821.5 349.4C829.0 345.3 837.5 347.9 845.4 346.9M973.8 442.2C971.5 434.2 962.4 430.6 960.3 422.4M569.1 327.0C564.9 320.0 563.3 312.0 561.7 304.2M1031.1 756.9C1024.6 751.9 1023.7 742.5 1016.8 737.8M970.1 588.1C968.1 580.5 964.8 572.8 965.5 564.6M521.4 725.6C524.4 733.5 521.8 741.6 521.7 749.5M890.2 444.6C885.8 451.1 881.8 458.1 876.7 464.2M845.4 346.9C838.9 351.4 833.0 356.9 826.6 361.4M1002.7 473.9C1007.6 480.4 1013.3 486.2 1021.3 488.8M589.5 320.4C597.0 323.1 605.1 323.6 613.0 323.0M1019.1 537.1C1011.4 535.7 1004.8 529.9 996.6 529.6M419.1 701.5C421.6 693.6 427.0 687.6 432.9 682.2M1070.8 385.6C1063.6 381.2 1055.3 382.0 1047.5 381.4M696.2 712.7C694.2 704.4 687.1 699.8 681.7 694.2M706.6 438.1C709.1 445.4 714.4 451.8 716.4 459.4M1004.8 332.6C1007.7 325.4 1014.0 319.5 1014.8 311.3M388.4 729.2C390.4 721.7 391.8 713.8 393.2 706.2M628.4 568.2C621.3 571.1 614.7 576.0 607.2 578.1M1085.6 324.3C1093.6 322.0 1096.1 312.4 1103.9 309.7M884.0 279.8C888.1 272.5 897.9 272.1 902.6 265.5M1016.5 383.9C1012.7 390.9 1006.1 395.7 1001.3 401.7M1028.4 549.2C1020.7 547.1 1012.7 548.6 1005.0 549.3M391.3 767.9C398.9 766.3 406.8 765.3 414.1 762.6M521.4 793.4C526.5 799.4 532.6 804.5 539.9 807.6M884.0 279.8C887.1 272.1 881.5 264.2 883.8 256.5M610.4 271.3C608.4 278.8 608.7 287.0 605.1 294.0M892.5 681.8C892.8 689.7 898.6 696.4 898.3 704.4M1031.1 756.9C1024.9 761.6 1016.6 763.0 1010.9 768.6M1114.5 607.5C1108.8 612.6 1103.9 619.1 1096.5 622.2M1059.4 464.6C1062.8 457.0 1072.6 456.0 1076.4 448.7M1102.3 587.7C1103.3 596.1 1109.5 601.5 1114.5 607.5M1069.5 573.2C1061.8 571.9 1055.2 566.9 1047.7 565.1M877.1 331.7C872.5 338.7 865.0 341.5 857.6 344.1M1095.7 378.5C1101.1 383.9 1106.3 389.8 1110.6 396.1M999.0 358.0C1006.4 353.9 1006.1 344.0 1012.6 339.2M926.4 393.2C932.7 398.0 935.7 405.7 941.0 411.2M862.6 481.6C870.7 481.1 877.2 487.0 884.8 488.1M563.0 805.6C555.4 806.1 547.7 808.3 539.9 807.6M586.0 358.4C588.6 351.2 594.7 345.3 595.6 337.4M1072.6 506.7C1076.3 513.5 1082.5 518.8 1086.4 525.3M843.5 510.3C843.3 518.4 846.9 525.5 850.4 532.4M940.7 518.2C932.7 519.1 927.1 525.6 919.8 528.1M921.7 276.3C929.5 274.5 937.1 277.3 944.6 278.5M806.4 450.3C799.2 452.7 792.0 456.0 784.6 458.0M1123.2 421.2C1123.9 413.6 1125.5 405.9 1125.9 398.3M388.4 729.2C395.8 727.0 404.0 728.8 411.2 725.6M747.6 599.5C742.2 593.5 733.1 594.1 727.2 588.9M458.1 806.9C452.4 801.5 449.6 794.1 446.4 787.1M612.2 819.0C605.4 822.4 598.0 825.1 590.3 825.6M1161.9 269.6C1165.1 262.7 1165.8 254.5 1170.7 248.4M1019.1 537.1C1015.3 529.8 1008.0 526.4 1001.2 522.9M947.1 375.9C938.9 375.8 932.9 381.7 925.8 384.3M917.7 673.8C910.0 671.8 902.6 676.9 894.9 675.6M409.9 785.0C411.4 777.7 412.1 769.9 414.1 762.6M1115.8 463.8C1111.5 470.7 1104.0 473.6 1097.3 477.1M938.0 460.5C931.4 456.1 929.5 447.7 923.6 442.8M886.2 467.0C887.2 459.6 890.7 452.4 890.2 444.6M783.1 485.2C779.0 491.9 782.1 500.7 777.7 507.4M871.8 557.7C866.4 552.3 861.9 546.0 859.0 538.9M1084.6 273.1C1077.0 274.5 1069.3 274.9 1061.8 272.7M922.2 482.0C918.1 475.6 915.7 468.1 910.3 462.5M1179.7 373.4C1171.9 374.2 1165.1 368.6 1157.3 369.3M892.8 523.4C898.9 528.1 907.5 527.7 913.4 532.8M922.2 482.0C918.8 489.1 921.5 497.2 919.1 504.5M550.8 371.2C548.3 378.7 542.9 384.3 537.3 389.4M706.6 438.1C704.9 430.0 697.2 426.1 693.0 419.9M630.2 543.4C622.8 545.4 615.2 546.3 607.6 544.3M613.0 323.0C606.7 327.1 602.6 334.2 595.6 337.4M657.5 680.0C650.0 680.7 642.4 680.1 635.0 678.2M869.0 425.1C876.5 422.5 884.2 423.2 891.6 425.3M814.4 581.6C811.1 574.7 811.8 566.7 809.1 559.7M1033.4 504.8C1038.2 510.5 1045.6 513.9 1049.9 520.2M908.8 279.7C910.6 286.9 912.4 294.4 914.8 301.4M852.5 300.7C845.0 302.4 840.3 309.9 832.4 310.8M1055.2 816.6C1047.1 815.1 1042.3 808.6 1036.9 803.5M694.4 455.7C692.3 463.0 693.5 470.7 693.6 478.1M984.7 497.2C979.6 503.0 977.6 510.5 975.1 517.5M692.8 610.5C700.7 613.0 708.1 611.1 715.0 607.2M734.5 443.4C738.1 450.6 737.0 458.3 735.5 465.8M1047.5 381.4C1040.7 385.2 1032.8 384.7 1025.5 386.0M862.6 481.6C868.1 476.6 872.3 470.2 876.7 464.2M697.8 728.1C692.6 733.8 683.7 733.9 679.0 740.3M1140.7 525.7C1133.1 525.4 1126.2 522.0 1119.5 518.8M1023.1 316.0C1026.8 322.5 1025.6 331.0 1030.8 336.9M866.2 368.8C867.9 361.6 870.8 354.6 874.6 348.2M493.6 686.6C499.9 690.6 505.3 695.8 509.7 701.8M395.0 247.5C402.6 248.8 410.0 246.8 417.0 244.3M1123.8 532.4C1131.1 533.6 1138.6 533.4 1146.0 532.4M652.5 768.9C647.8 775.4 638.4 774.2 633.2 779.8M783.1 467.9C790.7 468.4 797.7 465.1 804.8 463.4M1200.1 482.8C1201.7 475.3 1200.3 467.9 1198.1 460.7M1102.8 338.2C1095.1 336.2 1091.6 328.5 1085.6 324.3M684.0 630.8C686.7 624.0 689.9 617.2 692.8 610.5M824.7 490.0C819.4 495.4 816.4 502.4 814.4 509.5M642.8 587.0C640.8 579.5 645.9 572.4 644.8 565.0M535.4 786.1C537.9 793.0 537.3 800.8 539.9 807.6M773.0 295.4C778.7 300.5 785.6 303.3 793.2 304.2M550.8 371.2C558.1 370.7 565.7 370.8 572.2 366.6M590.8 261.5C596.0 267.3 604.3 267.4 610.4 271.3M856.0 366.0C857.0 358.8 858.0 351.4 857.6 344.1M555.0 767.2C561.6 763.9 569.5 764.5 576.0 760.8M550.8 371.2C549.5 379.0 554.8 385.3 556.4 392.4M983.4 388.2C987.9 382.2 993.7 377.6 1000.4 374.5M816.5 335.6C811.9 341.2 808.3 348.0 802.0 351.9M1023.9 535.9C1029.3 541.1 1038.0 540.6 1043.1 546.4M995.8 721.3C988.7 722.1 981.2 722.8 974.4 725.3M509.7 416.6C513.0 409.5 521.1 407.5 525.9 402.0M927.5 342.1C921.1 338.2 918.1 330.9 912.8 326.0M943.6 354.6C937.1 351.3 929.5 351.0 922.6 349.2M877.1 331.7C870.5 335.5 862.8 334.2 855.7 335.2M512.9 812.8C506.3 809.0 498.5 810.8 491.5 809.4M809.1 559.7C805.8 566.1 799.7 571.0 798.0 578.3M795.0 570.5C791.2 564.4 788.5 557.4 783.9 551.8M471.9 716.3C467.7 722.9 469.2 730.6 468.9 737.8M757.2 359.2C764.7 359.4 771.5 362.3 777.7 366.1M446.4 787.1C452.2 792.1 460.4 791.2 466.8 794.5M1113.4 243.8C1118.8 249.4 1126.0 251.3 1133.3 252.4M852.5 300.7C852.4 293.3 850.6 286.2 846.7 279.8M859.1 237.9C860.5 230.3 856.6 223.6 854.4 216.8M1037.4 430.3C1044.7 432.0 1050.4 436.7 1055.7 441.8M652.8 596.9C660.1 596.6 666.6 601.3 673.9 601.5M947.1 375.9C948.9 368.4 943.3 361.9 943.6 354.6M590.3 825.6C583.0 826.1 575.8 824.4 568.8 823.1M752.9 539.4C754.2 547.1 751.8 554.0 747.9 560.4M863.6 467.0C856.3 467.9 849.6 463.3 842.3 464.0M604.0 634.2C605.2 641.7 602.5 648.6 599.7 655.3M1042.7 597.6C1035.7 599.7 1028.3 597.0 1021.3 598.0M726.2 462.2C726.1 455.0 724.0 448.0 722.5 441.1M974.4 325.2C981.7 327.8 984.9 335.0 989.7 340.2M984.7 497.2C989.9 492.2 997.0 489.7 1002.8 485.6M534.9 169.6C528.6 166.4 521.4 164.8 515.0 161.6M596.1 750.2C602.9 746.4 605.9 739.5 608.5 732.8M569.1 327.0C574.8 321.8 582.4 321.4 589.5 320.4M871.1 776.0C868.5 782.6 865.9 789.5 866.6 796.9M983.4 388.2C978.4 393.2 972.1 397.4 969.2 404.2M747.6 599.5C747.5 606.9 751.1 613.4 753.1 620.2M576.8 215.0C580.2 221.1 582.2 228.3 586.8 233.8M880.9 583.9C881.7 576.7 883.8 569.7 888.1 563.8M1042.7 597.6C1046.3 591.6 1047.2 583.9 1052.2 578.5M506.8 173.9C502.1 179.4 497.7 185.2 496.8 192.7M560.1 283.0C557.4 290.2 560.7 297.2 561.7 304.2M908.1 498.0C915.2 494.9 919.2 488.7 922.2 482.0M930.7 304.2C929.1 297.3 926.8 290.4 926.5 283.3M693.6 478.1C700.6 475.3 707.9 480.2 714.9 477.9M1003.8 588.5C1010.0 585.1 1016.7 582.2 1023.9 581.6M704.8 589.2C711.3 586.4 717.1 582.1 723.4 579.0M814.4 509.5C809.4 504.5 804.1 499.6 800.3 493.5M783.1 467.9C776.0 469.4 769.1 464.8 761.9 466.2M842.4 616.2C838.8 610.1 834.1 604.3 833.5 596.9M895.2 293.2C888.2 294.9 881.1 296.1 874.0 294.2M1037.9 785.7C1045.0 785.8 1052.0 782.5 1059.1 784.7M621.4 560.4C619.0 553.3 610.9 550.7 607.6 544.3M1143.9 508.7C1148.0 503.0 1152.2 497.2 1156.4 491.6M830.0 494.0C833.4 500.3 839.4 504.6 843.5 510.3M1112.1 303.8C1114.2 297.0 1115.3 289.9 1116.1 283.0M521.4 793.4C517.3 799.2 513.5 805.5 512.9 812.8M806.4 473.3C807.4 480.9 801.1 486.5 800.3 493.5M396.1 801.1C400.9 796.0 404.1 789.3 409.9 785.0M831.8 395.7C839.1 397.6 842.8 404.6 849.1 407.9M810.1 287.8C817.2 289.2 824.3 288.7 831.1 286.1M750.1 372.9C753.8 379.3 759.7 383.4 766.1 386.6M955.8 164.9C958.6 171.6 963.1 177.1 968.8 181.4M535.2 370.0C527.9 370.0 521.8 365.4 515.0 364.0M706.3 504.8C702.7 510.9 701.6 518.0 700.0 524.8M984.2 603.7C979.7 598.4 975.4 592.7 970.1 588.1M870.3 191.3C867.2 198.0 866.8 205.1 868.9 212.2M1001.4 428.2C1008.4 426.0 1012.3 419.4 1018.1 415.6M913.7 653.0C906.9 654.0 900.5 657.6 893.5 658.5M947.6 697.9C951.7 703.8 950.8 711.6 954.2 717.7M985.5 194.1C978.4 192.0 974.8 185.0 968.8 181.4M939.4 184.2C938.7 191.5 933.3 196.9 930.9 203.4M411.2 725.6C403.9 727.3 397.3 723.5 390.5 722.4M616.0 368.7C615.1 375.6 615.9 382.7 616.2 389.6M804.8 463.4C798.1 462.0 791.1 460.4 784.6 458.0M554.0 746.3C554.3 753.2 554.7 760.3 555.0 767.2M1028.4 549.2C1028.4 556.3 1030.0 563.3 1034.0 569.3M986.3 567.0C979.5 565.3 972.5 564.4 965.5 564.6M947.1 375.9C942.1 381.3 942.6 389.2 939.4 395.3M926.4 393.2C919.7 396.8 918.0 404.4 914.0 410.0M902.6 265.5C896.7 261.8 889.0 261.5 883.8 256.5M1086.4 525.3C1093.0 527.3 1099.9 529.2 1106.8 529.6M648.5 454.9C643.5 460.3 634.9 458.5 629.6 463.4M1199.3 210.3C1201.3 217.5 1198.5 224.3 1197.1 231.1M707.6 568.5C704.0 575.0 708.3 582.7 704.8 589.2M588.9 584.3C591.9 590.8 588.4 598.5 592.1 604.8M733.3 344.3C729.1 350.6 730.2 357.9 730.6 364.9M624.7 512.7C625.0 519.6 626.0 526.8 622.6 533.4M722.2 626.7C717.3 621.2 716.9 613.8 715.0 607.2M879.5 661.6C886.5 664.2 888.2 672.7 894.9 675.6M843.5 510.3C840.8 503.4 842.9 496.4 843.7 489.6M1002.1 314.5C995.6 312.0 988.2 312.7 981.9 309.9M858.3 583.1C855.9 576.6 850.5 571.7 846.9 565.8M595.6 337.4C588.6 340.0 585.1 346.6 580.8 351.9M450.7 826.2C452.0 819.4 455.7 813.3 458.1 806.9M689.9 491.2C696.6 488.8 703.7 490.7 710.5 490.1M701.0 538.5C697.6 532.6 692.5 527.5 689.8 521.2M541.8 692.4C544.9 699.3 541.4 706.2 541.3 713.0M1098.6 358.0C1097.3 364.7 1094.1 371.3 1095.7 378.5M1182.0 472.7C1187.5 476.9 1194.6 478.5 1200.1 482.8M1123.8 532.4C1116.9 534.5 1112.3 540.1 1107.1 544.5M876.6 395.7C882.1 400.0 884.5 407.2 890.5 411.0M747.6 599.5C750.8 592.7 746.6 585.7 747.3 578.9M816.1 443.0C821.6 438.7 825.8 433.1 828.7 426.8M983.1 607.5C988.3 612.5 996.4 611.5 1001.9 615.8M673.9 601.5C679.2 596.2 686.1 594.8 693.2 594.5M726.2 462.2C731.1 456.9 731.4 449.5 734.5 443.4M680.3 436.0C682.4 429.0 690.2 426.3 693.0 419.9M747.9 497.2C754.8 497.4 761.8 496.6 768.0 493.3M1034.0 569.3C1039.7 572.9 1045.6 576.6 1052.2 578.5M856.0 650.2C851.5 644.8 848.9 638.3 847.5 631.6M823.1 625.6C828.6 629.5 833.9 634.1 838.0 639.6M683.0 548.8C689.3 552.1 696.7 549.8 703.1 552.3M469.5 774.2C470.3 781.1 470.1 788.1 466.8 794.5M621.5 693.5C627.2 689.6 632.4 684.9 635.0 678.2M902.6 265.5C909.4 267.1 916.3 266.4 923.0 264.6M927.5 342.1C932.1 347.1 938.0 350.8 943.6 354.6M879.5 661.6C885.4 664.9 891.7 667.9 897.5 671.2M717.9 388.2C719.1 395.2 722.8 401.1 728.0 405.9M1134.9 358.0C1134.1 351.3 1135.3 344.2 1132.2 337.8M1033.4 504.8C1026.3 502.7 1020.4 509.5 1013.3 507.9M927.5 342.1C920.4 339.9 913.9 343.1 907.3 344.7M856.0 650.2C862.0 647.1 865.8 640.4 872.7 638.6M820.7 417.0C815.1 413.0 812.7 405.9 807.5 401.6M756.3 456.1C753.1 462.0 752.8 469.4 748.1 474.7M688.3 577.4C694.6 580.0 699.3 585.3 704.8 589.2M1141.0 555.8C1134.4 554.6 1127.5 554.0 1120.9 553.5M749.2 331.7C743.9 335.8 737.1 338.3 733.3 344.3M566.9 690.2C571.5 695.4 571.4 703.1 576.0 708.4M1059.4 464.6C1055.5 470.2 1048.9 473.2 1044.6 478.4M1031.1 756.9C1037.3 759.4 1043.7 762.3 1050.7 761.9M847.7 611.3C841.1 608.4 836.5 603.3 833.5 596.9M664.2 559.3C658.6 564.0 650.6 561.0 644.8 565.0M532.5 349.3C538.2 352.8 544.2 356.1 550.3 358.7M939.9 722.8C946.6 722.0 953.3 725.6 960.1 723.5M1123.8 439.3C1117.1 441.2 1110.2 440.6 1103.6 438.9M935.2 419.1C936.9 425.7 937.0 432.5 935.9 439.2M997.9 300.4C1004.5 302.5 1009.8 306.8 1014.8 311.3M1178.1 564.3C1182.2 570.0 1182.5 577.0 1183.9 583.5M831.8 395.7C830.5 402.4 834.2 409.1 832.9 415.8M722.2 679.6C715.4 681.1 711.6 688.3 704.7 689.5M396.1 753.8C402.3 756.2 408.0 760.1 414.1 762.6M771.6 555.3C777.1 559.6 777.6 567.4 782.6 572.1M638.5 697.9C636.7 691.5 636.4 684.6 635.0 678.2M780.7 325.6C775.1 321.2 773.0 314.6 771.3 308.0M917.7 673.8C921.4 679.9 929.3 680.5 934.1 685.1M772.1 528.1C766.1 525.4 758.7 526.7 752.9 523.0M905.2 369.1C901.9 363.4 899.1 357.2 895.7 351.6M391.3 767.9C391.0 761.1 385.6 755.6 385.5 748.8M939.4 395.3C945.0 391.0 951.9 390.4 958.6 389.9M1003.8 588.5C1008.9 592.8 1015.9 594.2 1021.3 598.0M914.0 587.7C911.7 581.4 911.8 574.6 910.8 568.1M1192.4 531.2C1194.9 537.3 1196.3 544.0 1200.1 549.6M467.1 755.5C473.6 755.4 480.4 755.7 486.9 755.5M985.8 755.9C988.7 762.0 996.3 764.3 999.0 770.7M560.1 283.0C553.8 285.2 546.9 285.0 540.5 286.1M795.0 570.5C794.7 563.2 800.7 558.5 803.0 552.3M849.3 427.4C855.7 425.5 862.4 425.0 869.0 425.1M550.8 371.2C553.1 365.1 557.2 359.6 560.1 353.7M388.4 729.2C386.8 735.6 387.3 742.5 385.5 748.8M914.0 587.7C908.0 590.9 903.1 595.5 899.2 600.9M871.1 376.8C870.0 383.9 874.7 389.5 876.6 395.7M846.9 565.8C852.3 569.7 858.8 571.8 864.5 574.9M1072.6 506.7C1066.0 507.8 1059.6 504.4 1053.0 504.4M950.5 741.3C945.0 737.4 938.5 735.6 932.0 734.6M858.3 583.1C852.4 580.4 845.5 579.8 839.6 576.8M995.8 721.3C995.6 714.2 991.5 708.7 987.1 703.7M414.6 216.4C417.7 222.1 423.5 226.2 426.0 232.4M747.6 599.5C752.5 594.9 755.5 588.8 757.9 582.7M907.9 436.4C902.0 433.6 897.7 428.0 891.6 425.3M752.4 430.0C753.6 423.5 755.9 417.2 760.0 411.9M748.1 474.7C745.2 468.4 745.2 461.7 746.2 455.1M1075.8 791.7C1081.9 789.3 1087.8 785.8 1094.6 786.1M409.9 785.0C403.4 786.6 396.8 787.8 390.3 785.7M986.3 567.0C989.7 572.7 996.7 575.2 999.8 581.2M1053.0 504.4C1046.6 504.7 1039.9 506.5 1033.4 504.8M780.5 399.5C783.2 393.6 788.2 388.8 789.7 382.3M780.5 644.6C785.8 648.3 791.5 651.7 795.7 656.8M926.4 393.2C921.1 396.9 915.2 400.0 909.4 402.9M1102.3 587.7C1108.0 583.7 1115.6 587.4 1121.4 583.5M849.3 427.4C849.5 420.9 848.9 414.3 849.1 407.9M832.6 335.6C827.7 331.0 826.6 324.0 823.1 318.6M871.1 376.8C864.8 378.2 859.0 382.1 852.4 382.3M894.9 675.6C900.5 672.0 906.8 670.2 913.4 669.7M912.8 326.0C912.0 332.5 909.4 338.6 907.3 344.7M846.9 565.8C840.5 565.6 834.2 562.9 827.6 563.9M669.7 516.6C664.6 520.5 660.6 526.1 654.6 528.9M1070.5 238.8C1076.5 236.0 1083.4 237.0 1089.6 235.2M736.0 381.0C729.3 381.6 724.5 387.4 717.9 388.2M977.5 679.3C971.5 676.8 965.4 674.2 961.4 668.6M939.9 471.9C937.8 478.4 939.9 484.9 941.3 491.2M890.2 444.6C889.9 438.2 889.5 431.6 891.6 425.3M780.5 399.5C774.2 397.0 771.2 390.4 766.1 386.6M1016.5 383.9C1017.4 377.1 1013.4 371.4 1011.4 365.3M556.4 344.0C555.2 337.7 555.6 331.1 556.2 324.8M859.1 492.0C862.1 497.9 867.2 502.2 872.3 506.0M957.7 558.5C959.6 551.8 965.0 547.7 970.4 544.0M837.6 326.8C843.9 327.3 850.5 326.1 856.8 326.8M939.9 255.6C934.6 259.0 928.1 260.7 923.0 264.6M844.0 653.9C837.7 654.5 831.5 656.9 825.2 657.6M895.2 293.2C901.4 290.5 902.8 282.6 908.8 279.7M889.1 513.5C892.9 508.4 897.4 503.5 898.8 497.0M468.9 737.8C467.6 731.2 463.8 725.9 459.1 721.3M1059.4 464.6C1064.5 469.4 1063.6 476.8 1066.6 482.4M893.0 635.7C888.4 631.0 882.6 628.1 876.4 626.3M1002.7 473.9C999.0 468.5 993.2 465.3 987.6 462.2M973.4 377.4C978.4 372.7 979.7 366.1 981.0 359.8M940.7 518.2C936.2 513.5 933.5 507.5 931.7 501.4M1155.9 428.5C1155.5 435.0 1151.9 440.7 1149.5 446.5M609.3 826.2C603.0 828.4 596.5 827.6 590.3 825.6M1001.4 382.7C1000.6 389.0 1000.8 395.4 1001.3 401.7M528.5 148.2C524.7 153.3 520.3 158.0 515.0 161.6M518.7 685.1C513.3 689.3 514.4 697.2 509.7 701.8M1062.8 297.6C1058.8 302.9 1061.2 310.3 1057.5 315.8M707.6 568.5C713.3 571.3 719.3 573.9 723.4 579.0M440.3 744.5C434.0 744.3 427.7 746.0 421.5 747.0M942.0 623.7C936.0 621.3 929.6 620.4 923.2 621.0M936.5 370.0C930.2 371.0 925.3 376.1 918.8 376.6M827.3 512.7C825.6 506.2 831.1 500.5 830.0 494.0M535.2 370.0C541.8 368.4 544.6 361.4 550.3 358.7M925.4 607.5C930.8 603.4 938.1 606.3 943.6 602.9M469.5 774.2C471.3 767.7 465.7 762.0 467.1 755.5M396.1 801.1C393.1 806.5 389.9 812.1 386.0 817.0M757.1 478.0C758.7 484.5 763.2 489.1 768.0 493.3M1021.3 488.8C1015.1 488.3 1008.9 486.6 1002.8 485.6M1059.4 464.6C1056.0 469.9 1056.8 477.1 1052.4 482.0M733.6 545.8C729.6 550.8 726.5 556.4 726.0 562.9M512.1 689.1C506.2 686.8 499.7 687.6 493.6 686.6M836.6 631.9C830.9 628.7 828.7 622.2 824.2 617.9M912.9 454.5C911.4 448.5 908.3 442.8 907.9 436.4M734.6 396.6C729.3 393.4 723.1 391.7 717.9 388.2M783.1 485.2C778.7 480.6 773.3 477.2 767.2 475.5M622.6 339.1C618.2 334.5 617.4 327.6 613.0 323.0M1019.1 537.1C1016.4 543.3 1009.6 545.2 1005.0 549.3M827.3 512.7C825.5 518.6 823.6 524.7 820.5 530.0M736.0 381.0C737.3 374.5 741.9 370.0 746.0 365.3M843.8 452.8C837.7 453.5 831.4 455.0 825.2 454.9M671.3 554.9C673.7 560.6 676.4 566.4 680.6 571.0M805.0 608.8C809.7 604.3 811.9 598.3 813.2 592.1M1016.5 383.9C1012.1 379.4 1005.9 377.3 1000.4 374.5M940.7 518.2C945.1 522.7 949.4 527.4 955.5 529.5M770.9 431.9C764.8 431.7 758.5 431.1 752.4 430.0M1002.7 473.9C1006.4 468.6 1004.1 461.4 1007.7 456.1M734.6 396.6C737.0 402.4 734.1 409.2 737.0 415.0M563.0 805.6C567.0 810.7 566.6 817.4 568.8 823.1M930.7 304.2C933.6 309.7 938.5 313.8 942.5 318.4M643.2 352.4C637.1 353.0 631.3 355.6 625.2 356.6M780.5 399.5C780.7 406.0 778.8 411.9 775.3 417.3M747.3 578.9C748.3 572.8 749.7 566.6 747.9 560.4M998.5 566.6C999.0 560.3 1001.0 554.3 1005.0 549.3M850.9 740.6C854.4 746.0 861.0 747.9 865.2 752.3M738.1 351.2C743.5 348.4 749.4 346.3 755.0 343.8M744.4 441.4C747.4 435.6 746.8 429.2 746.9 423.1M907.9 436.4C914.2 437.6 919.9 433.0 926.2 434.0M1157.3 369.3C1153.4 374.5 1155.3 381.5 1152.4 387.0M1033.4 504.8C1034.0 498.7 1035.7 492.5 1034.2 486.4M827.9 610.5C823.3 605.6 824.8 598.6 822.4 593.0M839.5 550.0C834.6 553.7 831.4 559.2 827.6 563.9M710.5 490.1C704.3 491.1 699.6 495.8 694.0 498.1M588.4 640.9C593.2 644.8 596.5 650.1 599.7 655.3M926.2 507.1C932.0 509.5 936.5 513.7 940.7 518.2M752.9 539.4C748.4 543.4 743.2 547.0 739.2 551.5M847.7 611.3C849.8 605.0 856.3 602.5 859.9 597.6M816.5 335.6C820.4 330.7 819.2 323.6 823.1 318.6M1023.1 316.0C1020.9 310.4 1019.9 304.2 1016.4 299.1M995.8 721.3C1000.2 725.4 1004.0 730.5 1009.1 733.8M1123.8 532.4C1129.9 531.5 1136.0 530.0 1140.7 525.7M396.9 688.4C393.0 693.7 395.3 700.5 393.2 706.2M1123.2 421.2C1121.6 427.2 1124.6 433.3 1123.8 439.3M958.8 300.0C958.4 293.7 952.9 289.3 951.9 283.2M947.1 375.9C952.3 379.4 953.2 386.6 958.6 389.9M411.2 725.6C414.8 730.4 420.2 734.0 422.3 739.9M927.2 634.2C932.4 631.1 937.6 627.8 942.0 623.7M1060.5 414.1C1066.5 414.6 1072.5 412.7 1078.5 412.5M1001.9 615.8C1001.5 609.6 996.6 604.8 995.8 598.8M983.4 388.2C988.5 392.4 988.2 399.3 991.1 404.5M859.1 492.0C857.5 498.0 858.8 504.1 859.3 510.1M941.5 445.1C935.5 444.9 929.3 445.7 923.6 442.8M1069.5 573.2C1064.0 575.6 1058.0 577.1 1052.2 578.5M926.5 283.3C920.6 282.1 914.8 279.9 908.8 279.7M589.5 320.4C590.2 326.5 593.8 331.7 595.6 337.4M849.1 407.9C843.2 409.5 837.5 411.6 832.9 415.8M995.8 598.8C996.5 592.8 996.8 586.6 999.8 581.2M886.7 479.2C885.1 473.1 881.1 468.4 876.7 464.2M1094.4 404.1C1089.0 406.7 1084.7 411.5 1078.5 412.5M391.3 767.9C391.9 773.8 388.4 779.7 390.3 785.7M467.1 755.5C466.0 749.5 469.4 743.7 468.9 737.8M767.2 475.5C767.4 481.3 769.2 487.3 768.0 493.3M813.3 600.3C817.7 604.2 822.1 608.4 827.9 610.5M933.6 321.7C935.3 315.5 932.9 309.8 930.7 304.2M821.5 349.4C825.4 345.1 828.0 339.4 832.6 335.6M795.0 570.5C801.0 568.6 805.4 564.4 809.1 559.7M560.1 353.7C563.0 359.0 566.8 363.7 572.2 366.6M985.5 194.1C980.0 197.3 973.9 196.8 968.0 196.4M775.7 348.6C775.6 354.4 775.4 360.5 777.7 366.1M941.3 491.2C946.4 487.9 950.0 483.1 952.4 477.6M714.0 520.6C713.6 514.3 707.0 510.9 706.3 504.8M736.0 381.0C740.7 384.4 745.4 388.2 751.3 389.6M914.0 587.7C914.5 581.7 918.1 576.7 920.1 571.2M696.2 712.7C695.0 706.6 698.6 701.1 698.9 695.3M1067.9 330.0C1064.1 325.6 1059.2 321.8 1057.5 315.8M839.5 550.0C843.4 554.5 846.4 559.7 846.9 565.8M1182.6 484.0C1188.2 481.4 1194.3 483.1 1200.1 482.8M859.1 492.0C855.1 487.7 852.9 482.1 849.9 477.1M386.0 817.0C388.0 822.4 388.5 828.4 389.5 834.1M857.6 344.1C863.5 344.0 869.0 346.7 874.6 348.2M409.9 785.0C416.0 784.2 421.0 788.6 426.8 789.2M1217.3 379.7C1212.7 375.8 1207.4 373.2 1201.4 372.5M884.0 496.8C888.0 501.6 885.8 508.5 889.1 513.5M367.2 268.7C369.3 263.1 374.4 259.4 377.0 254.2M1134.3 264.8C1132.4 270.4 1134.4 276.5 1133.2 282.2M935.2 419.1C930.8 423.2 928.7 428.8 926.2 434.0M846.2 782.6C850.3 787.2 850.3 793.5 852.0 799.0M756.4 441.0C752.0 445.0 748.2 449.5 746.2 455.1M941.5 445.1C944.0 439.9 945.4 434.1 947.1 428.6M783.1 485.2C784.4 479.5 783.6 473.6 783.1 467.9M1030.0 350.3C1034.0 345.4 1040.1 344.5 1045.6 342.9M1058.3 354.6C1052.9 352.1 1050.5 346.0 1045.6 342.9M801.9 338.2C805.3 333.6 809.0 329.0 813.3 325.2M569.1 327.0C573.6 330.4 579.4 332.6 582.5 337.8M698.9 695.3C693.1 695.8 687.4 694.1 681.7 694.2M1141.3 323.9C1135.7 322.7 1129.6 322.6 1124.6 319.5M414.1 762.6C418.4 758.3 418.0 751.7 421.5 747.0M891.6 425.3C886.6 428.0 882.1 432.0 876.4 433.5M955.3 357.7C956.0 363.4 957.0 369.3 955.0 374.9M610.4 271.3C604.8 272.5 599.3 274.6 594.1 276.9M747.4 511.7C741.9 508.8 740.3 502.6 736.7 498.2M1123.8 532.4C1118.4 529.8 1112.6 529.6 1106.8 529.6M1066.3 768.9C1061.2 766.5 1055.9 764.0 1050.7 761.9M831.1 578.1C828.2 583.0 823.5 587.1 822.4 593.0M654.6 528.9C654.4 522.9 657.3 517.7 659.6 512.5M997.9 500.4C1004.0 500.9 1008.3 505.3 1013.3 507.9M777.7 507.4C774.3 502.9 770.4 498.5 768.0 493.3M1141.0 555.8C1144.5 551.1 1148.8 547.2 1154.5 545.3M1192.4 531.2C1191.5 525.4 1194.1 519.9 1194.8 514.3M863.6 467.0C860.0 471.7 854.7 474.2 849.9 477.1M914.5 198.7C919.2 202.8 925.9 200.6 930.9 203.4M987.1 703.7C983.9 699.0 978.2 696.3 975.7 691.0M837.6 326.8C842.2 323.5 848.2 322.4 852.9 319.3M814.4 581.6C820.4 582.9 825.9 581.2 831.1 578.1M604.0 634.2C598.5 635.5 593.6 638.7 588.4 640.9M703.1 552.3C700.4 557.6 693.9 559.1 690.4 563.6M889.1 513.5C883.5 514.0 877.7 515.5 872.1 513.9M901.5 387.8C904.2 392.7 908.1 397.2 909.4 402.9M870.5 277.6C873.3 282.7 873.4 288.6 874.0 294.2M572.2 366.6C574.9 361.6 578.9 357.3 580.8 351.9M525.9 402.0C527.8 396.2 534.8 394.7 537.3 389.4M780.7 325.6C785.6 322.7 792.1 323.4 796.5 319.5M736.0 381.0C734.1 375.7 731.7 370.4 730.6 364.9M958.8 300.0C960.2 294.5 960.2 288.7 961.4 283.2M832.6 335.6C836.0 340.3 839.8 344.7 845.4 346.9M936.5 370.0C939.8 365.3 941.7 359.9 943.6 354.6M933.6 321.7C930.5 316.9 925.2 314.0 921.6 309.7M970.4 544.0C975.4 540.9 977.0 534.8 981.1 531.0M938.0 460.5C941.5 456.1 947.5 454.0 950.0 448.6M726.4 484.8C731.3 488.1 734.7 492.8 736.7 498.2M902.3 582.6C906.2 578.5 907.5 572.6 910.8 568.1M893.0 635.7C898.2 637.7 903.0 641.3 908.9 641.3M1001.4 428.2C995.3 427.6 991.7 422.4 987.0 419.5M836.6 631.9C840.6 627.5 842.4 622.1 842.4 616.2M876.6 395.7C882.3 395.4 887.6 393.1 892.8 391.1M846.7 279.8C842.0 283.1 836.0 283.5 831.1 286.1M852.4 382.3C852.1 376.6 853.1 371.0 856.0 366.0M1123.8 439.3C1126.7 444.4 1132.3 446.7 1136.3 450.5M1004.8 285.2C1000.4 289.2 999.8 295.2 997.9 300.4M726.4 484.8C720.7 485.2 716.0 489.3 710.5 490.1M814.4 581.6C809.2 579.2 803.8 577.4 798.0 578.3M813.8 522.6C818.1 519.1 823.8 517.2 827.3 512.7M427.3 319.5C425.9 314.1 426.2 308.4 426.0 302.9M1106.8 529.6C1111.7 526.9 1114.5 521.4 1119.5 518.8M669.7 516.6C668.0 511.2 665.5 506.1 661.0 502.4M602.7 360.8C602.4 366.3 604.1 372.1 601.6 377.5M658.9 494.8C664.4 493.8 670.1 493.6 675.5 495.8M1042.7 597.6C1040.6 603.2 1036.1 606.7 1031.3 609.7M1002.7 473.9C1005.4 468.7 1012.2 467.8 1015.3 463.0M1096.2 298.9C1102.0 298.8 1107.2 301.0 1112.1 303.8M1023.9 581.6C1025.4 587.4 1020.7 592.4 1021.3 598.0M938.9 532.8C941.8 538.1 940.4 543.8 940.1 549.3M691.7 512.7C695.6 508.3 702.5 509.2 706.3 504.8M683.0 548.8C686.1 553.4 688.9 558.3 690.4 563.6M1126.2 489.6C1122.7 484.9 1117.7 482.2 1112.1 480.8M710.0 623.0C709.4 617.0 714.3 612.7 715.0 607.2M845.6 537.1C849.4 541.2 851.0 546.8 853.9 551.4M1141.3 323.9C1140.4 329.9 1135.1 333.1 1132.2 337.8M638.5 621.4C644.3 620.7 649.1 617.7 653.0 613.5M724.0 413.3C721.9 418.4 718.3 422.7 715.0 427.0M752.9 539.4C751.8 534.0 752.8 528.4 752.9 523.0M1102.3 587.7C1107.7 585.7 1111.2 581.1 1114.8 577.0M393.2 706.2C394.5 711.9 389.7 716.8 390.5 722.4M843.7 489.6C841.8 484.2 838.6 479.7 833.9 476.4M913.4 532.8C917.2 528.4 916.5 522.2 918.7 517.3M736.0 381.0C737.2 386.5 742.0 390.2 743.9 395.3M541.8 692.4C544.3 697.2 545.3 702.9 548.7 707.3M396.1 801.1C392.3 796.7 393.3 790.4 390.3 785.7M1022.8 660.9C1022.0 655.2 1024.5 650.0 1026.6 645.0M793.4 394.3C790.7 399.0 790.7 404.9 787.8 409.6M1049.9 832.1C1050.5 826.6 1053.1 821.6 1055.2 816.6M827.3 512.7C832.3 509.3 838.2 511.6 843.5 510.3M862.3 526.1C861.7 520.7 862.4 515.0 859.3 510.1M843.8 452.8C844.3 447.4 846.2 442.2 848.5 437.3M1059.7 542.9C1059.8 548.6 1063.7 553.0 1065.5 558.1M1134.9 358.0C1137.1 362.9 1138.8 368.2 1141.3 372.9M761.9 466.2C758.3 470.6 753.2 472.8 748.1 474.7M761.7 691.0C766.0 694.3 771.8 694.9 776.5 697.5M738.1 351.2C738.6 357.0 745.2 359.6 746.0 365.3M847.5 631.6C844.0 627.1 844.1 621.2 842.4 616.2M862.0 621.1C863.1 626.5 862.3 631.9 860.9 637.2M706.6 438.1C712.1 437.7 717.3 439.6 722.5 441.1M1053.0 504.4C1052.9 509.8 1052.9 515.4 1049.9 520.2M775.3 417.3C769.6 417.2 765.4 412.7 760.0 411.9M715.0 369.1C720.7 369.6 725.5 366.3 730.6 364.9M571.7 387.3C567.4 391.1 561.5 390.9 556.4 392.4M431.1 336.5C425.4 337.2 420.6 333.8 415.4 332.6M983.4 388.2C978.1 387.5 972.7 386.8 967.3 386.8M657.5 648.7C654.6 653.6 656.7 659.5 655.2 664.6M930.7 304.2C925.4 303.5 920.4 300.4 914.8 301.4M1001.4 511.1C997.9 515.9 992.2 516.7 987.3 518.8M964.8 520.2C968.2 524.7 967.8 530.5 969.6 535.5M809.4 645.4C807.8 639.9 804.0 635.9 799.3 633.0M783.1 467.9C785.0 473.0 788.8 477.0 792.3 481.0M704.7 381.4C704.0 386.8 706.3 392.1 705.8 397.4M846.9 565.8C851.0 561.9 849.9 555.3 853.9 551.4M790.3 505.9C794.3 502.5 798.0 498.5 800.3 493.5M586.0 358.4C581.6 361.4 577.7 365.5 572.2 366.6M970.7 279.4C972.0 284.8 974.8 289.5 979.4 292.8M795.3 442.2C801.1 442.2 805.1 437.8 809.7 435.3M939.4 395.3C940.4 400.5 941.2 405.9 941.0 411.2M898.1 336.1C893.6 339.3 887.5 338.2 883.0 341.3M913.4 669.7C908.2 669.8 902.7 669.8 897.5 671.2M727.2 500.8C725.8 495.6 725.4 490.2 726.4 484.8M947.6 697.9C946.8 703.4 941.5 706.7 940.2 712.0M698.9 695.3C699.7 689.8 696.0 685.0 695.6 679.7M851.7 398.3C852.1 393.0 852.9 387.6 852.4 382.3M778.9 542.6C777.1 537.6 773.5 533.3 772.1 528.1M1048.0 251.1C1042.8 252.4 1037.4 252.7 1032.1 251.5M1034.0 569.3C1032.1 574.6 1028.1 578.2 1023.9 581.6M1115.8 463.8C1121.4 463.8 1126.1 466.8 1130.7 469.5M1211.2 152.5C1211.5 157.9 1210.6 163.2 1208.8 168.2M894.7 402.2C895.0 396.5 900.2 393.0 901.5 387.8M852.5 300.7C847.0 301.8 842.0 298.9 836.9 298.0M926.2 434.0C924.5 429.0 921.7 424.2 921.8 418.7M963.4 374.8C959.5 379.1 961.2 385.3 958.6 389.9M843.5 510.3C848.8 512.3 854.1 508.3 859.3 510.1M521.4 793.4C525.1 789.3 531.5 789.9 535.4 786.1M782.3 527.7C783.8 533.1 788.8 536.1 791.9 540.2M890.1 607.9C886.3 603.6 881.0 602.3 875.6 601.8M911.6 391.1C916.9 390.2 921.7 387.8 925.8 384.3M730.3 423.2C725.5 425.4 720.4 427.0 715.0 427.0M778.9 542.6C775.0 538.6 769.2 538.5 764.5 536.3M1018.3 399.9C1020.6 395.3 1021.7 389.9 1025.5 386.0M734.6 396.6C737.1 391.6 733.6 386.0 736.0 381.0M842.4 616.2C838.5 612.2 832.2 613.6 827.9 610.5M862.8 610.9C867.9 609.1 870.4 603.5 875.6 601.8M1202.2 430.3C1202.0 435.8 1199.7 440.6 1196.1 444.7M859.1 492.0C853.8 492.9 848.8 490.6 843.7 489.6M657.5 680.0C656.1 675.0 656.8 669.5 655.2 664.6M765.3 345.8C760.9 349.2 758.7 354.0 757.2 359.2M819.4 650.9C824.6 648.9 829.9 649.5 835.0 651.3M859.1 492.0C864.3 493.0 868.4 496.9 873.5 498.1M933.3 331.0C936.3 326.8 938.0 321.5 942.5 318.4M905.2 369.1C907.4 373.8 911.3 377.8 911.7 383.3M696.2 712.7C694.4 718.0 698.8 722.9 697.8 728.1M997.9 500.4C1000.0 495.7 1001.1 490.5 1002.8 485.6M871.8 557.7C876.8 555.7 880.8 552.2 883.9 547.9M844.0 653.9C843.8 648.4 841.1 643.9 838.0 639.6M1007.7 753.4C1008.7 758.4 1011.2 763.3 1010.9 768.6M902.6 265.5C902.4 271.2 905.3 275.7 908.8 279.7M713.6 532.2C708.1 531.6 703.6 529.0 700.0 524.8M1031.3 609.7C1029.7 604.4 1024.3 602.1 1021.3 598.0M905.2 369.1C900.1 367.8 896.2 364.1 891.9 361.4M614.0 588.7C618.8 586.8 622.8 583.2 627.0 580.4M554.5 721.0C549.6 719.2 545.5 715.8 541.3 713.0M746.0 365.3C741.0 363.4 735.7 366.1 730.6 364.9M983.1 607.5C988.1 605.8 992.1 602.3 995.8 598.8M910.5 611.6C915.7 611.3 920.2 608.0 925.4 607.5M947.1 428.6C943.8 432.6 940.4 436.6 935.9 439.2M838.5 431.9C837.2 437.3 841.5 441.9 840.9 447.1M986.6 290.1C991.8 291.9 995.3 295.7 997.9 300.4M1001.4 511.1C1006.0 513.4 1010.0 516.7 1014.3 519.5M733.7 513.3C736.6 508.7 734.1 502.9 736.7 498.2M717.9 388.2C712.4 389.3 710.9 395.8 705.8 397.4M598.7 592.0C595.9 587.5 597.4 581.8 595.0 577.1M770.9 431.9C773.7 427.5 774.8 422.4 775.3 417.3M770.9 621.1C773.0 616.4 773.9 611.2 776.2 606.7M905.2 329.6C905.2 334.7 906.6 339.7 907.3 344.7M722.2 679.6C727.6 678.7 730.2 673.3 734.9 671.2M935.2 419.1C940.2 420.8 944.4 424.0 947.1 428.6M458.1 806.9C460.1 802.2 465.2 799.5 466.8 794.5M1028.4 549.2C1025.5 545.1 1020.8 542.2 1019.1 537.1M952.4 663.1C947.5 661.8 942.4 660.5 938.3 657.2M772.1 528.1C776.1 524.6 776.8 519.1 779.7 514.9M949.8 537.6C946.2 541.1 943.6 545.7 940.1 549.3M849.9 477.1C849.2 471.7 844.9 468.3 842.3 464.0M987.0 419.5C989.6 423.8 991.2 428.8 993.8 433.1M902.3 582.6C899.8 578.2 898.7 573.1 897.3 568.3M954.2 717.7C948.8 717.5 944.3 720.0 939.9 722.8M1001.4 382.7C1006.3 384.3 1011.4 384.7 1016.5 383.9M780.5 644.6C785.4 644.1 790.5 643.3 795.6 643.7M751.3 389.6C756.3 389.3 761.1 387.1 766.1 386.6M735.5 465.8C737.6 460.9 741.7 457.6 746.2 455.1M862.8 610.9C857.9 613.3 852.8 612.7 847.7 611.3M580.5 287.4C578.9 282.4 574.3 279.4 571.5 275.3M755.6 508.3C760.6 507.3 764.5 503.6 768.9 501.4M676.9 759.4C674.9 754.7 672.4 750.2 667.9 747.4M911.6 391.1C916.3 393.2 921.8 390.7 926.4 393.2M726.2 462.2C729.1 466.2 730.9 471.1 734.9 474.3M889.6 159.7C886.6 155.4 885.3 150.5 885.4 145.3M823.1 625.6C827.2 628.5 832.3 629.5 836.6 631.9M1028.4 549.2C1033.3 548.3 1038.4 548.4 1043.1 546.4M825.2 454.9C822.1 451.1 820.4 445.9 816.1 443.0M752.9 539.4C755.5 544.2 762.0 544.0 764.8 548.4M884.0 496.8C880.0 499.6 876.4 503.3 872.3 506.0M844.1 337.7C849.0 339.0 853.9 340.5 857.6 344.1M792.3 481.0C793.1 486.3 797.0 489.9 800.3 493.5M391.3 767.9C391.5 762.8 393.6 758.1 396.1 753.8M766.9 405.8C772.0 405.0 776.3 402.3 780.5 399.5M417.0 244.3C420.0 240.4 423.7 236.8 426.0 232.4M554.5 721.0C552.9 716.3 552.3 711.1 548.7 707.3M823.1 318.6C817.9 320.1 813.0 319.0 808.4 316.6M1107.1 544.5C1108.8 539.6 1107.0 534.5 1106.8 529.6M717.9 388.2C712.8 387.4 708.5 384.8 704.7 381.4M580.5 684.0C576.2 686.5 571.4 688.3 566.9 690.2M939.4 184.2C940.1 179.2 942.9 174.9 945.2 170.6M887.7 245.2C890.5 249.7 895.7 251.1 899.5 254.2M912.9 454.5C908.3 456.2 904.7 460.3 899.4 460.6M816.8 553.8C821.0 556.5 823.5 561.1 827.6 563.9M506.8 173.9C509.6 169.9 511.9 165.4 515.0 161.6M801.9 338.2C806.4 335.8 811.9 337.5 816.5 335.6M875.8 409.1C880.9 408.1 885.7 410.1 890.5 411.0M582.3 394.5C578.0 396.8 574.7 401.1 569.6 402.0M1107.1 544.5C1104.8 549.0 1101.4 552.6 1097.5 555.8M691.7 512.7C690.3 507.5 692.6 502.8 694.0 498.1M899.4 460.6C894.3 461.3 891.1 466.0 886.2 467.0M866.6 796.9C861.5 796.0 856.9 799.1 852.0 799.0M986.3 567.0C990.0 563.8 992.2 559.1 995.6 555.6M798.7 380.6C795.1 384.4 796.1 390.1 793.4 394.3M778.9 542.6C776.2 546.6 773.4 550.8 771.6 555.3M894.7 402.2C899.5 403.6 904.6 401.2 909.4 402.9M997.9 300.4C998.3 305.4 1000.0 310.1 1002.1 314.5M691.7 512.7C694.1 517.0 696.0 521.7 700.0 524.8M781.8 447.9C786.1 445.7 791.5 445.7 795.3 442.2M940.7 518.2C941.1 523.2 939.8 528.0 938.9 532.8M875.6 601.8C880.2 600.4 885.3 600.3 889.8 598.4M849.9 265.5C851.0 270.7 848.2 275.2 846.7 279.8M998.5 566.6C997.4 571.6 999.6 576.4 999.8 581.2M831.1 578.1C831.1 573.2 827.9 568.8 827.6 563.9M960.3 422.4C956.6 425.9 952.0 427.8 947.1 428.6M816.1 443.0C819.1 438.9 820.0 434.0 820.5 429.1M870.5 277.6C866.2 275.4 861.0 274.9 857.4 271.3M862.6 481.6C864.0 476.9 862.7 471.8 863.6 467.0M764.3 371.7C769.5 371.6 773.4 368.2 777.7 366.1M987.3 518.8C992.0 519.7 996.5 522.0 1001.2 522.9M1001.4 428.2C1000.0 423.6 997.9 419.1 998.2 414.1M628.7 754.8C628.9 749.8 625.9 745.5 624.4 741.0M871.1 376.8C874.8 373.8 878.4 370.4 882.4 367.8M872.1 513.9C876.8 515.6 879.9 519.6 883.4 523.0M802.2 409.0C797.4 408.0 792.6 411.2 787.8 409.6M811.7 676.3C816.0 674.1 821.3 674.5 825.5 671.9M758.3 561.0C763.4 560.9 767.9 558.7 771.6 555.3M876.6 395.7C872.1 394.0 869.2 389.3 864.1 388.5M862.3 526.1C867.1 526.6 871.4 529.5 876.1 530.4M974.4 725.3C969.5 726.0 964.6 725.8 960.1 723.5M999.0 358.0C1004.0 358.9 1007.0 363.5 1011.4 365.3M1034.0 569.3C1038.0 566.3 1043.7 568.2 1047.7 565.1M890.5 411.0C889.9 415.8 891.6 420.6 891.6 425.3M875.8 409.1C871.1 408.0 866.2 408.1 861.5 408.2M773.6 445.1C777.9 443.0 783.1 443.1 787.3 440.7M578.3 268.7C583.1 267.4 587.1 264.6 590.8 261.5M825.5 671.9C824.6 667.2 825.0 662.3 825.2 657.6M1086.4 525.3C1085.5 530.0 1083.4 534.5 1082.2 539.0M879.5 661.6C884.5 662.0 888.8 659.2 893.5 658.5M701.0 598.8C697.2 601.9 697.0 607.7 692.8 610.5M877.1 331.7C878.6 326.7 882.6 323.8 886.4 320.9M997.4 778.4C1002.2 779.3 1006.3 782.0 1010.4 784.3M1126.7 483.2C1127.9 478.6 1129.8 474.1 1130.7 469.5M802.0 351.9C807.0 352.3 811.2 354.7 815.0 357.7M845.6 537.1C844.7 541.9 840.9 545.4 839.5 550.0M759.8 401.0C755.4 398.4 754.3 393.2 751.3 389.6M472.6 427.0C476.7 424.5 481.7 423.9 485.6 421.2M1052.2 578.5C1049.4 574.6 1049.6 569.4 1047.7 565.1M1018.3 399.9C1023.1 399.2 1027.8 400.9 1032.5 401.0M777.5 338.7C772.8 339.8 768.7 342.3 765.3 345.8M694.0 498.1C690.8 494.5 685.7 493.5 682.2 490.3M973.8 255.6C969.4 253.2 964.3 255.5 959.8 253.8M845.4 346.9C847.4 351.1 849.2 355.5 851.2 359.7M712.4 546.9C708.8 543.9 705.7 540.1 701.0 538.5M783.1 467.9C780.9 463.8 778.7 459.5 776.3 455.5M855.7 335.2C858.8 331.7 862.2 328.4 866.1 325.7M727.2 500.8C730.8 504.2 732.4 508.7 733.7 513.3M783.9 551.8C787.9 548.9 789.3 544.1 791.9 540.2M1001.3 401.7C999.4 397.4 995.8 394.0 993.7 389.9M588.9 306.4C588.4 311.1 588.5 315.8 589.5 320.4M652.8 596.9C649.1 594.0 646.5 589.9 642.8 587.0M1028.4 549.2C1028.9 544.1 1026.4 539.9 1023.9 535.9M848.5 437.3C852.9 435.5 857.7 435.0 862.4 435.2M1161.9 269.6C1157.4 270.7 1152.8 271.5 1148.4 273.1M1204.0 296.3C1199.8 298.1 1195.2 299.5 1190.8 300.7M809.4 645.4C804.9 644.6 800.1 644.5 795.6 643.7M706.3 504.8C703.0 501.1 698.8 499.0 694.0 498.1M547.3 345.1C549.4 349.4 550.6 354.0 550.3 358.7M883.8 256.5C879.7 258.6 876.3 262.3 871.6 263.3M997.4 778.4C1002.0 777.9 1006.4 775.6 1011.2 776.3M638.5 621.4C635.3 625.0 632.9 629.1 632.1 633.8M851.7 398.3C854.6 401.8 858.2 404.9 861.5 408.2M942.6 649.8C938.8 646.9 934.3 645.5 929.7 644.7M816.8 553.8C812.1 554.2 807.5 553.1 803.0 552.3M893.0 635.7C893.6 640.2 893.9 644.9 893.3 649.5M1095.7 378.5C1091.1 378.6 1086.5 377.0 1082.0 376.6M1004.8 285.2C1009.0 287.3 1013.9 287.2 1018.1 289.2M1107.1 544.5C1102.3 544.4 1098.3 547.4 1093.8 548.4M952.4 182.4C949.4 178.9 948.8 173.7 945.2 170.6M973.0 750.6C977.9 750.8 981.1 755.3 985.8 755.9M747.4 511.7C742.6 510.4 738.4 514.1 733.7 513.3M795.3 442.2C798.6 445.4 802.1 448.5 806.4 450.3M560.1 283.0C564.8 281.8 567.6 277.7 571.5 275.3M494.4 750.2C497.5 746.6 497.9 741.7 499.4 737.4M925.4 607.5C922.7 611.6 922.6 616.4 923.2 621.0M801.9 338.2C804.0 342.7 801.6 347.4 802.0 351.9M1036.4 394.5C1031.8 392.9 1028.6 389.4 1025.5 386.0M934.1 612.8C935.9 608.2 941.3 607.0 943.6 602.9M837.7 428.6C834.1 425.1 834.7 419.9 832.9 415.8M471.9 716.3C467.8 718.4 462.9 718.5 459.1 721.3M934.1 612.8C930.4 615.4 926.3 617.6 923.2 621.0M959.8 344.8C959.9 349.6 955.7 353.1 955.3 357.7M1011.4 365.3C1006.9 364.5 1002.3 365.8 997.8 366.0M871.1 376.8C868.1 380.2 865.5 384.1 864.1 388.5M1086.4 525.3C1090.6 523.3 1095.1 522.4 1099.7 522.2M707.4 466.6C708.4 471.3 713.0 473.8 714.9 477.9M914.0 587.7C913.5 592.2 911.6 596.7 912.8 601.3M862.8 610.9C861.6 606.6 859.5 602.3 859.9 597.6M997.9 500.4C993.3 500.4 989.0 498.8 984.7 497.2M842.4 616.2C847.1 617.3 849.0 622.6 853.7 623.7M859.0 538.9C856.4 542.6 855.1 547.1 853.9 551.4M836.9 298.0C835.6 302.3 832.9 306.2 832.4 310.8M845.6 537.1C849.8 539.8 854.7 537.3 859.0 538.9M997.5 275.8C993.7 273.4 988.9 272.9 985.1 270.4M585.2 386.8C590.0 385.9 594.1 388.3 598.2 390.1M980.7 411.2C976.2 410.0 972.9 406.6 969.2 404.2M862.3 526.1C857.6 526.6 854.8 531.2 850.4 532.4M862.6 481.6C858.3 480.3 854.1 478.5 849.9 477.1M950.5 402.0C949.8 406.6 951.9 410.9 952.4 415.4M571.7 387.3C574.0 383.4 574.0 378.5 576.4 374.7M846.9 811.4C850.5 808.1 849.7 802.8 852.0 799.0M749.2 331.7C750.4 336.1 752.4 340.2 755.0 343.8M999.0 770.7C1003.6 771.3 1006.5 775.9 1011.2 776.3M798.5 372.1C796.3 376.1 791.6 378.1 789.7 382.3M875.8 409.1C875.0 404.6 875.4 400.1 876.6 395.7M725.9 433.1C728.4 436.8 730.7 440.8 734.5 443.4M912.8 601.3C917.6 600.7 921.0 597.5 924.6 594.8M845.6 537.1C841.0 535.8 836.8 539.0 832.3 538.6M1030.0 350.3C1031.3 345.9 1029.7 341.3 1030.8 336.9M864.5 574.9C863.3 579.6 865.9 583.8 866.6 588.1M961.1 756.6C964.7 754.0 968.9 752.2 973.0 750.6M921.1 541.4C919.3 537.1 921.6 532.4 919.8 528.1M704.7 689.5C702.7 685.4 698.8 682.7 695.6 679.7M935.2 419.1C930.7 420.8 926.2 419.6 921.8 418.7M1005.1 440.1C1001.7 437.2 997.5 435.3 993.8 433.1M913.7 653.0C917.7 654.9 920.7 658.7 925.4 659.4M921.7 276.3C917.4 277.3 913.3 279.6 908.8 279.7M778.9 542.6C783.5 543.6 787.5 540.3 791.9 540.2M852.4 382.3C856.4 384.0 859.9 387.2 864.1 388.5M950.5 402.0C947.2 404.9 943.8 407.8 941.0 411.2M803.8 392.8C800.3 389.5 800.7 384.5 798.7 380.6M1037.9 785.7C1037.8 781.2 1034.9 777.4 1034.0 773.1M1209.9 202.5C1207.1 206.1 1202.8 207.8 1199.3 210.3M884.8 623.3C882.1 619.6 878.6 616.8 874.1 615.6M971.7 456.5C967.9 459.3 968.4 464.7 965.3 468.0M912.9 454.5C916.1 457.7 920.5 459.1 924.7 460.4M939.4 395.3C935.4 393.1 930.9 392.5 926.4 393.2M938.3 657.2C934.3 659.3 929.5 657.6 925.4 659.4M971.7 456.5C967.6 455.2 963.4 453.5 959.1 453.0M952.4 182.4C948.3 184.3 943.6 182.9 939.4 184.2M817.3 368.7C815.4 372.7 811.8 375.5 809.6 379.3M813.8 522.6C816.1 518.3 813.6 513.8 814.4 509.5M595.6 337.4C591.2 336.4 586.8 338.0 582.5 337.8M821.5 349.4C823.9 353.1 826.2 356.9 826.6 361.4M782.3 527.7C782.8 523.2 782.0 518.8 779.7 514.9M1003.8 588.5C1002.0 592.5 998.5 595.4 995.8 598.8M939.4 395.3C943.8 396.4 946.7 400.1 950.5 402.0M898.1 336.1C894.7 333.3 891.0 330.9 886.8 329.5M512.1 689.1C510.7 693.2 511.2 697.8 509.7 701.8M862.0 621.1C863.2 625.3 867.4 627.8 869.1 631.8M935.9 439.2C931.6 439.3 927.4 440.7 923.6 442.8M886.7 479.2C891.1 479.9 893.7 484.3 898.0 485.1M876.4 626.3C874.1 630.0 873.9 634.5 872.7 638.6M919.1 504.5C917.3 508.6 917.7 513.0 918.7 517.3M608.8 562.1C613.1 562.7 617.3 561.1 621.4 560.4M737.0 415.0C733.1 412.9 730.9 408.9 728.0 405.9M946.0 611.6C946.7 607.2 949.5 603.8 952.3 600.5M914.0 587.7C909.6 587.2 905.9 584.8 902.3 582.6M722.2 626.7C717.8 626.8 714.4 622.8 710.0 623.0M925.4 607.5C925.9 603.2 924.9 599.0 924.6 594.8M914.0 587.7C916.8 591.0 921.5 591.8 924.6 594.8M761.9 466.2C761.3 470.5 759.3 474.4 757.1 478.0M984.2 603.7C988.5 603.2 991.6 599.6 995.8 598.8M967.3 386.8C965.6 383.0 964.9 378.7 963.4 374.8M820.7 417.0C823.1 420.5 827.3 422.6 828.7 426.8M790.3 505.9C786.0 505.3 781.8 506.0 777.7 507.4M746.8 667.2C743.1 669.1 738.5 669.0 734.9 671.2M913.7 653.0C909.2 652.9 905.7 650.2 902.3 647.8M789.7 382.3C790.3 386.4 791.6 390.5 793.4 394.3M877.1 331.7C872.7 331.2 870.1 327.1 866.1 325.7M540.7 145.3C536.4 144.8 532.9 148.8 528.5 148.2M845.4 346.9C849.7 347.2 853.8 346.1 857.6 344.1M607.2 578.1C608.3 582.3 611.8 585.1 614.0 588.7M911.7 383.3C908.0 381.3 905.5 377.6 901.6 375.8M848.5 437.3C847.3 441.5 843.2 443.7 840.9 447.1M856.0 650.2C851.5 649.9 847.9 652.5 844.0 653.9M847.5 631.6C844.1 633.9 841.1 636.9 838.0 639.6M780.5 399.5C783.2 402.6 785.3 406.3 787.8 409.6M588.9 584.3C591.4 587.8 595.9 588.8 598.7 592.0M809.7 435.3C814.0 434.5 816.9 431.1 820.5 429.1M919.8 647.2C916.4 644.9 911.9 644.3 908.9 641.3M817.3 368.7C813.5 370.8 809.1 369.7 805.1 370.8M806.2 622.9C808.1 619.2 811.9 616.9 814.2 613.6M883.0 341.3C882.7 336.9 884.4 333.0 886.8 329.5M1014.8 311.3C1015.1 307.2 1016.7 303.2 1016.4 299.1M1072.6 506.7C1069.0 508.6 1064.9 509.8 1060.8 510.3M618.3 808.3C617.6 812.6 613.7 815.2 612.2 819.0M991.1 404.5C988.1 407.4 984.6 409.7 980.7 411.2M722.5 441.1C726.2 443.1 730.6 442.1 734.5 443.4M987.3 518.8C983.4 517.5 979.1 518.6 975.1 517.5M820.7 417.0C824.6 414.9 829.0 417.1 832.9 415.8M912.8 326.0C910.6 322.3 907.2 319.9 903.1 318.6M804.8 463.4C808.2 461.1 812.7 460.8 815.7 457.9M862.8 610.9C866.0 613.8 869.9 615.3 874.1 615.6M607.2 578.1C603.3 576.3 599.0 577.8 595.0 577.1M784.7 662.0C788.7 661.1 792.2 658.8 795.7 656.8M998.5 566.6C994.5 567.4 990.3 567.2 986.3 567.0M390.8 319.1C387.1 317.2 385.5 312.7 381.5 311.2M947.1 375.9C943.1 374.8 940.7 370.7 936.5 370.0M796.5 319.5C800.9 320.3 804.2 316.4 808.4 316.6M1126.7 483.2C1130.5 484.4 1134.2 486.4 1138.1 487.4M886.2 467.0C886.8 471.0 886.7 475.2 886.7 479.2M869.0 425.1C865.8 427.7 863.8 431.4 862.4 435.2M806.4 450.3C809.3 447.4 812.1 444.4 816.1 443.0M1010.9 768.6C1007.1 770.0 1002.8 769.1 999.0 770.7M838.0 639.6C836.2 643.3 835.9 647.5 835.0 651.3M764.8 548.4C763.0 544.5 765.7 540.3 764.5 536.3M996.9 263.7C996.8 267.7 998.8 271.7 997.5 275.8M899.1 305.5C900.4 301.8 901.4 297.8 903.4 294.3M961.7 397.4C958.0 399.0 954.6 401.5 950.5 402.0M994.5 165.8C990.2 165.3 987.0 162.7 984.2 159.7M961.7 397.4C964.9 394.6 966.8 391.0 967.3 386.8M869.5 224.2C870.2 220.2 867.7 216.2 868.9 212.2M749.2 331.7C746.4 328.5 746.8 324.0 745.2 320.4M712.6 417.0C716.0 414.4 720.1 414.1 724.0 413.3M681.7 478.4C685.6 479.6 689.7 476.9 693.6 478.1M946.0 611.6C942.2 613.3 938.1 612.6 934.1 612.8M744.4 441.4C748.4 440.9 752.4 440.7 756.4 441.0M813.3 600.3C811.2 603.7 808.3 606.5 805.0 608.8M820.7 417.0C816.9 416.1 812.8 416.4 808.9 415.6M898.8 497.0C898.6 493.0 898.8 489.0 898.0 485.1M860.9 637.2C864.7 637.8 868.8 637.4 872.7 638.6M855.7 335.2C852.0 336.5 848.0 337.1 844.1 337.7M973.8 442.2C976.7 439.4 980.5 437.9 984.0 436.1M914.0 410.0C916.5 412.9 919.0 416.1 921.8 418.7M813.3 325.2C815.6 321.6 820.0 321.0 823.1 318.6M832.9 415.8C831.4 419.4 829.8 423.0 828.7 426.8M849.3 427.4C845.5 428.2 842.0 430.2 838.5 431.9M817.3 368.7C820.1 366.0 823.9 364.3 826.6 361.4M720.9 538.8C717.4 540.7 716.2 545.2 712.4 546.9M923.0 264.6C919.6 266.5 916.5 269.1 913.2 271.1M921.7 276.3C922.5 272.5 923.4 268.6 923.0 264.6M849.3 427.4C845.6 428.6 841.5 428.2 837.7 428.6M1018.1 289.2C1016.2 285.8 1014.3 282.2 1013.6 278.3M396.1 753.8C393.1 751.0 389.5 749.4 385.5 748.8M592.1 604.8C595.3 602.5 599.0 601.1 602.7 599.9M756.4 441.0C753.5 438.0 754.0 433.6 752.4 430.0M748.4 412.5C744.3 411.5 740.5 413.0 737.0 415.0M832.6 335.6C836.3 337.3 840.3 337.5 844.1 337.7M748.4 412.5C752.2 410.5 756.2 412.8 760.0 411.9M798.7 380.6C802.1 378.2 803.7 374.5 805.1 370.8M859.9 597.6C861.0 593.7 864.3 591.2 866.6 588.1M749.7 486.1C749.8 482.3 747.7 478.6 748.1 474.7M632.1 633.8C628.5 635.2 624.5 635.2 620.9 636.7M825.2 657.6C829.4 657.0 831.9 653.6 835.0 651.3M1013.3 507.9C1014.2 511.7 1015.4 515.5 1014.3 519.5M714.0 520.6C712.8 524.4 713.3 528.3 713.6 532.2M981.9 309.9C978.3 311.4 975.9 314.9 972.5 316.6M993.8 433.1C990.3 431.5 986.8 429.8 983.5 427.9M761.9 466.2C760.1 462.9 757.7 459.8 756.3 456.1M1097.3 477.1C1095.6 480.6 1095.0 484.5 1093.4 488.0M837.7 428.6C838.8 424.9 841.1 421.7 843.4 418.6M734.6 396.6C731.6 399.1 730.4 403.0 728.0 405.9M971.7 456.5C973.4 460.2 978.3 460.7 980.0 464.4M882.4 367.8C885.8 366.1 889.3 364.2 891.9 361.4M848.5 437.3C844.6 436.7 842.3 432.7 838.5 431.9M894.6 195.5C897.6 198.1 902.2 197.1 905.2 199.7M718.7 468.1C714.8 469.0 711.2 466.8 707.4 466.6M991.1 506.3C995.2 506.3 998.4 508.7 1001.4 511.1M998.5 566.6C997.0 563.1 996.1 559.4 995.6 555.6M569.1 327.0C569.2 330.7 569.5 334.6 571.1 338.1M908.9 641.3C912.7 640.9 916.3 639.5 920.1 639.4M764.3 371.7C760.5 371.0 758.1 367.2 754.2 366.6M1182.6 484.0C1181.2 480.3 1181.0 476.5 1182.0 472.7M962.7 479.2C966.8 479.1 969.8 476.5 973.0 474.5M869.0 425.1C871.8 427.5 873.4 431.2 876.4 433.5M817.3 368.7C817.7 364.8 817.0 361.1 815.0 357.7M772.1 528.1C768.4 529.7 768.0 534.5 764.5 536.3M877.1 331.7C880.0 334.3 881.6 337.8 883.0 341.3M911.7 383.3C907.9 383.8 904.8 386.1 901.5 387.8M1004.8 285.2C1008.0 283.3 1010.9 280.8 1013.6 278.3M1200.1 482.8C1203.6 484.0 1207.2 485.1 1209.9 488.0M991.1 506.3C988.7 503.6 987.6 499.7 984.7 497.2M674.5 455.3C678.1 453.8 682.0 455.9 685.6 454.7M815.2 624.6C814.9 620.9 815.0 617.2 814.2 613.6M877.7 532.4C880.3 529.7 882.6 526.7 883.4 523.0M694.1 738.5C695.3 735.0 697.6 731.9 697.8 728.1M838.5 431.9C835.9 429.1 831.7 428.9 828.7 426.8M749.7 486.1C752.2 483.5 754.3 480.4 757.1 478.0M947.1 428.6C950.6 429.6 953.4 432.5 957.2 432.8M876.4 626.3C877.1 622.5 874.0 619.3 874.1 615.6M691.7 512.7C695.2 510.9 696.3 507.0 698.6 504.2M798.7 380.6C802.5 381.5 806.0 379.5 809.6 379.3M759.8 401.0C760.1 404.6 759.5 408.3 760.0 411.9M832.9 415.8C836.3 417.0 840.2 417.0 843.4 418.6M952.4 477.6C950.7 474.4 949.9 470.7 947.8 467.7M960.3 422.4C959.3 425.9 958.8 429.6 957.2 432.8M847.5 631.6C843.9 630.8 840.2 631.1 836.6 631.9M793.9 358.0C797.8 357.1 801.2 358.8 804.5 360.4M927.2 634.2C927.1 637.9 928.3 641.4 929.7 644.7M973.8 255.6C975.9 259.0 980.6 258.6 982.8 261.7M725.9 433.1C726.3 429.4 727.9 426.1 730.3 423.2M703.1 552.3C705.9 550.0 709.0 548.0 712.4 546.9M770.1 396.6C767.3 393.9 766.5 390.3 766.1 386.6M1138.1 487.4C1139.9 484.3 1142.2 481.5 1144.3 478.6M748.4 412.5C747.7 415.9 746.7 419.5 746.9 423.1M922.2 482.0C925.2 484.3 929.5 482.7 932.5 485.0M775.7 348.6C772.0 348.6 768.9 346.2 765.3 345.8M952.4 477.6C953.6 480.9 955.5 484.0 956.4 487.5M890.1 607.9C892.9 610.0 895.3 612.8 898.3 614.8M737.0 415.0C735.1 418.0 732.1 420.1 730.3 423.2M768.9 501.4C772.2 502.7 774.9 505.2 777.7 507.4M960.3 422.4C957.0 420.9 955.5 417.1 952.4 415.4M910.5 611.6C910.4 608.0 913.1 604.9 912.8 601.3M930.7 304.2C926.9 304.8 924.1 307.1 921.6 309.7M964.8 520.2C968.4 520.1 971.6 518.0 975.1 517.5M1115.8 463.8C1112.9 461.5 1111.9 457.9 1110.2 454.8M814.4 581.6C813.4 585.0 812.3 588.5 813.2 592.1M556.4 344.0C559.9 342.8 563.4 343.8 566.9 344.4M727.2 588.9C726.9 585.2 723.8 582.6 723.4 579.0M718.7 468.1C719.0 471.9 716.0 474.6 714.9 477.9M952.4 663.1C955.8 664.3 958.8 666.2 961.4 668.6M1001.4 382.7C999.5 385.7 996.8 388.2 993.7 389.9M778.9 542.6C781.2 545.3 782.8 548.5 783.9 551.8M849.3 427.4C846.3 425.2 845.4 421.5 843.4 418.6M892.8 523.4C891.2 520.2 891.5 516.3 889.1 513.5M821.5 349.4C819.2 352.0 816.9 354.8 815.0 357.7M1197.1 231.1C1200.4 232.4 1204.0 232.4 1207.5 232.9M755.0 343.8C751.4 343.9 748.2 342.2 745.0 340.9M1115.6 405.4C1114.2 402.2 1112.2 399.2 1110.6 396.1M870.3 191.3C871.0 187.9 872.7 184.6 872.1 181.0M805.1 370.8C804.4 367.4 805.3 363.8 804.5 360.4M925.8 384.3C923.5 381.7 921.6 378.7 918.8 376.6M983.4 388.2C987.1 387.1 990.3 389.1 993.7 389.9M962.7 479.2C961.1 482.3 958.1 484.4 956.4 487.5M628.4 568.2C626.6 565.2 623.2 563.4 621.4 560.4M980.7 411.2C984.0 413.1 984.5 417.1 987.0 419.5M974.4 325.2C972.0 327.9 968.8 329.6 965.4 330.4M832.3 538.6C828.7 539.6 826.6 542.6 824.2 545.1M966.2 245.6C965.0 249.1 961.0 250.5 959.8 253.8M775.7 348.6C777.2 351.7 779.5 354.4 782.0 356.7M683.0 548.8C679.5 547.9 677.5 544.5 674.2 543.3M877.7 532.4C874.1 532.5 871.5 535.7 867.9 535.5M782.8 374.6C786.1 376.3 787.7 379.6 789.7 382.3M934.1 612.8C930.8 611.7 928.5 608.8 925.4 607.5M862.8 610.9C861.1 614.1 862.7 617.7 862.0 621.1M782.3 527.7C778.9 526.5 775.5 527.7 772.1 528.1M635.8 657.9C639.2 658.0 642.7 657.4 646.0 658.2M961.7 397.4C964.2 399.5 967.0 401.7 969.2 404.2M950.0 448.6C953.6 448.7 955.7 452.2 959.1 453.0M726.2 462.2C728.7 464.8 732.8 463.7 735.5 465.8M809.7 435.3C812.9 436.9 814.5 440.1 816.1 443.0M891.9 361.4C893.2 364.4 892.6 368.2 894.7 371.0M859.9 597.6C856.5 598.1 853.3 596.1 849.9 596.6M961.9 443.4C962.4 447.0 959.1 449.6 959.1 453.0M802.0 351.9C799.2 353.7 796.2 355.5 793.9 358.0M973.0 474.5C971.5 471.2 968.3 469.7 965.3 468.0M962.7 479.2C964.6 482.1 965.0 485.5 965.2 488.9M804.8 463.4C806.3 466.5 804.8 470.2 806.4 473.3M813.8 522.6C815.2 525.8 818.8 527.1 820.5 530.0M970.7 279.4C967.8 281.2 964.8 282.7 961.4 283.2M783.1 467.9C784.6 464.8 785.3 461.4 784.6 458.0M847.5 631.6C849.3 628.8 850.7 625.6 853.7 623.7M782.8 374.6C779.8 372.6 779.5 368.9 777.7 366.1M825.2 454.9C822.4 456.7 819.1 457.8 815.7 457.9M921.7 276.3C918.1 275.8 916.4 272.0 913.2 271.1M849.3 427.4C849.5 430.7 848.9 434.0 848.5 437.3M813.3 325.2C812.1 322.2 810.7 319.1 808.4 316.6M833.9 476.4C831.8 479.2 828.3 479.9 825.4 481.4M770.1 396.6C766.7 396.4 763.9 394.4 760.9 393.2M886.2 467.0C883.5 464.6 879.9 464.9 876.7 464.2M920.1 571.2C917.4 569.0 914.1 568.4 910.8 568.1M935.2 419.1C938.1 417.2 940.0 414.5 941.0 411.2M1053.0 504.4C1056.5 505.2 1058.2 508.4 1060.8 510.3M890.5 411.0C893.2 408.7 892.6 404.7 894.7 402.2M1093.6 434.4C1091.2 432.1 1088.4 430.2 1085.1 429.5M766.9 405.8C768.7 403.0 770.0 399.9 770.1 396.6M694.4 455.7C692.3 452.8 694.1 449.0 692.3 446.2M889.8 598.4C892.9 599.3 896.1 600.2 899.2 600.9M793.4 294.5C793.9 297.7 794.5 301.0 793.2 304.2M908.8 279.7C911.3 277.4 910.6 273.4 913.2 271.1M693.0 419.9C692.2 416.6 694.4 413.6 694.0 410.3M898.1 336.1C901.5 335.0 902.4 331.1 905.2 329.6M876.1 530.4C873.5 532.3 870.3 533.3 867.9 535.5M939.9 471.9C937.2 470.3 934.6 468.1 931.3 467.7M816.8 553.8C813.4 554.7 811.7 557.9 809.1 559.7M805.1 370.8C806.6 373.6 808.2 376.4 809.6 379.3M757.1 478.0C753.9 477.5 750.6 476.9 748.1 474.7M590.3 248.4C587.1 248.5 584.0 249.6 580.8 249.8M809.1 559.7C806.0 558.1 804.5 555.1 803.0 552.3M803.8 392.8C804.6 395.9 807.4 398.2 807.5 401.6M961.4 283.2C958.3 283.5 955.0 284.4 951.9 283.2M933.6 321.7C936.3 320.0 939.4 319.1 942.5 318.4M849.9 265.5C853.2 266.3 855.0 269.3 857.4 271.3M867.9 535.5C865.3 537.6 862.3 538.8 859.0 538.9M808.9 415.6C806.2 413.9 805.2 410.4 802.2 409.0M548.7 707.3C546.0 709.0 543.8 711.3 541.3 713.0M664.2 559.3C665.0 556.2 665.5 553.1 664.8 549.9M1140.7 525.7C1143.7 525.0 1146.8 524.3 1149.9 523.9M892.8 391.1C895.3 389.0 899.0 390.0 901.5 387.8M841.9 472.3C845.0 473.1 847.2 475.6 849.9 477.1M967.3 386.8C964.6 388.3 961.6 389.2 958.6 389.9M822.4 593.0C819.3 593.6 816.2 593.1 813.2 592.1M941.5 445.1C944.6 445.5 947.0 447.9 950.0 448.6M926.2 434.0C926.0 437.1 924.4 439.9 923.6 442.8M798.7 380.6C795.8 381.2 792.5 380.6 789.7 382.3M837.7 428.6C834.7 428.0 831.7 427.3 828.7 426.8M494.4 750.2C492.2 752.4 489.1 753.3 486.9 755.5M855.7 335.2C856.8 338.0 856.4 341.3 857.6 344.1M997.9 500.4C995.7 502.4 993.2 504.2 991.1 506.3M776.3 455.5C773.1 455.0 770.7 453.0 768.5 450.8M781.8 447.9C783.1 445.2 785.7 443.3 787.3 440.7M921.1 541.4C918.3 542.5 915.5 543.7 912.4 543.9M876.4 626.3C874.8 629.2 871.3 629.7 869.1 631.8M1001.4 428.2C999.5 430.8 996.8 432.2 993.8 433.1M987.0 419.5C985.4 422.2 985.1 425.3 983.5 427.9M885.8 539.1C882.6 539.2 880.4 542.0 877.5 542.8M946.0 611.6C944.0 609.1 944.9 605.7 943.6 602.9M985.1 270.4C983.2 267.8 984.3 264.3 982.8 261.7M921.1 541.4C924.1 541.5 927.2 541.6 930.1 541.5M902.6 406.6C899.6 405.8 897.8 402.7 894.7 402.2M1120.9 553.5C1121.9 550.6 1124.4 548.6 1125.6 545.8M876.4 626.3C878.7 624.0 881.8 623.7 884.8 623.3M841.9 472.3C839.6 474.3 836.5 475.0 833.9 476.4M943.6 602.9C946.6 602.6 949.4 601.1 952.3 600.5M883.9 547.9C883.2 544.7 885.1 542.0 885.8 539.1M861.8 318.6C858.8 317.4 855.9 320.1 852.9 319.3M939.9 471.9C942.9 471.3 945.4 469.4 947.8 467.7M752.4 430.0C750.7 427.6 748.9 425.2 746.9 423.1M733.7 513.3C736.4 514.9 736.9 518.3 739.0 520.4M602.7 599.9C601.3 597.3 599.5 594.9 598.7 592.0M956.4 487.5C959.4 487.2 962.1 489.4 965.2 488.9M694.4 455.7C691.5 455.3 688.4 455.8 685.6 454.7M972.5 316.6C970.0 314.8 966.7 315.2 964.1 313.7M712.6 417.0C710.4 414.9 707.4 414.4 704.6 413.3M862.0 621.1C859.7 623.2 856.2 622.1 853.7 623.7M809.6 379.3C809.7 382.2 809.8 385.2 810.0 388.1M974.4 325.2C974.0 322.3 973.8 319.3 972.5 316.6M843.5 510.3C845.6 508.4 847.3 505.7 849.8 504.2M1159.0 516.6C1158.4 519.8 1159.6 522.5 1161.0 525.2M884.0 496.8C885.4 494.0 884.5 490.9 884.8 488.1M831.1 578.1C833.8 577.0 836.8 577.4 839.6 576.8M725.9 433.1C724.7 435.7 723.4 438.4 722.5 441.1M944.6 278.5C946.8 280.5 949.3 281.9 951.9 283.2M1016.8 737.8C1013.7 737.5 1011.8 734.8 1009.1 733.8M689.6 822.8C692.3 821.7 694.4 819.5 696.5 817.6M927.5 342.1C925.8 344.4 923.4 346.3 922.6 349.2M1044.6 478.4C1047.4 479.0 1049.8 480.8 1052.4 482.0M540.5 286.1C542.8 288.0 545.9 288.0 548.7 288.5M766.9 405.8C764.5 404.4 762.3 402.5 759.8 401.0M1032.4 159.7C1029.4 159.7 1026.8 158.3 1024.2 157.3M856.8 326.8C854.4 324.9 854.3 321.7 852.9 319.3M942.6 649.8C940.6 651.9 939.7 654.8 938.3 657.2M912.9 454.5C911.0 456.8 911.4 460.0 910.3 462.5M798.7 380.6C800.0 377.7 798.0 374.9 798.5 372.1M945.9 504.9C945.8 502.1 945.5 499.1 946.6 496.4M1140.7 525.7C1143.4 527.1 1143.5 530.7 1146.0 532.4M788.1 318.3C790.8 319.2 793.7 319.6 796.5 319.5M760.9 393.2C762.4 390.9 764.7 389.1 766.1 386.6M1107.1 544.5C1109.6 545.9 1111.0 548.6 1113.1 550.4M894.7 371.0C897.5 371.9 899.6 373.9 901.6 375.8M811.7 676.3C809.8 678.4 807.7 680.3 805.4 681.8M919.8 647.2C917.4 648.7 916.2 651.5 913.7 653.0M738.1 351.2C736.9 348.6 734.3 346.9 733.3 344.3M586.0 358.4C585.2 355.5 582.0 354.4 580.8 351.9M905.2 329.6C907.3 327.4 910.3 327.3 912.8 326.0M724.0 413.3C724.2 410.3 725.8 407.9 728.0 405.9M841.9 472.3C842.0 469.6 842.9 466.8 842.3 464.0M1003.8 588.5C1002.9 585.8 1000.2 584.1 999.8 581.2M469.5 682.2C467.4 684.0 465.7 686.3 464.4 688.8M875.6 601.8C873.2 600.1 870.4 599.8 867.6 599.6M698.9 695.3C700.4 693.0 702.6 691.2 704.7 689.5M509.7 701.8C509.0 704.5 507.7 707.0 506.6 709.4M827.9 610.5C826.6 612.9 825.6 615.5 824.2 617.9M1001.4 382.7C1000.7 380.0 1000.4 377.2 1000.4 374.5M996.6 529.6C997.7 527.1 1000.0 525.3 1001.2 522.9M836.9 298.0C834.7 299.6 832.5 301.4 830.6 303.3M842.1 594.5C844.6 595.5 847.4 595.5 849.9 596.6M768.9 501.4C767.8 498.8 768.8 495.9 768.0 493.3M940.1 549.3C942.6 550.5 945.7 549.6 948.1 551.2M943.1 585.0C944.9 582.8 948.2 582.9 949.9 580.7M941.5 445.1C939.2 443.6 937.6 441.3 935.9 439.2M1010.4 784.3C1009.4 781.6 1010.8 778.9 1011.2 776.3M569.6 402.0C568.3 399.6 567.0 397.2 564.5 395.8M926.2 507.1C927.4 504.6 930.4 503.7 931.7 501.4M856.5 590.4C856.7 593.2 859.1 595.1 859.9 597.6M873.5 498.1C873.4 500.8 872.8 503.4 872.3 506.0M754.2 366.6C754.8 363.9 756.1 361.5 757.2 359.2M739.2 551.5C736.9 550.1 735.9 547.3 733.6 545.8M851.2 359.7C852.9 361.7 853.7 364.5 856.0 366.0M997.4 778.4C998.4 776.0 999.1 773.4 999.0 770.7M700.5 405.8C699.0 408.2 695.7 408.2 694.0 410.3M836.6 631.9C837.4 634.4 836.6 637.2 838.0 639.6M609.3 826.2C609.6 823.6 611.7 821.6 612.2 819.0M823.1 625.6C824.4 623.2 824.8 620.6 824.2 617.9M518.7 685.1C517.1 687.3 514.6 688.3 512.1 689.1M874.0 521.4C872.7 519.1 873.4 516.2 872.1 513.9M1010.9 768.6C1011.8 771.1 1010.2 773.8 1011.2 776.3M689.9 491.2C687.2 492.0 684.7 490.7 682.2 490.3M808.4 423.3C809.5 420.8 808.5 418.2 808.9 415.6M706.3 504.8C703.7 505.1 701.2 504.3 698.6 504.2M832.4 310.8C832.5 308.2 831.7 305.7 830.6 303.3M546.6 316.9C547.9 314.7 550.7 313.8 552.0 311.5M986.6 290.1C984.4 291.5 981.9 292.3 979.4 292.8M856.5 590.4C857.7 588.2 857.1 585.4 858.3 583.1M847.7 611.3C846.0 612.9 844.8 615.2 842.4 616.2M1038.7 423.2C1038.5 425.6 1037.6 427.9 1037.4 430.3M388.4 729.2C389.7 727.1 389.1 724.4 390.5 722.4M469.5 682.2C467.2 682.3 464.9 681.4 462.6 681.5M963.8 186.1C965.7 184.9 966.7 182.5 968.8 181.4M805.1 370.8C802.9 371.4 800.8 372.2 798.5 372.1M845.6 537.1C846.8 535.1 848.3 533.4 850.4 532.4M894.9 675.6C895.0 678.0 893.3 679.8 892.5 681.8M824.7 490.0C826.9 490.7 828.2 492.7 830.0 494.0M1126.7 483.2C1127.3 485.4 1126.3 487.5 1126.2 489.6M917.7 673.8C916.5 672.2 915.3 670.5 913.4 669.7M894.9 675.6C896.0 674.3 896.9 672.8 897.5 671.2M1019.1 537.1C1020.6 536.1 1022.4 536.5 1023.9 535.9M633.2 753.4C631.8 754.1 630.0 753.9 628.7 754.8M984.2 603.7C983.7 604.9 983.3 606.2 983.1 607.5M837.7 428.6C838.0 429.7 838.1 430.9 838.5 431.9M876.1 530.4C876.7 531.0 877.0 531.9 877.7 532.4"/>
</g>
<g id="borders-soft" fill="none" stroke="#c9c6c2" stroke-width="4.2" stroke-linejoin="round" stroke-linecap="round" opacity="0.35">
<path d="M427.3 211.7 L423.4 216.4 L422.0 221.0 L410.1 227.8 L415.4 231.5 L403.5 239.3 L411.5 247.0 L419.4 253.8 L426.0 254.2 L430.0 249.3 L433.2 240.6 L443.2 250.6 L443.2 257.4 L452.5 255.2"/>
<path d="M384.4 742.4 L402.2 733.1 L404.8 744.2 L428.7 742.0 L445.9 739.9 L455.2 752.7 L439.3 772.1 L439.3 795.8 L434.0 809.7 L433.2 819.4 L419.9 819.7 L426.0 826.9 L434.0 838.9"/>
<path d="M572.2 688.0 L577.0 692.0 L582.3 700.0 L599.5 703.7 L611.5 708.0 L619.4 712.7 L636.6 712.7 L637.9 707.3 L657.0 716.3 L660.5 714.5 L666.6 717.4 L671.9 721.0 L684.3 724.5 L703.4 722.4"/>
<path d="M657.0 716.3 L657.0 719.9 L657.8 722.4 L665.0 719.9 L666.6 717.4"/>
<path d="M818.1 673.4 L823.4 661.6 L804.8 656.1 L802.2 648.7 L806.2 639.4 L798.2 628.2 L803.5 620.7 L807.5 611.3 L799.5 598.0 L805.9 593.4"/>
<path d="M805.9 593.4 L800.9 585.4 L799.5 575.1 L786.3 580.8 L786.3 584.7 L777.3 585.4 L781.0 575.1 L790.3 560.8 L800.9 550.0 L804.8 538.3 L803.5 532.4 L815.4 535.1 L820.5 528.9"/>
<path d="M820.5 528.9 L819.4 512.7 L826.0 489.6 L836.6 473.9 L818.1 469.9 L804.8 464.6 L796.9 464.6 L788.1 453.6"/>
<path d="M788.1 453.6 L773.6 450.8 L763.8 451.6 L748.4 440.1 L747.1 425.3 L743.4 431.9 L729.3 432.7 L730.7 420.3 L717.4 418.7 L706.3 410.4 L702.8 399.5 L689.6 397.8 L686.9 386.5"/>
<path d="M708.7 374.6 L722.7 381.8 L732.0 374.6 L750.5 371.2 L765.1 378.5 L774.4 383.9 L770.4 394.5 L770.4 400.8 L778.9 400.8"/>
<path d="M778.9 400.8 L786.3 411.2 L788.9 418.3 L781.8 426.6"/>
<path d="M781.8 426.6 L771.7 438.1 L773.6 450.8"/>
<path d="M781.8 426.6 L785.0 436.9 L792.1 440.1 L788.1 453.6"/>
<path d="M778.9 400.8 L781.0 393.6 L775.7 388.2 L783.6 381.8 L784.2 370.0 L777.0 355.0 L788.9 355.0 L800.3 349.0 L796.9 344.3 L806.7 337.8 L806.2 330.4 L797.4 320.4 L806.2 319.5 L810.1 304.2 L810.1 293.6"/>
<path d="M848.5 218.2 L869.7 222.3"/>
<path d="M996.1 262.8 L997.4 273.1 L1000.9 290.9 L994.2 310.8 L1006.2 321.7 L1004.8 332.6 L1010.1 344.7 L1006.2 356.3 L1015.4 371.2 L1017.5 379.7 L1012.0 395.7"/>
<path d="M1012.0 395.7 L1003.5 388.2 L998.2 394.5 L977.0 402.0 L962.4 414.5 L946.0 421.6 L939.9 419.5 L951.1 436.0 L947.9 442.2 L954.5 455.3 L974.4 473.5 L986.0 482.0"/>
<path d="M986.0 482.0 L975.7 490.0 L963.8 502.8 L957.1 508.7 L963.8 518.6 L965.1 532.4 L957.1 525.7 L942.6 527.7 L921.4 534.3 L908.1 532.4 L896.2 529.6 L889.6 541.0 L883.5 530.4 L877.7 530.4"/>
<path d="M873.7 531.2 L857.8 525.3 L847.2 520.6 L843.2 529.3 L836.6 527.7 L820.5 528.9"/>
<path d="M875.0 534.3 L873.7 542.2 L873.7 550.0 L880.9 553.8 L888.3 557.7 L896.8 556.9"/>
<path d="M873.7 542.2 L870.5 544.9 L871.1 549.6 L873.7 550.0"/>
<path d="M896.8 556.9 L896.2 569.3 L885.6 575.1 L887.7 581.6 L872.4 578.9 L865.2 571.2 L864.4 582.7 L857.8 596.9 L851.2 586.6 L843.2 580.8 L841.9 573.2 L827.3 593.4 L805.9 593.4"/>
<path d="M896.8 556.9 L910.8 560.8 L924.0 551.9 L942.6 548.8 L947.9 563.5 L982.3 570.5"/>
<path d="M982.6 570.5 L1004.8 575.1 L1016.8 566.2 L1034.0 563.5 L1043.2 564.3 L1046.2 556.9"/>
<path d="M1046.2 556.9 L1056.5 551.9 L1055.2 536.3 L1060.5 526.5 L1055.2 524.5 L1071.6 523.7 L1072.4 513.9 L1074.0 512.3"/>
<path d="M1074.0 512.3 L1069.2 505.9 L1068.4 488.8 L1068.1 488.0"/>
<path d="M1068.1 488.0 L1053.8 483.6 L1016.8 472.7 L1015.4 482.0 L1008.8 488.8 L990.3 488.8 L986.0 482.0"/>
<path d="M1012.0 395.7 L1016.8 389.4 L1024.7 399.5 L1037.9 400.8 L1052.5 404.9 L1051.2 416.2 L1064.4 427.8 L1069.7 415.4 L1088.3 419.5 L1085.6 431.9 L1096.2 432.7 L1112.1 436.0 L1118.7 451.6"/>
<path d="M1118.7 451.6 L1098.9 468.7 L1075.0 478.0 L1068.1 488.0"/>
<path d="M1118.7 451.6 L1134.6 448.3 L1143.9 464.6 L1151.8 464.6 L1159.8 456.5 L1173.0 460.6 L1188.9 455.3 L1217.0 469.1"/>
<path d="M1217.0 469.1 L1220.7 452.4 L1231.3 431.9 L1247.2 415.4 L1257.8 408.3 L1257.8 396.6 L1244.6 369.1"/>
<path d="M1244.6 369.1 L1245.9 343.4 L1234.0 335.6 L1253.8 317.4 L1252.5 299.8 L1242.2 261.5"/>
<path d="M1242.2 261.5 L1241.9 250.6 L1223.1 243.4"/>
<path d="M1223.1 243.4 L1143.9 239.7"/>
<path d="M1223.1 243.4 L1224.7 223.3 L1218.1 211.7 L1186.3 204.8 L1182.8 202.5"/>
<path d="M1177.0 164.0 L1186.3 153.0 L1204.8 147.3 L1228.7 151.6 L1257.8 154.4 L1279.0 145.8 L1284.3 158.7 L1300.2 160.2 L1308.1 169.6 L1324.8 182.4"/>
<path d="M1324.8 182.4 L1324.0 200.1 L1316.1 208.0 L1302.8 218.7 L1296.2 244.7 L1281.7 252.9 L1265.8 264.2 L1242.2 261.5"/>
<path d="M1324.8 182.4 L1350.5 177.7 L1365.1 159.2"/>
<path d="M1365.1 159.2 L1357.1 126.6 L1353.2 104.6"/>
<path d="M1365.1 159.2 L1398.2 174.4 L1419.4 174.4 L1437.9 186.1 L1435.3 216.4 L1440.6 237.0 L1464.4 268.7 L1480.3 282.1 L1469.7 299.8 L1451.2 295.4 L1456.5 321.7 L1461.3 343.4"/>
<path d="M1244.6 369.1 L1263.1 358.4 L1289.6 349.9 L1339.9 364.9 L1369.1 367.0 L1395.6 371.2 L1418.1 369.1 L1428.7 377.6 L1431.3 352.0 L1445.9 345.6 L1461.3 343.4"/>
<path d="M1461.3 343.4 L1477.7 334.8 L1498.9 332.6"/>
<path d="M1074.0 512.3 L1077.7 514.7 L1090.9 522.6 L1099.7 522.6 L1116.1 519.8 L1118.7 510.7 L1136.0 504.8 L1146.6 506.7 L1157.1 502.0 L1162.4 491.6 L1186.3 490.8 L1194.2 498.8 L1206.2 496.4"/>
<path d="M1206.2 496.4 L1211.5 478.8 L1217.0 469.1"/>
<path d="M1206.2 496.4 L1226.0 514.7"/>
<path d="M1226.0 514.7 L1202.2 530.4 L1192.9 551.9 L1183.6 573.2 L1167.7 583.5 L1156.1 585.4"/>
<path d="M1156.1 585.4 L1138.6 583.9 L1120.1 593.4"/>
<path d="M1120.1 593.4 L1106.8 599.9 L1086.9 592.3 L1075.0 586.6 L1065.8 577.0 L1058.3 572.0"/>
<path d="M1058.3 572.0 L1052.5 565.5 L1046.2 556.9"/>
<path d="M1058.3 572.0 L1051.2 575.1 L1034.0 582.0 L1035.3 596.1 L1024.7 601.8 L1024.7 610.5 L1011.5 610.5 L1006.2 603.7 L992.9 610.1 L979.7 610.9"/>
<path d="M982.6 570.5 L974.4 578.9 L979.7 591.1 L985.0 605.6"/>
<path d="M1123.2 633.4 L1112.1 625.2 L1092.2 625.6 L1067.1 618.8 L1052.5 628.2 L1037.9 620.7 L1036.6 635.7 L1047.2 657.9 L1061.8 672.7 L1077.7 685.5 L1086.9 700.0 L1085.6 704.4"/>
<path d="M1087.7 705.5 L1101.5 710.9 L1108.1 717.4 L1110.0 722.8"/>
<path d="M1120.1 593.4 L1121.4 607.5 L1122.7 615.0 L1133.3 619.9 L1125.4 623.3 L1123.2 633.4"/>
<path d="M1123.2 633.4 L1132.0 633.8 L1126.7 646.8 L1132.0 665.3 L1136.0 674.5 L1128.5 682.9"/>
<path d="M1128.5 682.9 L1114.8 694.6 L1108.1 708.0 L1108.1 717.4"/>
<path d="M1128.5 682.9 L1147.9 698.2 L1158.5 708.0"/>
<path d="M1158.5 708.0 L1151.1 717.7"/>
<path d="M1151.1 717.7 L1142.6 718.1 L1133.3 727.1 L1132.5 742.4"/>
<path d="M1151.1 717.7 L1161.1 727.1 L1165.1 742.4"/>
<path d="M1164.8 742.0 L1178.3 730.6 L1191.1 728.8"/>
<path d="M1158.5 708.0 L1166.4 694.6 L1181.0 703.7 L1195.6 713.4 L1191.1 728.8"/>
<path d="M1191.1 728.8 L1211.7 726.3"/>
<path d="M1211.7 726.7 L1216.7 705.5 L1227.3 696.4 L1211.5 672.7 L1219.9 657.2"/>
<path d="M1219.9 657.2 L1215.4 639.4 L1202.2 643.1 L1186.3 634.5 L1190.3 620.7 L1170.4 599.9 L1156.1 585.4"/>
<path d="M1219.9 657.2 L1228.7 672.7 L1263.1 676.3 L1292.2 678.9 L1307.3 670.1 L1334.6 660.5 L1341.8 660.9 L1361.1 671.6 L1376.5 674.9"/>
<path d="M1226.0 514.7 L1234.0 508.7 L1260.5 516.6 L1279.0 523.7 L1289.6 516.6 L1313.4 512.7 L1324.8 502.4"/>
<path d="M1324.8 502.4 L1339.9 520.6 L1355.8 544.1 L1365.1 560.4 L1367.7 575.1 L1363.8 594.2 L1366.4 610.5"/>
<path d="M1366.4 610.5 L1383.6 615.8 L1394.2 612.4 L1403.5 613.1 L1407.5 619.9"/>
<path d="M1324.8 502.4 L1347.9 494.8 L1363.8 502.8 L1377.0 506.7 L1391.6 514.7 L1402.2 538.3 L1412.8 559.7 L1417.5 575.1 L1403.5 576.2 L1386.3 573.2 L1386.3 590.4 L1374.4 609.4 L1366.4 610.5"/>
<path d="M1211.7 726.7 L1215.4 734.2 L1227.3 746.7 L1226.8 761.2"/>
<path d="M1226.8 761.2 L1244.6 759.1 L1271.1 758.0 L1289.6 764.4 L1308.1 761.5 L1317.7 748.1"/>
<path d="M1317.7 748.1 L1333.3 737.8 L1347.9 734.9 L1361.9 738.5"/>
<path d="M1317.7 748.1 L1324.0 752.0 L1324.0 760.8 L1316.1 766.1 L1317.4 774.9 L1309.2 782.6"/>
<path d="M1226.8 761.2 L1212.8 768.9 L1199.5 769.6 L1196.9 775.6 L1175.2 778.4"/>
<path d="M1175.2 778.4 L1177.0 787.1 L1167.7 797.6 L1157.1 809.7 L1153.2 820.1 L1149.2 818.7"/>
<path d="M1164.8 742.0 L1162.4 760.8 L1166.4 770.3 L1170.4 776.7 L1175.2 778.4"/>
</g>
<g id="borders" fill="none" stroke="#c2bfbc" stroke-width="1.8" stroke-linejoin="round" stroke-linecap="round">
<path d="M427.3 211.7 L423.4 216.4 L422.0 221.0 L410.1 227.8 L415.4 231.5 L403.5 239.3 L411.5 247.0 L419.4 253.8 L426.0 254.2 L430.0 249.3 L433.2 240.6 L443.2 250.6 L443.2 257.4 L452.5 255.2"/>
<path d="M384.4 742.4 L402.2 733.1 L404.8 744.2 L428.7 742.0 L445.9 739.9 L455.2 752.7 L439.3 772.1 L439.3 795.8 L434.0 809.7 L433.2 819.4 L419.9 819.7 L426.0 826.9 L434.0 838.9"/>
<path d="M572.2 688.0 L577.0 692.0 L582.3 700.0 L599.5 703.7 L611.5 708.0 L619.4 712.7 L636.6 712.7 L637.9 707.3 L657.0 716.3 L660.5 714.5 L666.6 717.4 L671.9 721.0 L684.3 724.5 L703.4 722.4"/>
<path d="M657.0 716.3 L657.0 719.9 L657.8 722.4 L665.0 719.9 L666.6 717.4"/>
<path d="M818.1 673.4 L823.4 661.6 L804.8 656.1 L802.2 648.7 L806.2 639.4 L798.2 628.2 L803.5 620.7 L807.5 611.3 L799.5 598.0 L805.9 593.4"/>
<path d="M805.9 593.4 L800.9 585.4 L799.5 575.1 L786.3 580.8 L786.3 584.7 L777.3 585.4 L781.0 575.1 L790.3 560.8 L800.9 550.0 L804.8 538.3 L803.5 532.4 L815.4 535.1 L820.5 528.9"/>
<path d="M820.5 528.9 L819.4 512.7 L826.0 489.6 L836.6 473.9 L818.1 469.9 L804.8 464.6 L796.9 464.6 L788.1 453.6"/>
<path d="M788.1 453.6 L773.6 450.8 L763.8 451.6 L748.4 440.1 L747.1 425.3 L743.4 431.9 L729.3 432.7 L730.7 420.3 L717.4 418.7 L706.3 410.4 L702.8 399.5 L689.6 397.8 L686.9 386.5"/>
<path d="M708.7 374.6 L722.7 381.8 L732.0 374.6 L750.5 371.2 L765.1 378.5 L774.4 383.9 L770.4 394.5 L770.4 400.8 L778.9 400.8"/>
<path d="M778.9 400.8 L786.3 411.2 L788.9 418.3 L781.8 426.6"/>
<path d="M781.8 426.6 L771.7 438.1 L773.6 450.8"/>
<path d="M781.8 426.6 L785.0 436.9 L792.1 440.1 L788.1 453.6"/>
<path d="M778.9 400.8 L781.0 393.6 L775.7 388.2 L783.6 381.8 L784.2 370.0 L777.0 355.0 L788.9 355.0 L800.3 349.0 L796.9 344.3 L806.7 337.8 L806.2 330.4 L797.4 320.4 L806.2 319.5 L810.1 304.2 L810.1 293.6"/>
<path d="M848.5 218.2 L869.7 222.3"/>
<path d="M996.1 262.8 L997.4 273.1 L1000.9 290.9 L994.2 310.8 L1006.2 321.7 L1004.8 332.6 L1010.1 344.7 L1006.2 356.3 L1015.4 371.2 L1017.5 379.7 L1012.0 395.7"/>
<path d="M1012.0 395.7 L1003.5 388.2 L998.2 394.5 L977.0 402.0 L962.4 414.5 L946.0 421.6 L939.9 419.5 L951.1 436.0 L947.9 442.2 L954.5 455.3 L974.4 473.5 L986.0 482.0"/>
<path d="M986.0 482.0 L975.7 490.0 L963.8 502.8 L957.1 508.7 L963.8 518.6 L965.1 532.4 L957.1 525.7 L942.6 527.7 L921.4 534.3 L908.1 532.4 L896.2 529.6 L889.6 541.0 L883.5 530.4 L877.7 530.4"/>
<path d="M873.7 531.2 L857.8 525.3 L847.2 520.6 L843.2 529.3 L836.6 527.7 L820.5 528.9"/>
<path d="M875.0 534.3 L873.7 542.2 L873.7 550.0 L880.9 553.8 L888.3 557.7 L896.8 556.9"/>
<path d="M873.7 542.2 L870.5 544.9 L871.1 549.6 L873.7 550.0"/>
<path d="M896.8 556.9 L896.2 569.3 L885.6 575.1 L887.7 581.6 L872.4 578.9 L865.2 571.2 L864.4 582.7 L857.8 596.9 L851.2 586.6 L843.2 580.8 L841.9 573.2 L827.3 593.4 L805.9 593.4"/>
<path d="M896.8 556.9 L910.8 560.8 L924.0 551.9 L942.6 548.8 L947.9 563.5 L982.3 570.5"/>
<path d="M982.6 570.5 L1004.8 575.1 L1016.8 566.2 L1034.0 563.5 L1043.2 564.3 L1046.2 556.9"/>
<path d="M1046.2 556.9 L1056.5 551.9 L1055.2 536.3 L1060.5 526.5 L1055.2 524.5 L1071.6 523.7 L1072.4 513.9 L1074.0 512.3"/>
<path d="M1074.0 512.3 L1069.2 505.9 L1068.4 488.8 L1068.1 488.0"/>
<path d="M1068.1 488.0 L1053.8 483.6 L1016.8 472.7 L1015.4 482.0 L1008.8 488.8 L990.3 488.8 L986.0 482.0"/>
<path d="M1012.0 395.7 L1016.8 389.4 L1024.7 399.5 L1037.9 400.8 L1052.5 404.9 L1051.2 416.2 L1064.4 427.8 L1069.7 415.4 L1088.3 419.5 L1085.6 431.9 L1096.2 432.7 L1112.1 436.0 L1118.7 451.6"/>
<path d="M1118.7 451.6 L1098.9 468.7 L1075.0 478.0 L1068.1 488.0"/>
<path d="M1118.7 451.6 L1134.6 448.3 L1143.9 464.6 L1151.8 464.6 L1159.8 456.5 L1173.0 460.6 L1188.9 455.3 L1217.0 469.1"/>
<path d="M1217.0 469.1 L1220.7 452.4 L1231.3 431.9 L1247.2 415.4 L1257.8 408.3 L1257.8 396.6 L1244.6 369.1"/>
<path d="M1244.6 369.1 L1245.9 343.4 L1234.0 335.6 L1253.8 317.4 L1252.5 299.8 L1242.2 261.5"/>
<path d="M1242.2 261.5 L1241.9 250.6 L1223.1 243.4"/>
<path d="M1223.1 243.4 L1143.9 239.7"/>
<path d="M1223.1 243.4 L1224.7 223.3 L1218.1 211.7 L1186.3 204.8 L1182.8 202.5"/>
<path d="M1177.0 164.0 L1186.3 153.0 L1204.8 147.3 L1228.7 151.6 L1257.8 154.4 L1279.0 145.8 L1284.3 158.7 L1300.2 160.2 L1308.1 169.6 L1324.8 182.4"/>
<path d="M1324.8 182.4 L1324.0 200.1 L1316.1 208.0 L1302.8 218.7 L1296.2 244.7 L1281.7 252.9 L1265.8 264.2 L1242.2 261.5"/>
<path d="M1324.8 182.4 L1350.5 177.7 L1365.1 159.2"/>
<path d="M1365.1 159.2 L1357.1 126.6 L1353.2 104.6"/>
<path d="M1365.1 159.2 L1398.2 174.4 L1419.4 174.4 L1437.9 186.1 L1435.3 216.4 L1440.6 237.0 L1464.4 268.7 L1480.3 282.1 L1469.7 299.8 L1451.2 295.4 L1456.5 321.7 L1461.3 343.4"/>
<path d="M1244.6 369.1 L1263.1 358.4 L1289.6 349.9 L1339.9 364.9 L1369.1 367.0 L1395.6 371.2 L1418.1 369.1 L1428.7 377.6 L1431.3 352.0 L1445.9 345.6 L1461.3 343.4"/>
<path d="M1461.3 343.4 L1477.7 334.8 L1498.9 332.6"/>
<path d="M1074.0 512.3 L1077.7 514.7 L1090.9 522.6 L1099.7 522.6 L1116.1 519.8 L1118.7 510.7 L1136.0 504.8 L1146.6 506.7 L1157.1 502.0 L1162.4 491.6 L1186.3 490.8 L1194.2 498.8 L1206.2 496.4"/>
<path d="M1206.2 496.4 L1211.5 478.8 L1217.0 469.1"/>
<path d="M1206.2 496.4 L1226.0 514.7"/>
<path d="M1226.0 514.7 L1202.2 530.4 L1192.9 551.9 L1183.6 573.2 L1167.7 583.5 L1156.1 585.4"/>
<path d="M1156.1 585.4 L1138.6 583.9 L1120.1 593.4"/>
<path d="M1120.1 593.4 L1106.8 599.9 L1086.9 592.3 L1075.0 586.6 L1065.8 577.0 L1058.3 572.0"/>
<path d="M1058.3 572.0 L1052.5 565.5 L1046.2 556.9"/>
<path d="M1058.3 572.0 L1051.2 575.1 L1034.0 582.0 L1035.3 596.1 L1024.7 601.8 L1024.7 610.5 L1011.5 610.5 L1006.2 603.7 L992.9 610.1 L979.7 610.9"/>
<path d="M982.6 570.5 L974.4 578.9 L979.7 591.1 L985.0 605.6"/>
<path d="M1123.2 633.4 L1112.1 625.2 L1092.2 625.6 L1067.1 618.8 L1052.5 628.2 L1037.9 620.7 L1036.6 635.7 L1047.2 657.9 L1061.8 672.7 L1077.7 685.5 L1086.9 700.0 L1085.6 704.4"/>
<path d="M1087.7 705.5 L1101.5 710.9 L1108.1 717.4 L1110.0 722.8"/>
<path d="M1120.1 593.4 L1121.4 607.5 L1122.7 615.0 L1133.3 619.9 L1125.4 623.3 L1123.2 633.4"/>
<path d="M1123.2 633.4 L1132.0 633.8 L1126.7 646.8 L1132.0 665.3 L1136.0 674.5 L1128.5 682.9"/>
<path d="M1128.5 682.9 L1114.8 694.6 L1108.1 708.0 L1108.1 717.4"/>
<path d="M1128.5 682.9 L1147.9 698.2 L1158.5 708.0"/>
<path d="M1158.5 708.0 L1151.1 717.7"/>
<path d="M1151.1 717.7 L1142.6 718.1 L1133.3 727.1 L1132.5 742.4"/>
<path d="M1151.1 717.7 L1161.1 727.1 L1165.1 742.4"/>
<path d="M1164.8 742.0 L1178.3 730.6 L1191.1 728.8"/>
<path d="M1158.5 708.0 L1166.4 694.6 L1181.0 703.7 L1195.6 713.4 L1191.1 728.8"/>
<path d="M1191.1 728.8 L1211.7 726.3"/>
<path d="M1211.7 726.7 L1216.7 705.5 L1227.3 696.4 L1211.5 672.7 L1219.9 657.2"/>
<path d="M1219.9 657.2 L1215.4 639.4 L1202.2 643.1 L1186.3 634.5 L1190.3 620.7 L1170.4 599.9 L1156.1 585.4"/>
<path d="M1219.9 657.2 L1228.7 672.7 L1263.1 676.3 L1292.2 678.9 L1307.3 670.1 L1334.6 660.5 L1341.8 660.9 L1361.1 671.6 L1376.5 674.9"/>
<path d="M1226.0 514.7 L1234.0 508.7 L1260.5 516.6 L1279.0 523.7 L1289.6 516.6 L1313.4 512.7 L1324.8 502.4"/>
<path d="M1324.8 502.4 L1339.9 520.6 L1355.8 544.1 L1365.1 560.4 L1367.7 575.1 L1363.8 594.2 L1366.4 610.5"/>
<path d="M1366.4 610.5 L1383.6 615.8 L1394.2 612.4 L1403.5 613.1 L1407.5 619.9"/>
<path d="M1324.8 502.4 L1347.9 494.8 L1363.8 502.8 L1377.0 506.7 L1391.6 514.7 L1402.2 538.3 L1412.8 559.7 L1417.5 575.1 L1403.5 576.2 L1386.3 573.2 L1386.3 590.4 L1374.4 609.4 L1366.4 610.5"/>
<path d="M1211.7 726.7 L1215.4 734.2 L1227.3 746.7 L1226.8 761.2"/>
<path d="M1226.8 761.2 L1244.6 759.1 L1271.1 758.0 L1289.6 764.4 L1308.1 761.5 L1317.7 748.1"/>
<path d="M1317.7 748.1 L1333.3 737.8 L1347.9 734.9 L1361.9 738.5"/>
<path d="M1317.7 748.1 L1324.0 752.0 L1324.0 760.8 L1316.1 766.1 L1317.4 774.9 L1309.2 782.6"/>
<path d="M1226.8 761.2 L1212.8 768.9 L1199.5 769.6 L1196.9 775.6 L1175.2 778.4"/>
<path d="M1175.2 778.4 L1177.0 787.1 L1167.7 797.6 L1157.1 809.7 L1153.2 820.1 L1149.2 818.7"/>
<path d="M1164.8 742.0 L1162.4 760.8 L1166.4 770.3 L1170.4 776.7 L1175.2 778.4"/>
</g>
<g fill="none" stroke="#9c9a98" stroke-width="0.8" stroke-dasharray="3 2">
<path d="M538.6 215.0 L547.9 207.1 L557.1 195.5 L561.1 186.1 L565.1 176.7"/>
<path d="M537.3 292.3 L542.6 299.8 L546.6 306.4 L536.0 309.9 L539.9 323.9 L537.3 334.8 L537.3 345.6 L547.9 355.0 L549.2 364.9"/>
</g>
<g id="labels" paint-order="stroke" stroke="#f7f5f2" stroke-opacity="0.75" stroke-width="2.4" stroke-linejoin="round">
<text x="512.0" y="165.0" font-size="13.5" fill="#757575" textLength="52.1" lengthAdjust="spacingAndGlyphs">Glasgow</text>
<text x="544.0" y="199.7" font-size="16.5" fill="#9b9b9b" textLength="62.0" lengthAdjust="spacingAndGlyphs">UNITED</text>
<text x="534.2" y="219.4" font-size="16.5" fill="#9b9b9b" textLength="83.8" lengthAdjust="spacingAndGlyphs">KINGDOM</text>
<text x="464.0" y="244.3" font-size="9.0" fill="#9b9b9b" textLength="52.1" lengthAdjust="spacingAndGlyphs">ISLE OF MAN</text>
<text x="489.0" y="254.4" font-size="9.0" fill="#9b9b9b" textLength="17.4" lengthAdjust="spacingAndGlyphs">(UK)</text>
<text x="459.5" y="278.9" font-size="17.0" fill="#757575" textLength="52.1" lengthAdjust="spacingAndGlyphs">Dublin</text>
<text x="581.8" y="260.1" font-size="13.5" fill="#757575" textLength="34.4" lengthAdjust="spacingAndGlyphs">Leeds</text>
<text x="483.3" y="296.8" font-size="13.5" fill="#757575" textLength="71.3" lengthAdjust="spacingAndGlyphs">Manchester</text>
<text x="584.5" y="300.9" font-size="13.5" fill="#757575" textLength="52.8" lengthAdjust="spacingAndGlyphs">Sheffield</text>
<text x="351.5" y="306.5" font-size="16.0" fill="#9b9b9b" textLength="67.3" lengthAdjust="spacingAndGlyphs">IRELAND</text>
<text x="572.7" y="318.3" font-size="13.5" fill="#757575" textLength="74.7" lengthAdjust="spacingAndGlyphs">Birmingham</text>
<text x="622.5" y="359.5" font-size="17.0" fill="#757575" textLength="55.5" lengthAdjust="spacingAndGlyphs">London</text>
<text x="896.5" y="134.5" font-size="11.5" fill="#5675c6" textLength="44.2" lengthAdjust="spacingAndGlyphs">Kattegat</text>
<text x="811.6" y="164.6" font-size="16.0" fill="#9b9b9b" textLength="79.2" lengthAdjust="spacingAndGlyphs">DENMARK</text>
<text x="958.1" y="171.8" font-size="17.0" fill="#757575" textLength="103.7" lengthAdjust="spacingAndGlyphs">Copenhagen</text>
<text x="693.4" y="225.7" font-size="11.5" fill="#5675c6" textLength="51.4" lengthAdjust="spacingAndGlyphs">North Sea</text>
<text x="889.7" y="271.9" font-size="16.5" fill="#757575" textLength="69.1" lengthAdjust="spacingAndGlyphs">Hamburg</text>
<text x="801.9" y="292.9" font-size="13.5" fill="#757575" textLength="46.6" lengthAdjust="spacingAndGlyphs">Bremen</text>
<text x="704.5" y="313.3" font-size="13.5" fill="#9b9b9b" textLength="87.9" lengthAdjust="spacingAndGlyphs">NETHERLANDS</text>
<text x="981.4" y="315.6" font-size="17.0" fill="#757575" textLength="40.8" lengthAdjust="spacingAndGlyphs">Berlin</text>
<text x="1287.5" y="134.5" font-size="14.0" fill="#9b9b9b" textLength="46.7" lengthAdjust="spacingAndGlyphs">LATVIA</text>
<text x="1205.6" y="183.6" font-size="14.0" fill="#9b9b9b" textLength="74.7" lengthAdjust="spacingAndGlyphs">LITHUANIA</text>
<text x="1296.1" y="218.2" font-size="17.0" fill="#757575" textLength="52.1" lengthAdjust="spacingAndGlyphs">Vilnius</text>
<text x="1356.6" y="254.4" font-size="17.0" fill="#757575" textLength="43.7" lengthAdjust="spacingAndGlyphs">Minsk</text>
<text x="1314.2" y="287.3" font-size="16.0" fill="#9b9b9b" textLength="73.6" lengthAdjust="spacingAndGlyphs">BELARUS</text>
<text x="672.4" y="341.4" font-size="13.5" fill="#757575" textLength="63.8" lengthAdjust="spacingAndGlyphs">Rotterdam</text>
<text x="757.3" y="335.8" font-size="16.5" fill="#757575" textLength="92.8" lengthAdjust="spacingAndGlyphs">Amsterdam</text>
<text x="882.5" y="323.3" font-size="13.5" fill="#757575" textLength="59.3" lengthAdjust="spacingAndGlyphs">Hannover</text>
<text x="821.8" y="360.7" font-size="13.5" fill="#757575" textLength="63.4" lengthAdjust="spacingAndGlyphs">Dortmund</text>
<text x="726.0" y="384.0" font-size="13.5" fill="#757575" textLength="65.7" lengthAdjust="spacingAndGlyphs">Düsseldorf</text>
<text x="843.3" y="390.1" font-size="17.5" fill="#9b9b9b" textLength="83.8" lengthAdjust="spacingAndGlyphs">GERMANY</text>
<text x="709.7" y="409.8" font-size="14.0" fill="#9b9b9b" textLength="61.8" lengthAdjust="spacingAndGlyphs">BELGIUM</text>
<text x="854.2" y="418.4" font-size="13.5" fill="#757575" textLength="55.9" lengthAdjust="spacingAndGlyphs">Frankfurt</text>
<text x="1006.8" y="419.5" font-size="17.0" fill="#757575" textLength="51.6" lengthAdjust="spacingAndGlyphs">Prague</text>
<text x="741.9" y="445.6" font-size="10.0" fill="#9b9b9b" textLength="64.5" lengthAdjust="spacingAndGlyphs">LUXEMBOURG</text>
<text x="995.0" y="449.4" font-size="14.0" fill="#9b9b9b" textLength="60.0" lengthAdjust="spacingAndGlyphs">CZECHIA</text>
<text x="687.5" y="468.9" font-size="17.0" fill="#757575" textLength="33.6" lengthAdjust="spacingAndGlyphs">Paris</text>
<text x="866.0" y="476.0" font-size="13.5" fill="#757575" textLength="54.3" lengthAdjust="spacingAndGlyphs">Stuttgart</text>
<text x="947.5" y="496.5" font-size="13.5" fill="#757575" textLength="28.9" lengthAdjust="spacingAndGlyphs">Munic</text>
<text x="978.6" y="496.5" font-size="13.5" fill="#757575" textLength="7.0" lengthAdjust="spacingAndGlyphs">h</text>
<text x="1073.0" y="320.6" font-size="13.5" fill="#757575" textLength="45.0" lengthAdjust="spacingAndGlyphs">Poznan</text>
<text x="1182.3" y="329.0" font-size="17.0" fill="#757575" textLength="56.6" lengthAdjust="spacingAndGlyphs">Warsaw</text>
<text x="1446.7" y="320.6" font-size="13.5" fill="#757575" textLength="39.6" lengthAdjust="spacingAndGlyphs">Homel</text>
<text x="1096.9" y="359.1" font-size="17.0" fill="#9b9b9b" textLength="71.3" lengthAdjust="spacingAndGlyphs">POLAND</text>
<text x="1076.0" y="377.2" font-size="13.5" fill="#757575" textLength="51.5" lengthAdjust="spacingAndGlyphs">Wrocław</text>
<text x="1433.6" y="403.0" font-size="17.0" fill="#757575" textLength="28.3" lengthAdjust="spacingAndGlyphs">Kyiv</text>
<text x="1152.8" y="421.1" font-size="13.5" fill="#757575" textLength="44.2" lengthAdjust="spacingAndGlyphs">Krakow</text>
<text x="1259.9" y="430.9" font-size="13.5" fill="#757575" textLength="22.0" lengthAdjust="spacingAndGlyphs">Lviv</text>
<text x="1401.9" y="457.6" font-size="17.0" fill="#9b9b9b" textLength="73.5" lengthAdjust="spacingAndGlyphs">UKRAINE</text>
<text x="1108.7" y="479.5" font-size="14.0" fill="#9b9b9b" textLength="67.9" lengthAdjust="spacingAndGlyphs">SLOVAKIA</text>
<text x="461.8" y="618.6" font-size="11.5" fill="#5675c6" textLength="68.6" lengthAdjust="spacingAndGlyphs">Bay of Biscay</text>
<text x="655.4" y="567.0" font-size="17.5" fill="#9b9b9b" textLength="65.7" lengthAdjust="spacingAndGlyphs">FRANCE</text>
<text x="792.8" y="561.3" font-size="11.0" fill="#9b9b9b" textLength="69.8" lengthAdjust="spacingAndGlyphs">SWITZERLAND</text>
<text x="962.8" y="545.0" font-size="14.5" fill="#9b9b9b" textLength="59.8" lengthAdjust="spacingAndGlyphs">AUSTRIA</text>
<text x="966.7" y="589.2" font-size="14.5" fill="#9b9b9b" textLength="68.6" lengthAdjust="spacingAndGlyphs">SLOVENIA</text>
<text x="868.2" y="602.7" font-size="17.0" fill="#757575" textLength="41.2" lengthAdjust="spacingAndGlyphs">Milan</text>
<text x="827.5" y="616.8" font-size="13.5" fill="#757575" textLength="28.3" lengthAdjust="spacingAndGlyphs">Turin</text>
<text x="973.9" y="630.6" font-size="14.0" fill="#9b9b9b" textLength="50.5" lengthAdjust="spacingAndGlyphs">CROATIA</text>
<text x="861.4" y="642.4" font-size="13.5" fill="#757575" textLength="39.0" lengthAdjust="spacingAndGlyphs">Genoa</text>
<text x="1052.7" y="648.7" font-size="10.5" fill="#9b9b9b" textLength="63.4" lengthAdjust="spacingAndGlyphs">BOSNIA AND</text>
<text x="1047.1" y="659.8" font-size="10.5" fill="#9b9b9b" textLength="70.9" lengthAdjust="spacingAndGlyphs">HERZEGOVINA</text>
<text x="702.9" y="682.0" font-size="13.5" fill="#757575" textLength="54.8" lengthAdjust="spacingAndGlyphs">Marseille</text>
<text x="791.7" y="678.6" font-size="10.0" fill="#9b9b9b" textLength="43.7" lengthAdjust="spacingAndGlyphs">MONACO</text>
<text x="1089.0" y="556.3" font-size="14.5" fill="#9b9b9b" textLength="70.2" lengthAdjust="spacingAndGlyphs">HUNGARY</text>
<text x="1338.7" y="536.4" font-size="12.0" fill="#9b9b9b" textLength="61.1" lengthAdjust="spacingAndGlyphs">MOLDOVA</text>
<text x="1389.0" y="567.7" font-size="17.0" fill="#757575" textLength="70.1" lengthAdjust="spacingAndGlyphs">Chișinău</text>
<text x="1240.0" y="606.1" font-size="17.0" fill="#9b9b9b" textLength="82.8" lengthAdjust="spacingAndGlyphs">ROMANIA</text>
<text x="1167.8" y="624.7" font-size="17.0" fill="#757575" textLength="64.9" lengthAdjust="spacingAndGlyphs">Belgrade</text>
<text x="1317.0" y="638.5" font-size="17.0" fill="#757575" textLength="71.3" lengthAdjust="spacingAndGlyphs">Bucharest</text>
<text x="1146.3" y="672.9" font-size="14.0" fill="#9b9b9b" textLength="47.5" lengthAdjust="spacingAndGlyphs">SERBIA</text>
<text x="600.4" y="742.9" font-size="13.5" fill="#757575" textLength="55.6" lengthAdjust="spacingAndGlyphs">Zaragoza</text>
<text x="526.8" y="783.2" font-size="17.0" fill="#757575" textLength="52.0" lengthAdjust="spacingAndGlyphs">Madrid</text>
<text x="494.6" y="816.1" font-size="16.5" fill="#9b9b9b" textLength="47.6" lengthAdjust="spacingAndGlyphs">SPAIN</text>
<text x="614.6" y="817.4" font-size="13.5" fill="#757575" textLength="49.2" lengthAdjust="spacingAndGlyphs">Valencia</text>
<text x="633.2" y="720.3" font-size="10.0" fill="#9b9b9b" textLength="46.0" lengthAdjust="spacingAndGlyphs">ANDORRA</text>
<text x="640.7" y="796.1" font-size="11.5" fill="#5675c6" textLength="60.0" lengthAdjust="spacingAndGlyphs">Balearic Sea</text>
<text x="682.1" y="752.0" font-size="17.0" fill="#757575" textLength="71.8" lengthAdjust="spacingAndGlyphs">Barcelona</text>
<text x="923.0" y="710.8" font-size="16.5" fill="#9b9b9b" textLength="41.4" lengthAdjust="spacingAndGlyphs">ITALY</text>
<text x="955.4" y="732.3" font-size="17.0" fill="#757575" textLength="41.9" lengthAdjust="spacingAndGlyphs">Rome</text>
<text x="1001.8" y="770.6" font-size="17.0" fill="#757575" textLength="49.3" lengthAdjust="spacingAndGlyphs">Naples</text>
<text x="909.0" y="822.2" font-size="11.5" fill="#5675c6" textLength="74.0" lengthAdjust="spacingAndGlyphs">Tyrrhenian Sea</text>
<text x="1058.8" y="748.4" font-size="11.5" fill="#5675c6" textLength="39.2" lengthAdjust="spacingAndGlyphs">Adriatic</text>
<text x="1073.1" y="761.0" font-size="11.5" fill="#5675c6" textLength="17.0" lengthAdjust="spacingAndGlyphs">Sea</text>
<text x="1083.3" y="703.3" font-size="10.5" fill="#9b9b9b" textLength="71.3" lengthAdjust="spacingAndGlyphs">MONTENEGRO</text>
<text x="1196.5" y="703.8" font-size="17.0" fill="#757575" textLength="35.6" lengthAdjust="spacingAndGlyphs">Sofia</text>
<text x="1255.4" y="712.4" font-size="14.5" fill="#9b9b9b" textLength="69.0" lengthAdjust="spacingAndGlyphs">BULGARIA</text>
<text x="1152.8" y="723.0" font-size="10.5" fill="#9b9b9b" textLength="39.2" lengthAdjust="spacingAndGlyphs">KOSOVO</text>
<text x="1132.0" y="749.7" font-size="10.5" fill="#9b9b9b" textLength="100.7" lengthAdjust="spacingAndGlyphs">NORTH MACEDONIA</text>
<text x="1322.9" y="763.3" font-size="13.5" fill="#757575" textLength="52.5" lengthAdjust="spacingAndGlyphs">Esenyurt</text>
<text x="1392.8" y="766.0" font-size="17.0" fill="#757575" textLength="58.4" lengthAdjust="spacingAndGlyphs">Istanbul</text>
<text x="1232.3" y="777.6" font-size="13.5" fill="#757575" textLength="74.0" lengthAdjust="spacingAndGlyphs">Thessaloniki</text>
<text x="1116.1" y="789.4" font-size="10.5" fill="#9b9b9b" textLength="41.9" lengthAdjust="spacingAndGlyphs">ALBANIA</text>
<text x="1395.7" y="793.9" font-size="17.0" fill="#757575" textLength="39.2" lengthAdjust="spacingAndGlyphs">Bursa</text>
<text x="1432.0" y="829.0" font-size="13.5" fill="#757575" textLength="53.9" lengthAdjust="spacingAndGlyphs">Eskişehir</text>
</g>
<g id="dots">
<circle cx="506.6" cy="173.2" r="2.6" fill="#6a6a6a" stroke="#fff" stroke-opacity=".8" stroke-width="1.2"/>
<circle cx="577.7" cy="267.1" r="2.6" fill="#6a6a6a" stroke="#fff" stroke-opacity=".8" stroke-width="1.2"/>
<circle cx="559.1" cy="282.3" r="2.6" fill="#6a6a6a" stroke="#fff" stroke-opacity=".8" stroke-width="1.2"/>
<circle cx="580.7" cy="287.3" r="2.6" fill="#6a6a6a" stroke="#fff" stroke-opacity=".8" stroke-width="1.2"/>
<circle cx="568.7" cy="327.2" r="2.6" fill="#6a6a6a" stroke="#fff" stroke-opacity=".8" stroke-width="1.2"/>
<circle cx="884.1" cy="278.9" r="2.6" fill="#6a6a6a" stroke="#fff" stroke-opacity=".8" stroke-width="1.2"/>
<circle cx="852.6" cy="300.2" r="2.6" fill="#6a6a6a" stroke="#fff" stroke-opacity=".8" stroke-width="1.2"/>
<circle cx="737.6" cy="349.8" r="2.6" fill="#6a6a6a" stroke="#fff" stroke-opacity=".8" stroke-width="1.2"/>
<circle cx="877.3" cy="331.7" r="2.6" fill="#6a6a6a" stroke="#fff" stroke-opacity=".8" stroke-width="1.2"/>
<circle cx="816.8" cy="367.5" r="2.6" fill="#6a6a6a" stroke="#fff" stroke-opacity=".8" stroke-width="1.2"/>
<circle cx="799.2" cy="379.9" r="2.6" fill="#6a6a6a" stroke="#fff" stroke-opacity=".8" stroke-width="1.2"/>
<circle cx="849.4" cy="427.0" r="2.6" fill="#6a6a6a" stroke="#fff" stroke-opacity=".8" stroke-width="1.2"/>
<circle cx="1068.6" cy="329.0" r="2.6" fill="#6a6a6a" stroke="#fff" stroke-opacity=".8" stroke-width="1.2"/>
<circle cx="1071.0" cy="384.9" r="2.6" fill="#6a6a6a" stroke="#fff" stroke-opacity=".8" stroke-width="1.2"/>
<circle cx="1441.0" cy="329.0" r="2.6" fill="#6a6a6a" stroke="#fff" stroke-opacity=".8" stroke-width="1.2"/>
<circle cx="1147.4" cy="429.3" r="2.6" fill="#6a6a6a" stroke="#fff" stroke-opacity=".8" stroke-width="1.2"/>
<circle cx="1255.8" cy="437.2" r="2.6" fill="#6a6a6a" stroke="#fff" stroke-opacity=".8" stroke-width="1.2"/>
<circle cx="863.2" cy="610.2" r="2.6" fill="#6a6a6a" stroke="#fff" stroke-opacity=".8" stroke-width="1.2"/>
<circle cx="822.5" cy="625.4" r="2.6" fill="#6a6a6a" stroke="#fff" stroke-opacity=".8" stroke-width="1.2"/>
<circle cx="856.2" cy="649.8" r="2.6" fill="#6a6a6a" stroke="#fff" stroke-opacity=".8" stroke-width="1.2"/>
<circle cx="762.3" cy="689.9" r="2.6" fill="#6a6a6a" stroke="#fff" stroke-opacity=".8" stroke-width="1.2"/>
<circle cx="595.1" cy="750.0" r="2.6" fill="#6a6a6a" stroke="#fff" stroke-opacity=".8" stroke-width="1.2"/>
<circle cx="609.0" cy="825.6" r="2.6" fill="#6a6a6a" stroke="#fff" stroke-opacity=".8" stroke-width="1.2"/>
<circle cx="676.9" cy="759.2" r="2.6" fill="#6a6a6a" stroke="#fff" stroke-opacity=".8" stroke-width="1.2"/>
<circle cx="997.3" cy="778.7" r="2.6" fill="#6a6a6a" stroke="#fff" stroke-opacity=".8" stroke-width="1.2"/>
<circle cx="1226.9" cy="785.7" r="2.6" fill="#6a6a6a" stroke="#fff" stroke-opacity=".8" stroke-width="1.2"/>
<circle cx="1379.4" cy="771.9" r="2.6" fill="#6a6a6a" stroke="#fff" stroke-opacity=".8" stroke-width="1.2"/>
<circle cx="1387.6" cy="772.6" r="2.6" fill="#6a6a6a" stroke="#fff" stroke-opacity=".8" stroke-width="1.2"/>
<circle cx="1390.1" cy="801.1" r="2.6" fill="#6a6a6a" stroke="#fff" stroke-opacity=".8" stroke-width="1.2"/>
<circle cx="453.2" cy="288.4" r="4.4" fill="#fff" stroke="#e8352e" stroke-width="1.3"/><circle cx="453.2" cy="288.4" r="1.9" fill="#e8352e"/>
<circle cx="616.2" cy="368.7" r="4.4" fill="#fff" stroke="#e8352e" stroke-width="1.3"/><circle cx="616.2" cy="368.7" r="1.9" fill="#e8352e"/>
<circle cx="953.1" cy="181.3" r="4.4" fill="#fff" stroke="#e8352e" stroke-width="1.3"/><circle cx="953.1" cy="181.3" r="1.9" fill="#e8352e"/>
<circle cx="748.7" cy="331.7" r="4.4" fill="#fff" stroke="#e8352e" stroke-width="1.3"/><circle cx="748.7" cy="331.7" r="1.9" fill="#e8352e"/>
<circle cx="975.1" cy="324.5" r="4.4" fill="#fff" stroke="#e8352e" stroke-width="1.3"/><circle cx="975.1" cy="324.5" r="1.9" fill="#e8352e"/>
<circle cx="1001.8" cy="428.4" r="4.4" fill="#fff" stroke="#e8352e" stroke-width="1.3"/><circle cx="1001.8" cy="428.4" r="1.9" fill="#e8352e"/>
<circle cx="1176.8" cy="337.6" r="4.4" fill="#fff" stroke="#e8352e" stroke-width="1.3"/><circle cx="1176.8" cy="337.6" r="1.9" fill="#e8352e"/>
<circle cx="1289.8" cy="227.7" r="4.4" fill="#fff" stroke="#e8352e" stroke-width="1.3"/><circle cx="1289.8" cy="227.7" r="1.9" fill="#e8352e"/>
<circle cx="1350.5" cy="264.2" r="4.4" fill="#fff" stroke="#e8352e" stroke-width="1.3"/><circle cx="1350.5" cy="264.2" r="1.9" fill="#e8352e"/>
<circle cx="1428.6" cy="413.2" r="4.4" fill="#fff" stroke="#e8352e" stroke-width="1.3"/><circle cx="1428.6" cy="413.2" r="1.9" fill="#e8352e"/>
<circle cx="1161.4" cy="634.4" r="4.4" fill="#fff" stroke="#e8352e" stroke-width="1.3"/><circle cx="1161.4" cy="634.4" r="1.9" fill="#e8352e"/>
<circle cx="1310.9" cy="648.7" r="4.4" fill="#fff" stroke="#e8352e" stroke-width="1.3"/><circle cx="1310.9" cy="648.7" r="1.9" fill="#e8352e"/>
<circle cx="1384.4" cy="550.7" r="4.4" fill="#fff" stroke="#e8352e" stroke-width="1.3"/><circle cx="1384.4" cy="550.7" r="1.9" fill="#e8352e"/>
<circle cx="520.7" cy="793.2" r="4.4" fill="#fff" stroke="#e8352e" stroke-width="1.3"/><circle cx="520.7" cy="793.2" r="1.9" fill="#e8352e"/>
<circle cx="950.4" cy="741.4" r="4.4" fill="#fff" stroke="#e8352e" stroke-width="1.3"/><circle cx="950.4" cy="741.4" r="1.9" fill="#e8352e"/>
<circle cx="1237.5" cy="712.8" r="4.4" fill="#fff" stroke="#e8352e" stroke-width="1.3"/><circle cx="1237.5" cy="712.8" r="1.9" fill="#e8352e"/>
</g>
<g id="bubbles" fill="#54c6fd" fill-opacity="0.7" stroke="#0f7fc0" stroke-width="1.2">
<circle cx="551.0" cy="261.0" r="35.5"><title>UK</title></circle>
<circle cx="407.5" cy="309.0" r="19.5"><title>Ireland</title></circle>
<circle cx="857.5" cy="169.5" r="17.0"><title>Denmark</title></circle>
<circle cx="1275.8" cy="126.0" r="13.6"><title>Latvia</title></circle>
<circle cx="1249.3" cy="196.7" r="15.2"><title>Lithuania</title></circle>
<circle cx="1353.9" cy="284.6" r="18.1"><title>Belarus</title></circle>
<circle cx="768.6" cy="336.2" r="19.9"><title>Netherlands</title></circle>
<circle cx="894.7" cy="385.6" r="31.7"><title>Germany</title></circle>
<circle cx="743.2" cy="404.4" r="18.8"><title>Belgium</title></circle>
<circle cx="781.0" cy="440.4" r="13.6"><title>Luxembourg</title></circle>
<circle cx="1026.0" cy="441.7" r="17.0"><title>Czechia</title></circle>
<circle cx="1127.0" cy="337.4" r="17.7"><title>Poland</title></circle>
<circle cx="1134.9" cy="482.3" r="14.3"><title>Slovakia</title></circle>
<circle cx="1448.3" cy="451.9" r="22.6"><title>Ukraine</title></circle>
<circle cx="684.4" cy="565.8" r="11.3"><title>France</title></circle>
<circle cx="837.6" cy="559.0" r="12.9"><title>Switzerland</title></circle>
<circle cx="872.7" cy="545.7" r="11.3"><title>Liechtenstein</title></circle>
<circle cx="993.9" cy="528.0" r="17.7"><title>Austria</title></circle>
<circle cx="1012.0" cy="585.1" r="14.7"><title>Slovenia</title></circle>
<circle cx="1034.6" cy="613.6" r="15.2"><title>Croatia</title></circle>
<circle cx="815.7" cy="674.5" r="11.3"><title>Monaco</title></circle>
<circle cx="949.7" cy="666.8" r="11.3"><title>San Marino</title></circle>
<circle cx="1136.5" cy="544.0" r="17.5"><title>Hungary</title></circle>
<circle cx="1377.0" cy="540.0" r="14.8"><title>Moldova</title></circle>
<circle cx="1086.0" cy="653.2" r="12.5"><title>Bosnia</title></circle>
<circle cx="661.0" cy="717.4" r="11.8"><title>Andorra</title></circle>
<circle cx="1295.0" cy="715.8" r="15.8"><title>Bulgaria</title></circle>
<circle cx="1194.9" cy="750.9" r="13.1"><title>North Macedonia</title></circle>
<circle cx="1149.7" cy="772.4" r="13.1"><title>Albania</title></circle>
<circle cx="1202.2" cy="841.4" r="19.2"><title>Greece</title></circle>
</g>
<circle cx="1429.7" cy="149.6" r="19" fill="#fff" stroke="#111" stroke-width="1.6"/>
<path d="M1419.5 149.6 h20.5" stroke="#111" stroke-width="2" fill="none"/>
<path d="M1429.7 139.3 v20.5" stroke="#111" stroke-width="2" fill="none"/>
<circle cx="1429.7" cy="214.8" r="19" fill="#fff" stroke="#111" stroke-width="1.6"/>
<path d="M1419.5 214.8 h20.5" stroke="#111" stroke-width="2" fill="none"/>
<g id="bing"><rect x="237.6" y="809.8" width="5.2" height="5.2" fill="#f25022"/><rect x="243.6" y="809.8" width="5.2" height="5.2" fill="#7fba00"/><rect x="237.6" y="815.8" width="5.2" height="5.2" fill="#00a4ef"/><rect x="243.6" y="815.8" width="5.2" height="5.2" fill="#ffb900"/>
<text x="252" y="819.5" font-size="10.5" fill="#5c5c5c" textLength="59.7" lengthAdjust="spacingAndGlyphs">Microsoft Bing</text></g>
<text x="1284.1" y="822.3" font-size="10.4" fill="#111" textLength="136.6" lengthAdjust="spacingAndGlyphs">© 2026 Microsoft Corporation</text>
<text x="1430.4" y="822.3" font-size="10.4" fill="#3046b5" text-decoration="underline" textLength="27.6" lengthAdjust="spacingAndGlyphs">Terms</text>
</svg>
<div id="tip" class="abs" style="left:655px;top:472px;width:322px;height:61.5px;border:1px solid #2a2a2a;background:#edf5fc;box-shadow:0 0 7px rgba(255,255,255,.55),0 1px 5px rgba(0,0,0,.22)"><div class="abs" style="left:0;top:0;width:160px;height:59.5px;background:#045d8c"></div></div>
<svg class="abs" style="left:976.5px;top:513px" width="8" height="14" viewBox="0 0 8 14"><path d="M0 0.5L6.6 7 0 13.5z" fill="#333"/></svg>
<span class="t" style="left:701.60px;top:492.11px;font-size:22.20px;color:#fff;transform:scaleX(0.9928);">Austria</span>
<span class="t" style="left:864.20px;top:492.11px;font-size:22.20px;color:#666;transform:scaleX(0.9337);">18,474</span>
<nav id="sidebar" class="abs">
<a class="abs" style="top:1.7px"><span class="t" style="left:38.65px;top:10.13px;font-size:16.50px;color:#f2f8fc;transform:scaleX(0.9702);">Tournament Overview</span></a>
<a class="abs" style="top:39.5px"><span class="t" style="left:46.80px;top:10.13px;font-size:16.50px;color:#f2f8fc;transform:scaleX(0.9268);">Tournament Classes</span></a>
<a class="abs" style="top:77.4px"><span class="t" style="left:69.70px;top:10.13px;font-size:16.50px;color:#f2f8fc;transform:scaleX(0.9450);">Market Share</span></a>
<a class="abs" style="top:115.2px"><span class="t" style="left:81.40px;top:10.13px;font-size:16.50px;color:#f2f8fc;transform:scaleX(0.9335);">Rake Map</span></a>
<a class="abs" style="top:153.1px"><span class="t" style="left:36.30px;top:10.13px;font-size:16.50px;color:#f2f8fc;transform:scaleX(0.9610);">Country Rake Timeline</span></a>
<a class="abs" style="top:190.9px"><span class="t" style="left:86.15px;top:10.13px;font-size:16.50px;color:#f2f8fc;transform:scaleX(0.9324);">Overlays</span></a>
<a class="abs" style="top:228.7px"><span class="t" style="left:47.10px;top:10.13px;font-size:16.50px;color:#f2f8fc;transform:scaleX(0.9401);">Re-Entries / Rebuys</span></a>
<a class="abs" style="top:266.6px"><span class="t" style="left:73.85px;top:10.13px;font-size:16.50px;color:#f2f8fc;transform:scaleX(0.9029);">Stake Levels</span></a>
<a class="abs" style="top:304.4px"><span class="t" style="left:73.30px;top:10.13px;font-size:16.50px;color:#f2f8fc;transform:scaleX(0.9329);">New Players</span></a>
<a class="abs sel" style="top:342.3px"><span class="t" style="left:48.00px;top:10.13px;font-size:16.50px;color:#fff;transform:scaleX(0.9513);">New Players Map</span></a>
<a class="abs" style="top:380.1px"><span class="t" style="left:63.85px;top:10.13px;font-size:16.50px;color:#f2f8fc;transform:scaleX(0.9411);">Unique Players</span></a>
<a class="abs" style="top:417.9px"><span class="t" style="left:65.65px;top:10.13px;font-size:16.50px;color:#f2f8fc;transform:scaleX(0.9345);">Game Variants</span></a>
<a class="abs" style="top:455.8px"><span class="t" style="left:69.55px;top:10.13px;font-size:16.50px;color:#f2f8fc;transform:scaleX(0.9391);">Speed &amp; Size</span></a>
<a class="abs" style="top:493.6px"><span class="t" style="left:31.65px;top:10.13px;font-size:16.50px;color:#f2f8fc;transform:scaleX(0.9755);">Upcoming Tournaments</span></a>
<a class="abs" style="top:531.5px"><span class="t" style="left:63.70px;top:10.13px;font-size:16.50px;color:#f2f8fc;transform:scaleX(0.9287);">Gross Turnover</span></a>
<a class="abs" style="top:569.3px"><span class="t" style="left:54.70px;top:10.13px;font-size:16.50px;color:#f2f8fc;transform:scaleX(0.9490);">Cash by Big Blind</span></a>
<a class="abs" style="top:607.1px"><span class="t" style="left:55.70px;top:10.13px;font-size:16.50px;color:#f2f8fc;transform:scaleX(0.9679);">Cash by Network</span></a>
<a class="abs" style="top:645.0px"><span class="t" style="left:63.70px;top:10.13px;font-size:16.50px;color:#f2f8fc;transform:scaleX(0.9362);">Cash Timelines</span></a>
<a class="abs" style="top:682.8px"><span class="t" style="left:97.60px;top:10.13px;font-size:16.50px;color:#f2f8fc;transform:scaleX(0.9162);">News</span></a>
<a class="abs" style="top:720.7px"><span class="t" style="left:30.80px;top:10.13px;font-size:16.50px;color:#a3ddd9;transform:scaleX(0.9534);">Expanded Reports ($$$)</span></a>
</nav>
<header id="header" class="abs"></header>
<div id="logo" class="abs"></div>
<svg class="abs" style="left:2px;top:0" width="224" height="82" viewBox="2 0 224 82" font-family="Liberation Sans, sans-serif" font-weight="700" fill="#fff">
<text x="11.4" y="48.3" font-size="27.4" textLength="103.6" lengthAdjust="spacingAndGlyphs" stroke="#fff" stroke-width="1.1" stroke-linejoin="round">SHARK</text>
<text x="114.6" y="48.3" font-size="27.4" textLength="35.6" lengthAdjust="spacingAndGlyphs">SC</text>
<circle cx="167.9" cy="38.75" r="15.4" fill="none" stroke="#fff" stroke-width="4.1"/>
<g stroke="#fff" stroke-width="0.8" fill="none"><path d="M153 38.7h30M167.9 24v30"/><path stroke-width="0.7" d="M165.6 27.4h4.6M165.6 30.2h4.6M165.6 33h4.6M165.6 35.8h4.6M165.6 41.6h4.6M165.6 44.4h4.6M165.6 47.2h4.6M165.6 50h4.6"/></g>
<text x="185.6" y="48.3" font-size="27.4" textLength="34.2" lengthAdjust="spacingAndGlyphs">PE</text>
</svg>
<h1 class="t" style="left:274.40px;top:18.22px;font-size:39.20px;color:#fff;transform:scaleX(0.8861);font-weight:400;">New Players Map</h1>
<div class="abs datebox" style="left:1258px;width:77px"></div><div class="abs datebox" style="left:1342px;width:76px"></div>
<span class="t" style="left:1265.80px;top:19.74px;font-size:12.00px;color:#3a3a3a;transform:scaleX(0.9274);">14/04/2019</span>
<span class="t" style="left:1349.10px;top:19.74px;font-size:12.00px;color:#3a3a3a;transform:scaleX(0.9640);">30/06/2021</span>
<svg class="abs" style="left:1250px;top:20px" width="243" height="62" viewBox="1250 20 243 62">
<rect x="1273.2" y="61.8" width="149.2" height="3.9" rx="1.9" fill="#f3f1ee"/>
<circle cx="1381.6" cy="64.2" r="14" fill="#fff"/>
<circle cx="1360.2" cy="64.2" r="14.3" fill="#fff" stroke="#e6e6e6" stroke-width="0.8"/>
<circle cx="1470.3" cy="42.5" r="13.8" fill="none" stroke="#fff" stroke-width="3.6"/>
<rect x="1468.5" y="39.6" width="3.7" height="9.2" fill="#fff"/><circle cx="1470.35" cy="35.8" r="2.1" fill="#fff"/>
</svg>
<aside id="fpb" class="abs">
<div class="abs tan" style="left:-20px;top:45.3px;width:71px;height:33.4px;border-radius:2px"></div>
<div class="abs" style="left:0;top:83px;width:57px;height:1px;background:#c9b6a6"></div>
<div class="abs card" style="left:-10px;top:125.3px;width:64.5px;height:49.2px"></div>
<div class="abs card" style="left:-10px;top:232.5px;width:64.3px;height:282.7px;background:#f3f2f1"></div>
<div class="abs" style="left:-10px;top:305.9px;width:59.8px;height:23.6px;background:#fff;border:1px solid #b3b0ad;border-radius:2px"></div>
<div class="abs" style="left:-10px;top:334px;width:59.8px;height:22px;background:#fff"></div>
<div class="abs" style="left:42.1px;top:386.6px;width:7.7px;height:19px;background:#8a8886"></div>
<div class="abs card" style="left:-10px;top:522.3px;width:64.2px;height:47.5px"></div>
<div class="abs card" style="left:-10px;top:577.9px;width:64.2px;height:270px"></div>
<div class="abs" style="left:-10px;top:650.1px;width:58.9px;height:24.4px;background:#fff;border:1px solid #b3b0ad;border-radius:2px"></div>
<div class="abs" style="left:0;top:701.2px;width:49px;height:1px;background:#c8c6c4"></div>
<div class="abs" style="left:54.2px;top:827.5px;width:3px;height:12px;background:#fff"></div>
</aside>
<svg class="abs" style="left:1798px;top:0" width="57" height="838" viewBox="1798 0 57 838">
<path d="M1841.1 15.4l3.6 3.8-3.6 3.8M1844.9 15.4l3.6 3.8-3.6 3.8" fill="none" stroke="#17365a" stroke-width="1.3" stroke-linecap="round" stroke-linejoin="round"/>
<g fill="#17365a"><circle cx="1840" cy="110.6" r="0.9"/><circle cx="1843.2" cy="110.6" r="0.9"/><circle cx="1846.4" cy="110.6" r="0.9"/><circle cx="1840" cy="218" r="0.9"/><circle cx="1843.2" cy="218" r="0.9"/><circle cx="1846.4" cy="218" r="0.9"/></g>
<path d="M1798.2 139.3l3.8 4.2 3.8 -4.2" fill="none" stroke="#17365a" stroke-width="0.9" stroke-linecap="round" stroke-linejoin="round"/>
<path d="M1828.1 141.5l4.3-4.3 3.9 3.9-5.2 5.2h-2.4l-1.9-1.9zM1830.0 139.9l3.6 3.6M1829.4 145.9h6" fill="none" stroke="#c2c0be" stroke-width="0.9" stroke-linejoin="round" stroke-linecap="round"/>
<path d="M1798.2 250.5l3.8 -4.2 3.8 4.2" fill="none" stroke="#17365a" stroke-width="0.9" stroke-linecap="round" stroke-linejoin="round"/>
<path d="M1828.1 248.5l4.3-4.3 3.9 3.9-5.2 5.2h-2.4l-1.9-1.9zM1830.0 246.9l3.6 3.6M1829.4 252.9h6" fill="none" stroke="#333" stroke-width="0.9" stroke-linejoin="round" stroke-linecap="round"/>
<path d="M1827.8 314.5l4.3 4.6 4.3 -4.6" fill="none" stroke="#333" stroke-width="1.2" stroke-linecap="round" stroke-linejoin="round"/>
<path d="M1797.8 535.2l3.8 4.2 3.8 -4.2" fill="none" stroke="#17365a" stroke-width="0.9" stroke-linecap="round" stroke-linejoin="round"/>
<path d="M1828.0 537.5l4.3-4.3 3.9 3.9-5.2 5.2h-2.4l-1.9-1.9zM1829.9 535.9l3.6 3.6M1829.3 541.9h6" fill="none" stroke="#b9c3cf" stroke-width="0.9" stroke-linejoin="round" stroke-linecap="round"/>
<path d="M1797.8 595.4l3.8 -4.2 3.8 4.2" fill="none" stroke="#17365a" stroke-width="0.9" stroke-linecap="round" stroke-linejoin="round"/>
<path d="M1828.0 593.5l4.3-4.3 3.9 3.9-5.2 5.2h-2.4l-1.9-1.9zM1829.9 591.9l3.6 3.6M1829.3 597.9h6" fill="none" stroke="#b9c3cf" stroke-width="0.9" stroke-linejoin="round" stroke-linecap="round"/>
<path d="M1827.6 659.9l4.3 4.6 4.3 -4.6" fill="none" stroke="#17365a" stroke-width="1.2" stroke-linecap="round" stroke-linejoin="round"/>
</svg>
<span class="t" style="left:1832.53px;top:370.44px;font-size:12.00px;color:#252423;">1</span>
<span class="t" style="left:1832.53px;top:393.64px;font-size:12.00px;color:#252423;">1</span>
<span class="t" style="left:1832.53px;top:416.94px;font-size:12.00px;color:#252423;">1</span>
<span class="t" style="left:1832.53px;top:439.74px;font-size:12.00px;color:#252423;">1</span>
<span class="t" style="left:1832.53px;top:463.04px;font-size:12.00px;color:#252423;">1</span>
<span class="t" style="left:1832.53px;top:485.84px;font-size:12.00px;color:#252423;">1</span>
<span class="t" style="left:1808.70px;top:736.34px;font-size:12.00px;color:#17365a;transform:scaleX(0.9380);">10593</span>
<span class="t" style="left:1808.70px;top:759.14px;font-size:12.00px;color:#17365a;transform:scaleX(0.9380);">14537</span>
<span class="t" style="left:1808.70px;top:782.24px;font-size:12.00px;color:#17365a;transform:scaleX(0.9380);">12751</span>
<aside id="fp" class="abs">
<div class="abs tan" style="left:8.2px;top:45.3px;width:180.7px;height:33.4px;border-radius:2px"></div>
<div class="abs" style="left:0;top:83px;width:191px;height:1px;background:#c9b6a6"></div>
<div class="abs card" style="left:8.3px;top:125.3px;width:190px;height:49.6px;background:#f3f2f1"></div>
<div class="abs card" style="left:8.3px;top:181.6px;width:190px;height:48.7px"></div>
<div class="abs card" style="left:8.3px;top:237.6px;width:190px;height:48.7px"></div>
<div class="abs" style="left:34px;top:3px;width:129px;height:32px;background:#fff;border-radius:3px;box-shadow:0 3px 10px rgba(0,0,0,.33)"></div>
</aside>
<svg class="abs" style="left:1607px;top:0" width="191" height="300" viewBox="1607 0 191 300">
<path d="M1770 7.5L1780.2 18.8 1770 30z" fill="#fff"/>
<path d="M1622 14.8h12.4M1624.3 19h7.8M1626.4 23.2h3.6" stroke="#17365a" stroke-width="1.2" stroke-linecap="round" fill="none"/>
<path d="M1788.0 15.4l3.6 3.8-3.6 3.8M1791.8 15.4l3.6 3.8-3.6 3.8" fill="none" stroke="#17365a" stroke-width="1.3" stroke-linecap="round" stroke-linejoin="round"/>
<circle cx="1633.2" cy="60.6" r="3.6" fill="none" stroke="#17365a" stroke-width="1"/><path d="M1635.9 63.4l3.6 3.6" stroke="#17365a" stroke-width="1" stroke-linecap="round"/>
<g fill="#17365a"><circle cx="1786.8" cy="110.6" r="0.9"/><circle cx="1790" cy="110.6" r="0.9"/><circle cx="1793.2" cy="110.6" r="0.9"/></g>
<path d="M1745.4 139.3l3.8 4.2 3.8 -4.2" fill="none" stroke="#333" stroke-width="0.9" stroke-linecap="round" stroke-linejoin="round"/>
<path d="M1775.1 141.5l4.3-4.3 3.9 3.9-5.2 5.2h-2.4l-1.9-1.9zM1777.0 139.9l3.6 3.6M1776.4 145.9h6" fill="none" stroke="#333" stroke-width="0.9" stroke-linejoin="round" stroke-linecap="round"/>
<path d="M1745.4 195.2l3.8 4.2 3.8 -4.2" fill="none" stroke="#17365a" stroke-width="0.9" stroke-linecap="round" stroke-linejoin="round"/>
<path d="M1775.1 197.5l4.3-4.3 3.9 3.9-5.2 5.2h-2.4l-1.9-1.9zM1777.0 195.9l3.6 3.6M1776.4 201.9h6" fill="none" stroke="#b9c3cf" stroke-width="0.9" stroke-linejoin="round" stroke-linecap="round"/>
<path d="M1745.4 251.2l3.8 4.2 3.8 -4.2" fill="none" stroke="#17365a" stroke-width="0.9" stroke-linecap="round" stroke-linejoin="round"/>
<path d="M1775.1 253.5l4.3-4.3 3.9 3.9-5.2 5.2h-2.4l-1.9-1.9zM1777.0 251.9l3.6 3.6M1776.4 257.9h6" fill="none" stroke="#b9c3cf" stroke-width="0.9" stroke-linejoin="round" stroke-linecap="round"/>
</svg>
<span class="t" style="left:1649.40px;top:13.74px;font-size:12.00px;color:#3b3330;transform:scaleX(1.0109);">Show/hide filter pane</span>
<span class="t" style="left:1652.40px;top:56.60px;font-size:12.40px;color:#17365a;transform:scaleX(0.9646);">Search</span>
<span class="t" style="left:1616.50px;top:102.64px;font-size:12.00px;color:#17365a;transform:scaleX(0.9814);">Filters on this page</span>
<span class="t" style="left:1625.40px;top:136.84px;font-size:12.00px;color:#1b1a19;font-weight:700;transform:scaleX(1.0256);">Network Name</span>
<span class="t" style="left:1625.40px;top:156.74px;font-size:12.00px;color:#252423;transform:scaleX(0.9207);">is PokerStars</span>
<span class="t" style="left:1625.40px;top:192.84px;font-size:12.00px;color:#252423;transform:scaleX(0.9414);">Region</span>
<span class="t" style="left:1625.40px;top:212.74px;font-size:12.00px;color:#252423;transform:scaleX(0.9421);">is (All)</span>
<span class="t" style="left:1625.40px;top:248.84px;font-size:12.00px;color:#252423;transform:scaleX(0.9900);">Country</span>
<span class="t" style="left:1625.40px;top:268.74px;font-size:12.00px;color:#252423;transform:scaleX(0.9421);">is (All)</span>
<div id="bottomstrip" class="abs"><i class="abs" style="left:10px;top:0;width:1px;height:3px;background:#b5b5b5"></i><i class="abs" style="left:207px;top:0;width:1px;height:3px;background:#b5b5b5"></i></div>
</body></html>
